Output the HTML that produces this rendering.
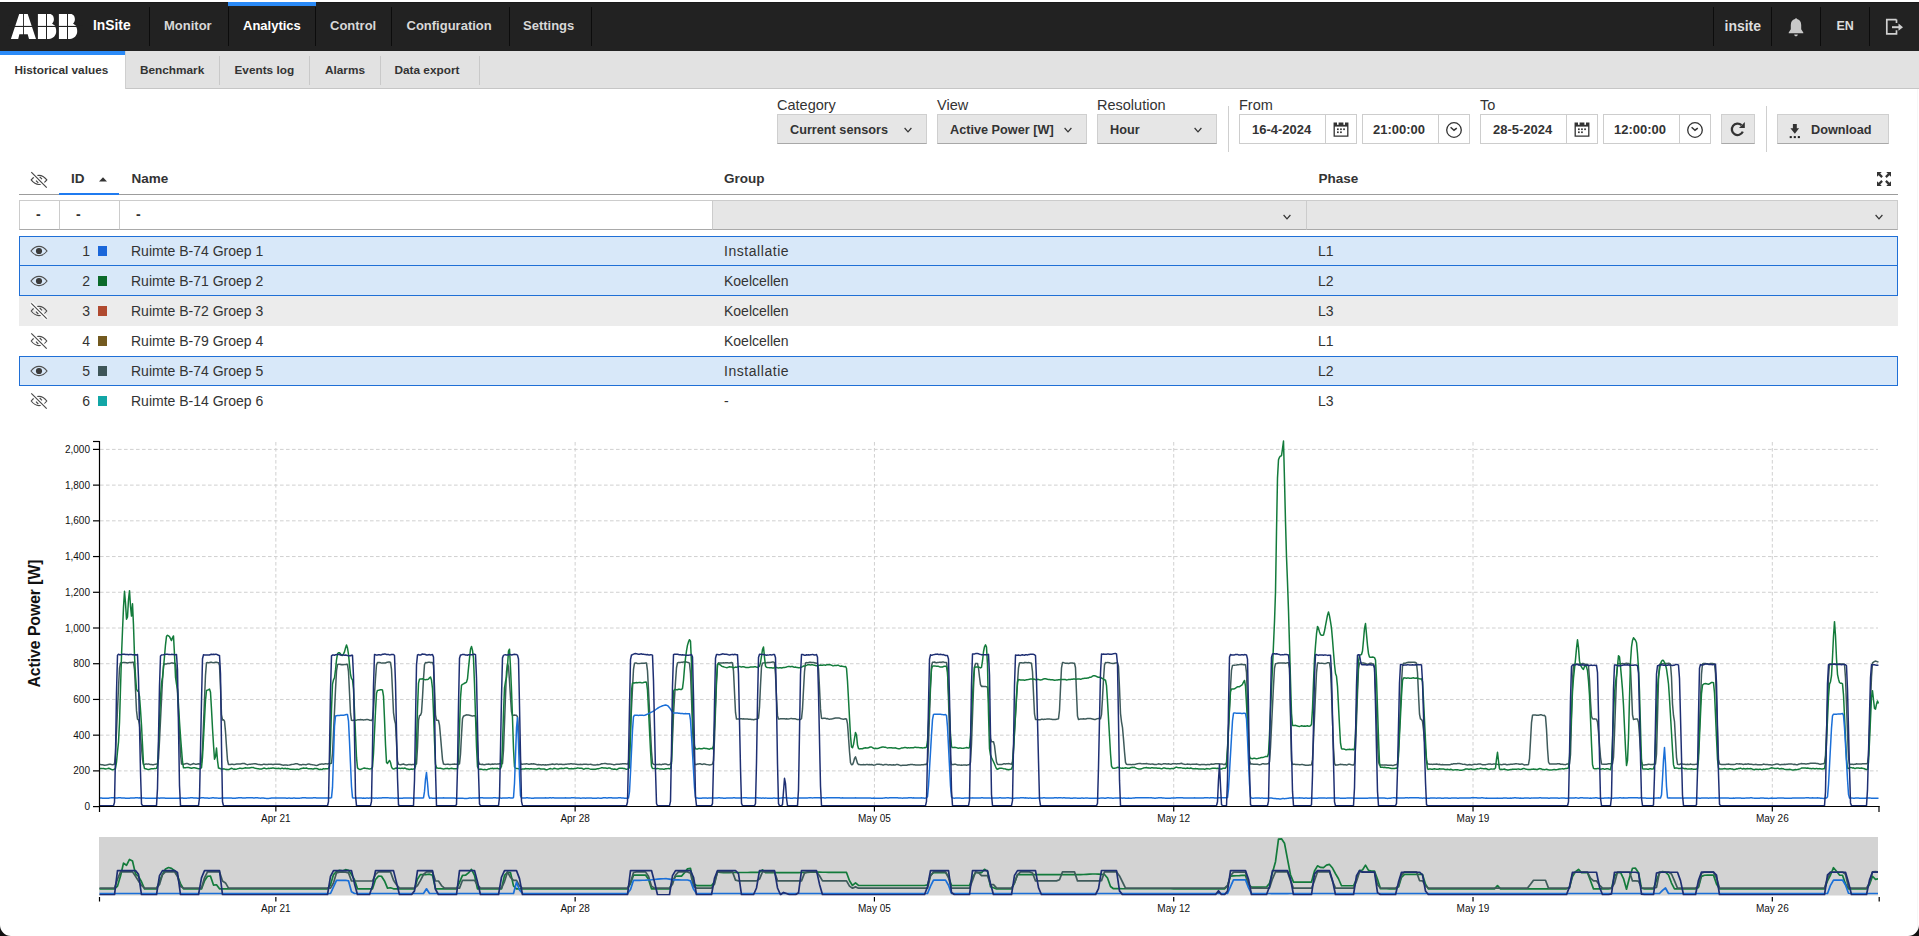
<!DOCTYPE html>
<html><head><meta charset="utf-8"><title>ABB InSite - Historical values</title>
<style>
*{box-sizing:border-box;margin:0;padding:0}
html,body{width:1919px;height:936px;overflow:hidden;background:#fff}
body{position:relative;font-family:"Liberation Sans",sans-serif;color:#333}
.abs{position:absolute}
#hdr{position:absolute;left:0;top:2px;width:1919px;height:49px;background:#222;border-top:1px solid #1a1a1a}
.sep{position:absolute;top:4px;width:1.2px;height:39px;background:#0c0c0c}
.nav{position:absolute;top:15px;font-size:13px;font-weight:bold;color:#d8d8d8;white-space:nowrap;line-height:16px}
#sub{position:absolute;left:0;top:51px;width:1919px;height:38px;background:#e2e2e2;border-bottom:1px solid #c6c6c6}
.stab{position:absolute;top:11.5px;font-size:11.8px;font-weight:bold;color:#333;white-space:nowrap;line-height:15px}
.ssep{position:absolute;top:4.5px;width:1px;height:29px;background:#c9c9c9}
.lbl{position:absolute;top:96.5px;font-size:14.5px;color:#333;line-height:16px;white-space:nowrap}
.sel{position:absolute;top:114px;height:30px;background:#e6e6e6;border:1px solid #cfcfcf;border-bottom:1px solid #a8a8a8}
.sel span{position:absolute;left:12px;top:8px;font-size:12.7px;font-weight:bold;color:#333;white-space:nowrap;line-height:15px}
.chev{position:absolute;top:11.5px;width:8px;height:6px}
.inp{position:absolute;top:114px;height:30px;background:#fff;border:1px solid #cdcdcd}
.inp span{position:absolute;top:7px;font-size:13px;font-weight:bold;color:#333;white-space:nowrap;line-height:15px}
.inp .dv{position:absolute;top:0;width:1px;height:28px;background:#cdcdcd}
.vsep{position:absolute;top:106px;width:1px;height:46px;background:#cfcfcf}
.th{position:absolute;top:171px;font-size:13.5px;font-weight:bold;color:#333;line-height:16px;white-space:nowrap}
.fc{position:absolute;top:200px;height:30px;border:1px solid #cccccc;border-bottom:1.5px solid #a9a9a9}
.row{position:absolute;left:19px;width:1879px;height:30px}
.row.sel2{background:#d8e8f9;border:1.3px solid #1f6fd6}
.cell{position:absolute;top:7px;font-size:14px;color:#333;line-height:16px;white-space:nowrap}
.num{position:absolute;top:7px;font-size:14px;color:#333;line-height:16px;text-align:right;width:20px}
.sq{position:absolute;width:9px;height:10px}
.chart{position:absolute;left:0;top:0}
</style></head>
<body>
<div id="hdr">
  <svg class="abs" style="left:0;top:-3px" width="90" height="50" viewBox="0 0 90 50">
    <g fill="#fff">
      <path d="M10.9,38.9 L19.2,13.9 H27.7 L36,38.9 H29 L27.7,34.3 H19.4 L18.2,38.9 Z"/>
      <path d="M37.9,13.9 H49.6 C52.3,13.9 53.9,16.3 53.9,19.3 C53.9,21.3 53.2,22.6 52,23.5 L55.3,25.9 L55.3,27 C56,28 56.2,30 56.2,31.5 C56.2,35.5 53,38.9 49,38.9 H37.9 Z"/>
      <path d="M58.9,13.9 H70.6 C73.3,13.9 74.9,16.3 74.9,19.3 C74.9,21.3 74.2,22.6 73,23.5 L76.3,25.9 L76.3,27 C77,28 77.2,30 77.2,31.5 C77.2,35.5 74,38.9 70,38.9 H58.9 Z"/>
    </g>
    <g fill="#222">
      <rect x="8" y="25.9" width="75" height="1.1"/>
      <rect x="23" y="12" width="0.9" height="28"/>
      <rect x="46" y="12" width="1" height="28"/>
      <rect x="67" y="12" width="1" height="28"/>
    </g>
  </svg>
  <div class="nav" style="left:93px;top:14.5px;color:#fff;font-size:13.8px">InSite</div>
  <div class="sep" style="left:149px"></div>
  <div class="abs" style="left:228px;top:-1px;width:87.5px;height:4px;background:#2a8af7"></div>
  <div class="nav" style="left:164px">Monitor</div>
  <div class="sep" style="left:228px"></div>
  <div class="nav" style="left:243px;color:#fff">Analytics</div>
  <div class="sep" style="left:315px"></div>
  <div class="nav" style="left:330px">Control</div>
  <div class="sep" style="left:391px"></div>
  <div class="nav" style="left:406.5px">Configuration</div>
  <div class="sep" style="left:508.5px"></div>
  <div class="nav" style="left:523px">Settings</div>
  <div class="sep" style="left:590.5px"></div>

  <div class="sep" style="left:1713px"></div>
  <div class="nav" style="left:1724.5px;top:14.5px;font-size:14px;color:#ddd">insite</div>
  <div class="sep" style="left:1771px"></div>
  <svg class="abs" style="left:1787px;top:12.8px" width="18" height="22" viewBox="0 0 18 22">
    <path d="M9,2.2 C9.6,2.2 10,2.6 10,3.1 C12.6,3.7 14.2,6 14.2,9 L14.2,13.2 L16.3,16.6 L16.3,17.3 L1.7,17.3 L1.7,16.6 L3.8,13.2 L3.8,9 C3.8,6 5.4,3.7 8,3.1 C8,2.6 8.4,2.2 9,2.2 Z M7.2,18.4 L10.8,18.4 C10.8,19.5 10,20.3 9,20.3 C8,20.3 7.2,19.5 7.2,18.4 Z" fill="#c8c8c8"/>
  </svg>
  <div class="sep" style="left:1820px"></div>
  <div class="nav" style="left:1836.5px;font-size:12.5px;color:#ddd">EN</div>
  <div class="sep" style="left:1869px"></div>
  <svg class="abs" style="left:1884px;top:12.3px" width="22" height="22" viewBox="0 0 22 22">
    <path d="M12.5,4.6 H2.8 V18.8 H12.5 V15.2 M12.5,8 V4.6" fill="none" stroke="#d0d0d0" stroke-width="1.7"/>
    <path d="M8,12.2 H15.5" stroke="#d0d0d0" stroke-width="2"/>
    <path d="M14.5,8.6 L19,12.2 L14.5,15.8 Z" fill="#d0d0d0"/>
  </svg>
</div>

<div id="sub">
  <div class="abs" style="left:0;top:0;width:125px;height:38px;background:#fff"></div>
  <div class="abs" style="left:0;top:0;width:125px;height:4px;background:#2a8af7"></div>
  <div class="abs" style="left:125px;top:0;width:1px;height:38px;background:#cfcfcf"></div>
  <div class="abs" style="left:0;top:37px;width:125px;height:2px;background:#fff"></div>
  <div class="stab" style="left:14.5px">Historical values</div>
  <div class="stab" style="left:140px">Benchmark</div>
  <div class="ssep" style="left:219px"></div>
  <div class="stab" style="left:234.5px">Events log</div>
  <div class="ssep" style="left:309px"></div>
  <div class="stab" style="left:325px">Alarms</div>
  <div class="ssep" style="left:380px"></div>
  <div class="stab" style="left:394.5px">Data export</div>
  <div class="ssep" style="left:479px"></div>
</div>

<!-- controls -->
<div class="lbl" style="left:777px">Category</div>
<div class="lbl" style="left:937px">View</div>
<div class="lbl" style="left:1097px">Resolution</div>
<div class="lbl" style="left:1239px">From</div>
<div class="lbl" style="left:1480px">To</div>

<div class="sel" style="left:777px;width:150px"><span>Current sensors</span>
  <svg class="chev" style="left:126px" viewBox="0 0 8 6"><path d="M0.6,1 L4,4.8 L7.4,1" fill="none" stroke="#333" stroke-width="1.2"/></svg></div>
<div class="sel" style="left:937px;width:150px"><span>Active Power [W]</span>
  <svg class="chev" style="left:126px" viewBox="0 0 8 6"><path d="M0.6,1 L4,4.8 L7.4,1" fill="none" stroke="#333" stroke-width="1.2"/></svg></div>
<div class="sel" style="left:1097px;width:120px"><span>Hour</span>
  <svg class="chev" style="left:96px" viewBox="0 0 8 6"><path d="M0.6,1 L4,4.8 L7.4,1" fill="none" stroke="#333" stroke-width="1.2"/></svg></div>

<div class="vsep" style="left:1228px"></div>

<div class="inp" style="left:1239px;width:118px"><span style="left:12px">16-4-2024</span><div class="dv" style="left:85px"></div>
  <svg class="abs" style="left:92px;top:4.5px" width="18" height="18" viewBox="0 0 18 18"><path d="M2.2,3.2 H15.8 V16.2 H2.2 Z" fill="none" stroke="#333" stroke-width="1.3"/><rect x="2" y="3" width="14" height="3.6" fill="#333"/><rect x="5" y="1.8" width="1.6" height="3" fill="#fff"/><rect x="11.4" y="1.8" width="1.6" height="3" fill="#fff"/><g fill="#333"><rect x="5" y="8.4" width="1.7" height="1.7"/><rect x="8.1" y="8.4" width="1.7" height="1.7"/><rect x="11.2" y="8.4" width="1.7" height="1.7"/><rect x="5" y="11.4" width="1.7" height="1.7"/><rect x="8.1" y="11.4" width="1.7" height="1.7"/></g></svg></div>
<div class="inp" style="left:1362px;width:108px"><span style="left:10px">21:00:00</span><div class="dv" style="left:75px"></div>
  <svg class="abs" style="left:82px;top:5.5px" width="18" height="18" viewBox="0 0 18 18"><circle cx="9" cy="9" r="7.3" fill="none" stroke="#333" stroke-width="1.3"/><path d="M5.6,6.2 L9,9.2 L11.8,7.2" fill="none" stroke="#333" stroke-width="1.5"/></svg></div>

<div class="inp" style="left:1480px;width:118px"><span style="left:12px">28-5-2024</span><div class="dv" style="left:85px"></div>
  <svg class="abs" style="left:92px;top:4.5px" width="18" height="18" viewBox="0 0 18 18"><path d="M2.2,3.2 H15.8 V16.2 H2.2 Z" fill="none" stroke="#333" stroke-width="1.3"/><rect x="2" y="3" width="14" height="3.6" fill="#333"/><rect x="5" y="1.8" width="1.6" height="3" fill="#fff"/><rect x="11.4" y="1.8" width="1.6" height="3" fill="#fff"/><g fill="#333"><rect x="5" y="8.4" width="1.7" height="1.7"/><rect x="8.1" y="8.4" width="1.7" height="1.7"/><rect x="11.2" y="8.4" width="1.7" height="1.7"/><rect x="5" y="11.4" width="1.7" height="1.7"/><rect x="8.1" y="11.4" width="1.7" height="1.7"/></g></svg></div>
<div class="inp" style="left:1603px;width:108px"><span style="left:10px">12:00:00</span><div class="dv" style="left:75px"></div>
  <svg class="abs" style="left:82px;top:5.5px" width="18" height="18" viewBox="0 0 18 18"><circle cx="9" cy="9" r="7.3" fill="none" stroke="#333" stroke-width="1.3"/><path d="M5.6,6.2 L9,9.2 L11.8,7.2" fill="none" stroke="#333" stroke-width="1.5"/></svg></div>

<div class="sel" style="left:1721px;width:34px">
  <svg class="abs" style="left:7px;top:5px" width="18" height="18" viewBox="0 0 18 18"><path d="M13.8,11.6 A5.7,5.7 0 1 1 12.5,5.2" fill="none" stroke="#333" stroke-width="2.3"/><path d="M15.8,2 L15.8,7.9 L10,7.9 Z" fill="#333"/></svg></div>
<div class="vsep" style="left:1766px"></div>
<div class="sel" style="left:1777px;width:112px"><span style="left:33px">Download</span>
  <svg class="abs" style="left:10px;top:6px" width="14" height="18" viewBox="0 0 14 18"><path d="M4.9,3 H8.8 V7.2 H11.1 L6.85,12.7 L2.4,7.2 H4.9 Z" fill="#333"/><rect x="1.7" y="15.1" width="2.1" height="2" fill="#222"/><rect x="5.75" y="15.1" width="2.1" height="2" fill="#222"/><rect x="9.8" y="15.1" width="2.1" height="2" fill="#222"/></svg></div>

<!-- table header -->
<svg class="abs" style="left:29px;top:171px" width="20" height="18" viewBox="0 0 20 18">
  <path d="M2.2,8.9 C4.6,5.8 7,4.3 10,4.3 C13,4.3 15.4,5.8 17.8,8.9 C15.4,12 13,13.5 10,13.5 C7,13.5 4.6,12 2.2,8.9 Z" fill="none" stroke="#444" stroke-width="1.15"/>
  <path d="M2.3,1.2 L17.7,16.6" stroke="#fff" stroke-width="4"/>
  <path d="M10.7,5.9 L13,8.2 M7,9.6 L9.3,11.9" stroke="#444" stroke-width="1.2"/>
  <path d="M2.3,1.2 L17.7,16.6" stroke="#444" stroke-width="1.15"/>
</svg>
<div class="th" style="left:71px">ID</div>
<svg class="abs" style="left:99px;top:177px" width="8" height="5" viewBox="0 0 8 5"><path d="M0,4.5 L4,0.3 L8,4.5 Z" fill="#333"/></svg>
<div class="th" style="left:131.5px">Name</div>
<div class="th" style="left:724px">Group</div>
<div class="th" style="left:1318.5px">Phase</div>
<svg class="abs" style="left:1876px;top:171px" width="16" height="16" viewBox="0 0 16 16">
  <g fill="#333">
    <path d="M1,1 H5.8 L4.2,2.6 L6.9,5.3 L5.3,6.9 L2.6,4.2 L1,5.8 Z"/>
    <path d="M15,1 H10.2 L11.8,2.6 L9.1,5.3 L10.7,6.9 L13.4,4.2 L15,5.8 Z"/>
    <path d="M1,15 H5.8 L4.2,13.4 L6.9,10.7 L5.3,9.1 L2.6,11.8 L1,10.2 Z"/>
    <path d="M15,15 H10.2 L11.8,13.4 L9.1,10.7 L10.7,9.1 L13.4,11.8 L15,10.2 Z"/>
  </g>
</svg>
<div class="abs" style="left:19px;top:194px;width:1879px;height:1px;background:#9c9c9c"></div>
<div class="abs" style="left:59px;top:193px;width:60px;height:2px;background:#1f7bf0"></div>

<!-- filter row -->
<div class="fc" style="left:19px;width:41px;background:#fff"><div class="cell" style="left:16px;top:5px;font-weight:bold">-</div></div>
<div class="fc" style="left:59px;width:61px;background:#fff"><div class="cell" style="left:16px;top:5px;font-weight:bold">-</div></div>
<div class="fc" style="left:119px;width:594px;background:#fff"><div class="cell" style="left:16px;top:5px;font-weight:bold">-</div></div>
<div class="fc" style="left:712px;width:595px;background:#e6e6e6">
  <svg class="chev" style="left:569.5px;top:12.5px" viewBox="0 0 8 6"><path d="M0.6,1 L4,4.8 L7.4,1" fill="none" stroke="#333" stroke-width="1.2"/></svg></div>
<div class="fc" style="left:1306px;width:592px;background:#e6e6e6">
  <svg class="chev" style="left:567.5px;top:12.5px" viewBox="0 0 8 6"><path d="M0.6,1 L4,4.8 L7.4,1" fill="none" stroke="#333" stroke-width="1.2"/></svg></div>

<!-- rows -->
<div class="row sel2" style="top:236px;height:30.5px"></div>
<div class="row sel2" style="top:265px;height:31px"></div>
<div class="row" style="top:296px;background:#ececec"></div>
<div class="row sel2" style="top:355.7px;height:30px"></div>

<!-- eyes -->
<svg class="abs" style="left:0;top:230px" width="60" height="190" viewBox="0 230 60 190">
  <defs>
    <g id="eye"><path d="M-8,0 C-5.5,-3.3 -3,-4.6 0,-4.6 C3,-4.6 5.5,-3.3 8,0 C5.5,3.3 3,4.6 0,4.6 C-3,4.6 -5.5,3.3 -8,0 Z" fill="none" stroke="#505050" stroke-width="1.2"/><circle r="3.1" fill="#3a3a3a"/></g>
    <g id="eyex"><path d="M-7.8,0 C-5.4,-3.1 -3,-4.6 0,-4.6 C3,-4.6 5.4,-3.1 7.8,0 C5.4,3.1 3,4.6 0,4.6 C-3,4.6 -5.4,3.1 -7.8,0 Z" fill="none" stroke="#4a4a4a" stroke-width="1.15"/><path d="M-7.7,-7.7 L7.7,7.7" stroke="#fff" stroke-width="4"/><path d="M0.7,-3 L3,-0.7 M-3,0.7 L-0.7,3" stroke="#4a4a4a" stroke-width="1.2"/><path d="M-7.7,-7.7 L7.7,7.7" stroke="#4a4a4a" stroke-width="1.15"/></g>
  </defs>
  <use href="#eye" x="39" y="251"/>
  <use href="#eye" x="39" y="281"/>
  <use href="#eyex" x="39" y="311"/>
  <use href="#eyex" x="39" y="341"/>
  <use href="#eye" x="39" y="371"/>
  <use href="#eyex" x="39" y="401"/>
</svg>

<div class="num" style="left:70px;top:243px">1</div><div class="sq" style="left:98px;top:246px;background:#1a66d9"></div>
<div class="cell" style="left:131px;top:243px">Ruimte B-74 Groep 1</div><div class="cell" style="left:724px;top:243px;letter-spacing:0.55px">Installatie</div><div class="cell" style="left:1318px;top:243px">L1</div>
<div class="num" style="left:70px;top:273px">2</div><div class="sq" style="left:98px;top:276px;background:#0b6a2a"></div>
<div class="cell" style="left:131px;top:273px">Ruimte B-71 Groep 2</div><div class="cell" style="left:724px;top:273px">Koelcellen</div><div class="cell" style="left:1318px;top:273px">L2</div>
<div class="num" style="left:70px;top:303px">3</div><div class="sq" style="left:98px;top:306px;background:#b04a30"></div>
<div class="cell" style="left:131px;top:303px">Ruimte B-72 Groep 3</div><div class="cell" style="left:724px;top:303px">Koelcellen</div><div class="cell" style="left:1318px;top:303px">L3</div>
<div class="num" style="left:70px;top:333px">4</div><div class="sq" style="left:98px;top:336px;background:#735a20"></div>
<div class="cell" style="left:131px;top:333px">Ruimte B-79 Groep 4</div><div class="cell" style="left:724px;top:333px">Koelcellen</div><div class="cell" style="left:1318px;top:333px">L1</div>
<div class="num" style="left:70px;top:363px">5</div><div class="sq" style="left:98px;top:366px;background:#3e5558"></div>
<div class="cell" style="left:131px;top:363px">Ruimte B-74 Groep 5</div><div class="cell" style="left:724px;top:363px;letter-spacing:0.55px">Installatie</div><div class="cell" style="left:1318px;top:363px">L2</div>
<div class="num" style="left:70px;top:393px">6</div><div class="sq" style="left:98px;top:396px;background:#12a6a6"></div>
<div class="cell" style="left:131px;top:393px">Ruimte B-14 Groep 6</div><div class="cell" style="left:724px;top:393px">-</div><div class="cell" style="left:1318px;top:393px">L3</div>

<svg class="chart" width="1919" height="936" viewBox="0 0 1919 936">
<g stroke="#d0d0d0" stroke-width="1" stroke-dasharray="3.6,2.4" fill="none"><line x1="100" x2="1878" y1="770.88" y2="770.88"/><line x1="100" x2="1878" y1="735.16" y2="735.16"/><line x1="100" x2="1878" y1="699.44" y2="699.44"/><line x1="100" x2="1878" y1="663.72" y2="663.72"/><line x1="100" x2="1878" y1="628.00" y2="628.00"/><line x1="100" x2="1878" y1="592.28" y2="592.28"/><line x1="100" x2="1878" y1="556.56" y2="556.56"/><line x1="100" x2="1878" y1="520.84" y2="520.84"/><line x1="100" x2="1878" y1="485.12" y2="485.12"/><line x1="100" x2="1878" y1="449.40" y2="449.40"/><line x1="275.85" x2="275.85" y1="442" y2="806"/><line x1="575.14" x2="575.14" y1="442" y2="806"/><line x1="874.43" x2="874.43" y1="442" y2="806"/><line x1="1173.72" x2="1173.72" y1="442" y2="806"/><line x1="1473.02" x2="1473.02" y1="442" y2="806"/><line x1="1772.31" x2="1772.31" y1="442" y2="806"/></g>
<defs><clipPath id="cm"><rect x="99.5" y="430" width="1780" height="377.5"/></clipPath>
<clipPath id="cn"><rect x="99" y="837" width="1779" height="58.5"/></clipPath></defs>
<g fill="none" stroke-width="1.5" stroke-linejoin="round" clip-path="url(#cm)"><path d="M99.5,764.41 L100.5,764.53 L101.5,764.64 L102.5,764.81 L103.5,764.96 L104.5,765.15 L105.5,765.13 L106.5,764.98 L107.5,764.81 L108.5,764.41 L109.5,764.24 L110.5,764.24 L111.5,764.52 L112.5,764.71 L113.5,764.61 L114.5,764.02 L115.5,753.03 L116.5,731.77 L117.5,709.67 L118.5,687.52 L119.5,668.25 L120.5,663.04 L121.5,662.84 L122.5,662.72 L123.5,662.46 L124.5,662.43 L125.5,662.59 L126.5,662.71 L127.5,662.94 L128.5,662.73 L129.5,662.50 L130.5,662.46 L131.5,662.42 L132.5,662.25 L133.5,662.32 L134.5,669.31 L135.5,689.72 L136.5,710.63 L137.5,719.19 L138.5,719.94 L139.5,724.66 L140.5,736.05 L141.5,748.06 L142.5,759.45 L143.5,764.52 L144.5,764.57 L145.5,764.09 L146.5,764.02 L147.5,764.13 L148.5,763.88 L149.5,764.25 L150.5,764.55 L151.5,764.54 L152.5,764.79 L153.5,764.80 L154.5,764.39 L155.5,764.15 L156.5,764.10 L157.5,763.95 L158.5,758.89 L159.5,740.91 L160.5,720.57 L161.5,700.20 L162.5,680.07 L163.5,665.68 L164.5,663.85 L165.5,664.00 L166.5,663.92 L167.5,663.52 L168.5,663.57 L169.5,663.57 L170.5,663.27 L171.5,662.87 L172.5,663.10 L173.5,663.34 L174.5,663.23 L175.5,663.66 L176.5,672.38 L177.5,692.21 L178.5,712.88 L179.5,733.07 L180.5,753.37 L181.5,763.95 L182.5,764.21 L183.5,764.20 L184.5,764.11 L185.5,763.65 L186.5,763.42 L187.5,763.60 L188.5,763.98 L189.5,764.55 L190.5,764.71 L191.5,764.33 L192.5,763.93 L193.5,763.55 L194.5,763.90 L195.5,764.35 L196.5,764.37 L197.5,763.98 L198.5,763.87 L199.5,763.96 L200.5,763.77 L201.5,762.41 L202.5,748.57 L203.5,724.26 L204.5,699.28 L205.5,675.09 L206.5,662.64 L207.5,662.62 L208.5,662.63 L209.5,662.54 L210.5,662.24 L211.5,662.28 L212.5,662.65 L213.5,662.69 L214.5,662.46 L215.5,662.28 L216.5,662.15 L217.5,662.52 L218.5,662.83 L219.5,665.50 L220.5,686.99 L221.5,714.73 L222.5,719.94 L223.5,719.72 L224.5,721.11 L225.5,731.68 L226.5,746.68 L227.5,760.21 L228.5,764.56 L229.5,764.51 L230.5,764.44 L231.5,764.34 L232.5,764.35 L233.5,764.50 L234.5,764.44 L235.5,764.25 L236.5,763.93 L237.5,763.91 L238.5,763.94 L239.5,763.95 L240.5,763.93 L241.5,763.65 L242.5,763.44 L243.5,763.56 L244.5,763.47 L245.5,763.97 L246.5,764.40 L247.5,764.70 L248.5,764.37 L249.5,764.22 L250.5,764.16 L251.5,764.05 L252.5,763.88 L253.5,763.85 L254.5,763.69 L255.5,763.78 L256.5,764.01 L257.5,764.31 L258.5,764.42 L259.5,764.54 L260.5,764.74 L261.5,764.71 L262.5,764.65 L263.5,764.18 L264.5,764.17 L265.5,764.51 L266.5,764.57 L267.5,764.62 L268.5,764.26 L269.5,764.37 L270.5,764.16 L271.5,764.34 L272.5,764.51 L273.5,764.55 L274.5,764.23 L275.5,764.20 L276.5,764.25 L277.5,764.20 L278.5,764.18 L279.5,764.18 L280.5,764.44 L281.5,764.76 L282.5,765.10 L283.5,765.20 L284.5,764.98 L285.5,764.89 L286.5,765.02 L287.5,765.25 L288.5,765.13 L289.5,764.96 L290.5,764.69 L291.5,764.53 L292.5,764.37 L293.5,764.23 L294.5,764.06 L295.5,763.86 L296.5,763.72 L297.5,763.84 L298.5,764.32 L299.5,764.70 L300.5,764.73 L301.5,764.89 L302.5,764.44 L303.5,764.39 L304.5,764.61 L305.5,764.74 L306.5,764.69 L307.5,764.18 L308.5,764.11 L309.5,764.11 L310.5,764.48 L311.5,764.58 L312.5,764.64 L313.5,764.86 L314.5,765.10 L315.5,765.29 L316.5,765.43 L317.5,765.20 L318.5,764.76 L319.5,764.33 L320.5,764.17 L321.5,764.11 L322.5,764.10 L323.5,764.18 L324.5,763.90 L325.5,763.71 L326.5,763.83 L327.5,763.91 L328.5,763.64 L329.5,763.48 L330.5,763.38 L331.5,763.28 L332.5,753.27 L333.5,732.71 L334.5,711.27 L335.5,689.87 L336.5,670.86 L337.5,664.64 L338.5,664.31 L339.5,664.34 L340.5,664.49 L341.5,664.81 L342.5,664.84 L343.5,664.64 L344.5,664.38 L345.5,664.42 L346.5,664.21 L347.5,664.41 L348.5,671.67 L349.5,692.42 L350.5,713.17 L351.5,720.36 L352.5,720.44 L353.5,720.14 L354.5,720.13 L355.5,720.16 L356.5,720.13 L357.5,719.85 L358.5,719.82 L359.5,719.69 L360.5,719.57 L361.5,719.81 L362.5,719.82 L363.5,720.00 L364.5,719.87 L365.5,719.80 L366.5,719.57 L367.5,719.55 L368.5,719.63 L369.5,720.14 L370.5,720.24 L371.5,720.44 L372.5,719.29 L373.5,709.35 L374.5,693.83 L375.5,678.18 L376.5,664.87 L377.5,662.58 L378.5,662.44 L379.5,662.47 L380.5,662.79 L381.5,663.13 L382.5,662.96 L383.5,662.89 L384.5,663.03 L385.5,663.04 L386.5,662.53 L387.5,662.21 L388.5,661.92 L389.5,662.00 L390.5,662.46 L391.5,669.47 L392.5,691.03 L393.5,712.57 L394.5,719.80 L395.5,723.80 L396.5,743.02 L397.5,761.05 L398.5,764.21 L399.5,764.50 L400.5,764.69 L401.5,764.48 L402.5,764.25 L403.5,764.06 L404.5,764.49 L405.5,764.82 L406.5,765.04 L407.5,764.86 L408.5,764.41 L409.5,764.39 L410.5,764.45 L411.5,764.71 L412.5,764.61 L413.5,764.56 L414.5,764.31 L415.5,764.51 L416.5,763.96 L417.5,747.38 L418.5,720.36 L419.5,715.57 L420.5,715.32 L421.5,712.46 L422.5,697.34 L423.5,678.84 L424.5,664.49 L425.5,662.54 L426.5,662.74 L427.5,662.41 L428.5,662.19 L429.5,662.21 L430.5,662.49 L431.5,662.54 L432.5,662.43 L433.5,665.33 L434.5,686.78 L435.5,714.78 L436.5,720.28 L437.5,720.27 L438.5,720.52 L439.5,725.16 L440.5,736.18 L441.5,748.10 L442.5,759.61 L443.5,764.00 L444.5,764.19 L445.5,764.41 L446.5,764.37 L447.5,764.30 L448.5,764.29 L449.5,764.60 L450.5,764.54 L451.5,764.37 L452.5,764.23 L453.5,764.16 L454.5,764.10 L455.5,764.29 L456.5,764.22 L457.5,764.12 L458.5,764.42 L459.5,763.91 L460.5,754.09 L461.5,735.13 L462.5,718.77 L463.5,716.07 L464.5,715.75 L465.5,715.21 L466.5,714.85 L467.5,715.05 L468.5,715.00 L469.5,715.22 L470.5,715.42 L471.5,715.77 L472.5,716.08 L473.5,715.86 L474.5,715.68 L475.5,716.06 L476.5,725.53 L477.5,744.83 L478.5,761.29 L479.5,764.34 L480.5,764.33 L481.5,764.42 L482.5,764.23 L483.5,764.67 L484.5,764.68 L485.5,764.41 L486.5,764.25 L487.5,764.14 L488.5,764.11 L489.5,764.23 L490.5,764.52 L491.5,764.19 L492.5,763.96 L493.5,764.28 L494.5,764.04 L495.5,763.92 L496.5,764.14 L497.5,764.04 L498.5,763.97 L499.5,763.68 L500.5,763.64 L501.5,763.96 L502.5,763.53 L503.5,750.09 L504.5,723.33 L505.5,696.27 L506.5,671.64 L507.5,663.67 L508.5,666.80 L509.5,681.22 L510.5,697.55 L511.5,711.89 L512.5,715.54 L513.5,715.28 L514.5,715.11 L515.5,715.21 L516.5,715.31 L517.5,716.89 L518.5,730.13 L519.5,750.13 L520.5,762.86 L521.5,764.36 L522.5,764.17 L523.5,764.11 L524.5,763.88 L525.5,764.00 L526.5,763.71 L527.5,763.87 L528.5,764.35 L529.5,764.28 L530.5,763.97 L531.5,763.87 L532.5,763.98 L533.5,763.83 L534.5,763.98 L535.5,764.15 L536.5,764.51 L537.5,764.72 L538.5,764.59 L539.5,764.85 L540.5,764.83 L541.5,764.91 L542.5,764.76 L543.5,764.83 L544.5,764.95 L545.5,764.78 L546.5,764.90 L547.5,764.79 L548.5,764.74 L549.5,764.52 L550.5,764.50 L551.5,764.23 L552.5,764.06 L553.5,764.22 L554.5,764.47 L555.5,764.30 L556.5,764.11 L557.5,764.08 L558.5,764.48 L559.5,764.35 L560.5,764.28 L561.5,764.34 L562.5,764.53 L563.5,764.52 L564.5,764.43 L565.5,764.21 L566.5,764.16 L567.5,764.09 L568.5,763.93 L569.5,764.02 L570.5,763.84 L571.5,763.74 L572.5,763.89 L573.5,764.03 L574.5,763.88 L575.5,764.20 L576.5,764.33 L577.5,764.57 L578.5,764.49 L579.5,764.40 L580.5,764.36 L581.5,764.40 L582.5,764.41 L583.5,764.31 L584.5,764.37 L585.5,764.32 L586.5,764.29 L587.5,764.50 L588.5,764.51 L589.5,764.37 L590.5,764.25 L591.5,764.49 L592.5,764.80 L593.5,764.94 L594.5,764.92 L595.5,764.95 L596.5,764.76 L597.5,764.54 L598.5,764.65 L599.5,764.45 L600.5,764.21 L601.5,763.78 L602.5,763.76 L603.5,763.63 L604.5,763.45 L605.5,763.53 L606.5,763.71 L607.5,763.92 L608.5,763.97 L609.5,764.00 L610.5,764.10 L611.5,764.14 L612.5,764.36 L613.5,764.69 L614.5,764.85 L615.5,764.40 L616.5,764.25 L617.5,764.33 L618.5,764.30 L619.5,764.14 L620.5,763.98 L621.5,763.95 L622.5,763.82 L623.5,763.84 L624.5,763.77 L625.5,763.80 L626.5,763.90 L627.5,764.10 L628.5,762.62 L629.5,749.35 L630.5,728.62 L631.5,708.11 L632.5,687.97 L633.5,669.49 L634.5,663.18 L635.5,662.96 L636.5,663.10 L637.5,663.45 L638.5,663.62 L639.5,663.61 L640.5,663.38 L641.5,663.26 L642.5,663.20 L643.5,663.13 L644.5,663.35 L645.5,662.96 L646.5,663.06 L647.5,670.88 L648.5,689.94 L649.5,710.56 L650.5,730.98 L651.5,751.26 L652.5,763.16 L653.5,764.34 L654.5,764.60 L655.5,764.66 L656.5,764.47 L657.5,764.60 L658.5,764.47 L659.5,764.26 L660.5,764.48 L661.5,764.66 L662.5,764.30 L663.5,764.28 L664.5,764.08 L665.5,763.99 L666.5,764.25 L667.5,764.68 L668.5,764.84 L669.5,764.44 L670.5,764.12 L671.5,761.54 L672.5,739.64 L673.5,714.63 L674.5,697.94 L675.5,681.85 L676.5,667.76 L677.5,662.91 L678.5,662.43 L679.5,662.39 L680.5,662.53 L681.5,662.34 L682.5,662.16 L683.5,662.01 L684.5,661.88 L685.5,661.89 L686.5,662.03 L687.5,662.41 L688.5,662.61 L689.5,663.14 L690.5,673.45 L691.5,698.74 L692.5,726.54 L693.5,752.63 L694.5,764.08 L695.5,764.49 L696.5,764.44 L697.5,764.05 L698.5,763.98 L699.5,763.69 L700.5,763.81 L701.5,764.37 L702.5,764.39 L703.5,764.03 L704.5,763.90 L705.5,764.31 L706.5,764.48 L707.5,764.62 L708.5,764.86 L709.5,764.94 L710.5,764.77 L711.5,764.49 L712.5,764.15 L713.5,760.59 L714.5,738.87 L715.5,710.68 L716.5,682.78 L717.5,664.85 L718.5,662.77 L719.5,663.12 L720.5,663.03 L721.5,662.92 L722.5,662.89 L723.5,662.86 L724.5,662.88 L725.5,662.74 L726.5,662.72 L727.5,662.78 L728.5,662.90 L729.5,662.98 L730.5,662.70 L731.5,662.50 L732.5,662.93 L733.5,671.09 L734.5,691.95 L735.5,712.47 L736.5,719.02 L737.5,719.08 L738.5,719.04 L739.5,719.01 L740.5,718.75 L741.5,718.82 L742.5,719.06 L743.5,718.85 L744.5,718.90 L745.5,718.88 L746.5,719.00 L747.5,718.97 L748.5,719.20 L749.5,719.14 L750.5,719.16 L751.5,719.47 L752.5,719.53 L753.5,719.66 L754.5,719.40 L755.5,719.22 L756.5,719.21 L757.5,718.98 L758.5,718.23 L759.5,707.16 L760.5,685.39 L761.5,666.74 L762.5,663.26 L763.5,662.90 L764.5,662.76 L765.5,662.88 L766.5,662.83 L767.5,662.53 L768.5,662.45 L769.5,662.48 L770.5,662.48 L771.5,662.17 L772.5,661.97 L773.5,661.98 L774.5,662.72 L775.5,674.75 L776.5,697.59 L777.5,715.63 L778.5,718.91 L779.5,718.94 L780.5,718.82 L781.5,718.77 L782.5,718.70 L783.5,718.71 L784.5,718.80 L785.5,719.00 L786.5,718.74 L787.5,718.89 L788.5,718.90 L789.5,718.78 L790.5,718.62 L791.5,718.62 L792.5,718.65 L793.5,718.71 L794.5,718.78 L795.5,718.85 L796.5,719.24 L797.5,719.51 L798.5,719.49 L799.5,719.41 L800.5,719.49 L801.5,718.70 L802.5,708.95 L803.5,689.95 L804.5,671.70 L805.5,663.02 L806.5,662.59 L807.5,662.63 L808.5,662.52 L809.5,662.32 L810.5,662.28 L811.5,662.53 L812.5,662.60 L813.5,662.53 L814.5,662.73 L815.5,662.97 L816.5,663.24 L817.5,663.35 L818.5,668.52 L819.5,687.84 L820.5,708.88 L821.5,718.24 L822.5,718.53 L823.5,718.25 L824.5,718.26 L825.5,718.32 L826.5,718.73 L827.5,718.59 L828.5,718.94 L829.5,719.17 L830.5,719.08 L831.5,718.90 L832.5,718.72 L833.5,718.46 L834.5,718.20 L835.5,717.93 L836.5,718.02 L837.5,718.09 L838.5,718.08 L839.5,718.10 L840.5,718.53 L841.5,718.87 L842.5,719.09 L843.5,719.15 L844.5,718.94 L845.5,718.86 L846.5,718.91 L847.5,723.96 L848.5,737.19 L849.5,751.50 L850.5,762.73 L851.5,764.78 L852.5,764.57 L853.5,762.38 L854.5,758.45 L855.5,756.79 L856.5,759.92 L857.5,763.33 L858.5,764.46 L859.5,764.54 L860.5,764.63 L861.5,764.75 L862.5,764.63 L863.5,764.57 L864.5,764.66 L865.5,764.69 L866.5,764.38 L867.5,764.44 L868.5,764.71 L869.5,764.62 L870.5,764.67 L871.5,764.50 L872.5,764.74 L873.5,765.19 L874.5,765.08 L875.5,764.74 L876.5,764.37 L877.5,764.27 L878.5,764.22 L879.5,764.26 L880.5,764.42 L881.5,764.47 L882.5,764.92 L883.5,764.93 L884.5,764.61 L885.5,764.47 L886.5,764.40 L887.5,764.70 L888.5,764.89 L889.5,764.78 L890.5,764.77 L891.5,765.08 L892.5,765.07 L893.5,764.74 L894.5,764.94 L895.5,764.89 L896.5,764.43 L897.5,764.56 L898.5,764.80 L899.5,765.17 L900.5,765.54 L901.5,765.44 L902.5,765.24 L903.5,765.26 L904.5,765.34 L905.5,765.23 L906.5,765.35 L907.5,764.98 L908.5,764.69 L909.5,764.75 L910.5,764.59 L911.5,764.47 L912.5,764.39 L913.5,764.85 L914.5,764.79 L915.5,764.96 L916.5,764.94 L917.5,764.88 L918.5,765.08 L919.5,765.00 L920.5,764.98 L921.5,764.87 L922.5,764.76 L923.5,764.75 L924.5,764.39 L925.5,764.31 L926.5,764.60 L927.5,762.22 L928.5,744.13 L929.5,715.94 L930.5,687.66 L931.5,665.96 L932.5,662.24 L933.5,662.15 L934.5,662.02 L935.5,662.52 L936.5,662.77 L937.5,662.53 L938.5,662.49 L939.5,662.25 L940.5,662.15 L941.5,662.16 L942.5,661.96 L943.5,662.09 L944.5,662.38 L945.5,662.42 L946.5,662.44 L947.5,670.24 L948.5,699.88 L949.5,733.98 L950.5,760.10 L951.5,764.70 L952.5,764.59 L953.5,764.58 L954.5,764.27 L955.5,764.32 L956.5,764.62 L957.5,764.96 L958.5,764.94 L959.5,764.93 L960.5,765.13 L961.5,765.10 L962.5,765.13 L963.5,764.97 L964.5,765.00 L965.5,765.09 L966.5,765.32 L967.5,764.88 L968.5,764.79 L969.5,764.74 L970.5,762.32 L971.5,743.93 L972.5,716.06 L973.5,688.43 L974.5,667.03 L975.5,663.56 L976.5,663.39 L977.5,663.46 L978.5,668.17 L979.5,677.00 L980.5,684.63 L981.5,686.48 L982.5,686.28 L983.5,686.46 L984.5,686.38 L985.5,686.39 L986.5,686.83 L987.5,687.10 L988.5,698.33 L989.5,720.88 L990.5,738.53 L991.5,741.72 L992.5,741.84 L993.5,741.77 L994.5,745.63 L995.5,754.12 L996.5,762.06 L997.5,764.28 L998.5,764.54 L999.5,764.57 L1000.5,764.54 L1001.5,764.60 L1002.5,764.33 L1003.5,763.82 L1004.5,763.78 L1005.5,763.97 L1006.5,763.64 L1007.5,763.63 L1008.5,763.62 L1009.5,763.67 L1010.5,764.07 L1011.5,764.15 L1012.5,761.53 L1013.5,747.76 L1014.5,731.66 L1015.5,715.27 L1016.5,699.04 L1017.5,682.69 L1018.5,667.90 L1019.5,662.98 L1020.5,662.67 L1021.5,662.83 L1022.5,663.07 L1023.5,663.10 L1024.5,662.50 L1025.5,662.49 L1026.5,662.60 L1027.5,662.68 L1028.5,662.61 L1029.5,662.67 L1030.5,662.96 L1031.5,663.32 L1032.5,671.88 L1033.5,693.47 L1034.5,713.96 L1035.5,719.48 L1036.5,719.40 L1037.5,719.70 L1038.5,719.78 L1039.5,719.76 L1040.5,719.67 L1041.5,719.28 L1042.5,719.37 L1043.5,719.47 L1044.5,719.37 L1045.5,719.36 L1046.5,719.11 L1047.5,719.00 L1048.5,719.06 L1049.5,718.93 L1050.5,719.13 L1051.5,719.19 L1052.5,719.40 L1053.5,719.56 L1054.5,719.56 L1055.5,719.58 L1056.5,719.23 L1057.5,719.04 L1058.5,718.73 L1059.5,710.24 L1060.5,688.23 L1061.5,667.79 L1062.5,662.60 L1063.5,662.59 L1064.5,662.91 L1065.5,663.15 L1066.5,663.23 L1067.5,663.32 L1068.5,663.46 L1069.5,663.25 L1070.5,663.04 L1071.5,662.89 L1072.5,662.97 L1073.5,663.14 L1074.5,663.23 L1075.5,667.76 L1076.5,693.05 L1077.5,716.12 L1078.5,719.41 L1079.5,719.23 L1080.5,719.04 L1081.5,718.96 L1082.5,718.91 L1083.5,718.72 L1084.5,719.02 L1085.5,719.11 L1086.5,718.70 L1087.5,718.39 L1088.5,718.58 L1089.5,718.52 L1090.5,718.56 L1091.5,718.77 L1092.5,718.99 L1093.5,719.28 L1094.5,719.55 L1095.5,719.41 L1096.5,718.91 L1097.5,718.62 L1098.5,718.46 L1099.5,718.77 L1100.5,718.84 L1101.5,714.61 L1102.5,698.11 L1103.5,679.55 L1104.5,664.92 L1105.5,662.61 L1106.5,662.74 L1107.5,662.55 L1108.5,662.62 L1109.5,662.76 L1110.5,663.14 L1111.5,663.37 L1112.5,663.43 L1113.5,663.55 L1114.5,663.19 L1115.5,662.89 L1116.5,662.86 L1117.5,662.79 L1118.5,666.42 L1119.5,688.37 L1120.5,713.34 L1121.5,721.79 L1122.5,727.58 L1123.5,739.15 L1124.5,751.80 L1125.5,762.44 L1126.5,764.27 L1127.5,764.40 L1128.5,764.45 L1129.5,764.59 L1130.5,764.61 L1131.5,764.63 L1132.5,764.45 L1133.5,764.41 L1134.5,764.52 L1135.5,764.26 L1136.5,763.91 L1137.5,763.76 L1138.5,763.62 L1139.5,763.57 L1140.5,763.48 L1141.5,763.69 L1142.5,763.87 L1143.5,763.80 L1144.5,763.69 L1145.5,763.65 L1146.5,763.57 L1147.5,763.80 L1148.5,763.89 L1149.5,764.08 L1150.5,764.20 L1151.5,764.11 L1152.5,763.96 L1153.5,764.25 L1154.5,764.53 L1155.5,764.51 L1156.5,764.43 L1157.5,764.15 L1158.5,763.82 L1159.5,763.94 L1160.5,764.17 L1161.5,764.42 L1162.5,764.12 L1163.5,763.84 L1164.5,763.70 L1165.5,763.76 L1166.5,763.96 L1167.5,764.00 L1168.5,763.81 L1169.5,764.09 L1170.5,764.28 L1171.5,764.14 L1172.5,763.77 L1173.5,763.81 L1174.5,763.68 L1175.5,763.75 L1176.5,763.91 L1177.5,763.85 L1178.5,763.79 L1179.5,763.84 L1180.5,763.56 L1181.5,763.31 L1182.5,763.72 L1183.5,764.02 L1184.5,764.28 L1185.5,764.38 L1186.5,764.25 L1187.5,764.08 L1188.5,764.28 L1189.5,764.23 L1190.5,764.43 L1191.5,764.36 L1192.5,764.21 L1193.5,764.32 L1194.5,764.36 L1195.5,764.18 L1196.5,763.96 L1197.5,764.29 L1198.5,764.46 L1199.5,764.78 L1200.5,764.77 L1201.5,764.39 L1202.5,764.47 L1203.5,764.59 L1204.5,764.47 L1205.5,764.64 L1206.5,764.80 L1207.5,764.53 L1208.5,764.55 L1209.5,764.65 L1210.5,764.31 L1211.5,764.08 L1212.5,764.26 L1213.5,764.23 L1214.5,764.01 L1215.5,763.81 L1216.5,763.81 L1217.5,763.63 L1218.5,763.72 L1219.5,763.90 L1220.5,764.10 L1221.5,763.97 L1222.5,764.09 L1223.5,764.42 L1224.5,764.36 L1225.5,764.38 L1226.5,762.40 L1227.5,748.17 L1228.5,728.21 L1229.5,707.74 L1230.5,687.58 L1231.5,670.06 L1232.5,665.42 L1233.5,665.28 L1234.5,665.26 L1235.5,665.13 L1236.5,665.02 L1237.5,664.67 L1238.5,664.74 L1239.5,664.58 L1240.5,664.41 L1241.5,664.33 L1242.5,664.57 L1243.5,664.66 L1244.5,664.50 L1245.5,664.66 L1246.5,672.57 L1247.5,702.32 L1248.5,736.34 L1249.5,760.48 L1250.5,763.92 L1251.5,763.87 L1252.5,764.08 L1253.5,764.32 L1254.5,764.17 L1255.5,764.21 L1256.5,764.22 L1257.5,764.33 L1258.5,764.58 L1259.5,764.68 L1260.5,764.54 L1261.5,764.18 L1262.5,763.67 L1263.5,763.72 L1264.5,764.09 L1265.5,763.99 L1266.5,764.00 L1267.5,763.86 L1268.5,763.79 L1269.5,761.70 L1270.5,747.37 L1271.5,726.60 L1272.5,706.15 L1273.5,685.99 L1274.5,668.22 L1275.5,663.67 L1276.5,663.48 L1277.5,663.21 L1278.5,662.94 L1279.5,662.94 L1280.5,662.97 L1281.5,662.93 L1282.5,662.88 L1283.5,662.89 L1284.5,663.01 L1285.5,663.24 L1286.5,663.08 L1287.5,662.80 L1288.5,662.85 L1289.5,668.62 L1290.5,717.29 L1291.5,760.94 L1292.5,764.45 L1293.5,764.21 L1294.5,764.14 L1295.5,764.47 L1296.5,764.56 L1297.5,764.49 L1298.5,764.62 L1299.5,764.68 L1300.5,764.63 L1301.5,764.44 L1302.5,764.43 L1303.5,764.85 L1304.5,765.08 L1305.5,765.29 L1306.5,765.23 L1307.5,765.17 L1308.5,765.20 L1309.5,764.94 L1310.5,764.91 L1311.5,764.79 L1312.5,759.64 L1313.5,739.72 L1314.5,717.07 L1315.5,694.34 L1316.5,672.60 L1317.5,662.92 L1318.5,662.87 L1319.5,663.24 L1320.5,663.37 L1321.5,663.26 L1322.5,663.37 L1323.5,663.38 L1324.5,663.64 L1325.5,663.41 L1326.5,663.17 L1327.5,662.78 L1328.5,662.83 L1329.5,663.09 L1330.5,669.49 L1331.5,693.34 L1332.5,720.56 L1333.5,747.47 L1334.5,763.50 L1335.5,765.17 L1336.5,764.93 L1337.5,765.01 L1338.5,764.71 L1339.5,764.56 L1340.5,764.35 L1341.5,764.43 L1342.5,764.57 L1343.5,764.71 L1344.5,764.73 L1345.5,764.83 L1346.5,764.98 L1347.5,764.67 L1348.5,764.27 L1349.5,764.15 L1350.5,764.51 L1351.5,764.77 L1352.5,764.92 L1353.5,764.95 L1354.5,763.66 L1355.5,748.27 L1356.5,721.14 L1357.5,693.38 L1358.5,669.03 L1359.5,662.92 L1360.5,662.88 L1361.5,663.11 L1362.5,663.10 L1363.5,662.94 L1364.5,663.31 L1365.5,663.51 L1366.5,663.90 L1367.5,664.24 L1368.5,663.95 L1369.5,663.49 L1370.5,663.19 L1371.5,663.33 L1372.5,663.70 L1373.5,663.99 L1374.5,667.54 L1375.5,688.55 L1376.5,715.73 L1377.5,742.80 L1378.5,762.06 L1379.5,765.00 L1380.5,764.99 L1381.5,764.94 L1382.5,764.90 L1383.5,765.12 L1384.5,765.05 L1385.5,765.01 L1386.5,765.04 L1387.5,765.21 L1388.5,765.20 L1389.5,765.19 L1390.5,765.26 L1391.5,765.23 L1392.5,765.39 L1393.5,765.39 L1394.5,765.01 L1395.5,764.77 L1396.5,764.63 L1397.5,763.52 L1398.5,750.69 L1399.5,728.34 L1400.5,705.53 L1401.5,683.11 L1402.5,665.92 L1403.5,663.21 L1404.5,663.27 L1405.5,663.15 L1406.5,662.82 L1407.5,662.47 L1408.5,662.18 L1409.5,662.20 L1410.5,662.29 L1411.5,662.18 L1412.5,662.33 L1413.5,662.35 L1414.5,662.19 L1415.5,662.51 L1416.5,663.04 L1417.5,672.76 L1418.5,694.12 L1419.5,714.01 L1420.5,719.05 L1421.5,719.36 L1422.5,721.35 L1423.5,729.90 L1424.5,740.09 L1425.5,750.27 L1426.5,759.90 L1427.5,764.01 L1428.5,763.92 L1429.5,764.27 L1430.5,764.37 L1431.5,764.14 L1432.5,764.39 L1433.5,764.21 L1434.5,764.29 L1435.5,764.28 L1436.5,764.08 L1437.5,764.25 L1438.5,764.44 L1439.5,764.32 L1440.5,764.65 L1441.5,764.67 L1442.5,764.61 L1443.5,764.81 L1444.5,764.87 L1445.5,764.87 L1446.5,764.77 L1447.5,764.81 L1448.5,764.84 L1449.5,764.81 L1450.5,764.55 L1451.5,764.11 L1452.5,764.16 L1453.5,763.83 L1454.5,763.67 L1455.5,763.83 L1456.5,763.84 L1457.5,763.50 L1458.5,763.57 L1459.5,763.55 L1460.5,763.65 L1461.5,763.86 L1462.5,764.24 L1463.5,764.37 L1464.5,764.20 L1465.5,764.43 L1466.5,764.69 L1467.5,764.91 L1468.5,764.69 L1469.5,764.60 L1470.5,764.82 L1471.5,765.03 L1472.5,764.81 L1473.5,764.41 L1474.5,764.15 L1475.5,764.32 L1476.5,764.38 L1477.5,764.13 L1478.5,764.03 L1479.5,764.12 L1480.5,764.09 L1481.5,764.37 L1482.5,764.78 L1483.5,764.77 L1484.5,764.81 L1485.5,764.68 L1486.5,764.37 L1487.5,764.23 L1488.5,764.02 L1489.5,764.02 L1490.5,764.02 L1491.5,764.39 L1492.5,764.18 L1493.5,763.93 L1494.5,764.09 L1495.5,764.00 L1496.5,764.04 L1497.5,764.37 L1498.5,764.64 L1499.5,764.62 L1500.5,764.55 L1501.5,764.65 L1502.5,764.54 L1503.5,764.22 L1504.5,764.24 L1505.5,764.30 L1506.5,764.70 L1507.5,764.75 L1508.5,764.61 L1509.5,764.46 L1510.5,764.29 L1511.5,764.17 L1512.5,764.17 L1513.5,764.10 L1514.5,763.89 L1515.5,763.80 L1516.5,763.73 L1517.5,763.88 L1518.5,764.05 L1519.5,764.34 L1520.5,764.14 L1521.5,764.00 L1522.5,764.08 L1523.5,764.56 L1524.5,764.92 L1525.5,764.84 L1526.5,764.63 L1527.5,764.73 L1528.5,764.44 L1529.5,758.55 L1530.5,741.01 L1531.5,722.59 L1532.5,715.29 L1533.5,714.97 L1534.5,714.98 L1535.5,715.01 L1536.5,715.16 L1537.5,715.13 L1538.5,715.16 L1539.5,715.12 L1540.5,714.72 L1541.5,714.86 L1542.5,715.20 L1543.5,715.42 L1544.5,715.36 L1545.5,716.68 L1546.5,729.11 L1547.5,748.43 L1548.5,762.02 L1549.5,763.96 L1550.5,763.99 L1551.5,764.10 L1552.5,764.09 L1553.5,764.06 L1554.5,764.00 L1555.5,763.95 L1556.5,763.90 L1557.5,763.77 L1558.5,763.71 L1559.5,763.78 L1560.5,764.23 L1561.5,764.26 L1562.5,764.27 L1563.5,764.45 L1564.5,764.60 L1565.5,764.64 L1566.5,764.19 L1567.5,763.86 L1568.5,764.14 L1569.5,763.90 L1570.5,754.65 L1571.5,718.51 L1572.5,680.08 L1573.5,664.61 L1574.5,664.04 L1575.5,664.22 L1576.5,664.31 L1577.5,664.25 L1578.5,664.15 L1579.5,664.27 L1580.5,664.01 L1581.5,663.97 L1582.5,663.55 L1583.5,663.60 L1584.5,664.03 L1585.5,664.41 L1586.5,664.35 L1587.5,664.34 L1588.5,665.99 L1589.5,679.83 L1590.5,701.22 L1591.5,716.39 L1592.5,718.73 L1593.5,718.91 L1594.5,718.87 L1595.5,719.12 L1596.5,719.23 L1597.5,722.01 L1598.5,732.49 L1599.5,744.78 L1600.5,757.08 L1601.5,763.90 L1602.5,764.14 L1603.5,764.22 L1604.5,764.21 L1605.5,764.18 L1606.5,764.19 L1607.5,764.00 L1608.5,763.86 L1609.5,763.82 L1610.5,763.82 L1611.5,763.86 L1612.5,763.80 L1613.5,757.45 L1614.5,733.27 L1615.5,705.53 L1616.5,678.25 L1617.5,664.14 L1618.5,663.52 L1619.5,663.78 L1620.5,663.78 L1621.5,663.68 L1622.5,663.60 L1623.5,663.80 L1624.5,663.69 L1625.5,663.42 L1626.5,663.20 L1627.5,663.47 L1628.5,663.38 L1629.5,663.83 L1630.5,668.02 L1631.5,690.42 L1632.5,714.78 L1633.5,719.48 L1634.5,719.14 L1635.5,719.08 L1636.5,718.92 L1637.5,719.11 L1638.5,722.43 L1639.5,734.87 L1640.5,749.13 L1641.5,761.63 L1642.5,764.93 L1643.5,764.95 L1644.5,764.94 L1645.5,764.81 L1646.5,764.66 L1647.5,764.51 L1648.5,764.36 L1649.5,764.37 L1650.5,764.60 L1651.5,764.52 L1652.5,764.50 L1653.5,764.27 L1654.5,764.29 L1655.5,763.91 L1656.5,754.25 L1657.5,717.84 L1658.5,679.37 L1659.5,664.32 L1660.5,663.78 L1661.5,663.56 L1662.5,663.64 L1663.5,663.72 L1664.5,663.62 L1665.5,663.58 L1666.5,663.50 L1667.5,663.50 L1668.5,663.31 L1669.5,663.43 L1670.5,664.14 L1671.5,677.08 L1672.5,703.86 L1673.5,715.44 L1674.5,721.72 L1675.5,739.24 L1676.5,757.27 L1677.5,764.17 L1678.5,764.50 L1679.5,764.43 L1680.5,764.04 L1681.5,763.77 L1682.5,764.07 L1683.5,764.28 L1684.5,764.29 L1685.5,764.53 L1686.5,764.42 L1687.5,764.31 L1688.5,764.55 L1689.5,764.39 L1690.5,764.05 L1691.5,764.36 L1692.5,764.59 L1693.5,764.56 L1694.5,764.46 L1695.5,764.35 L1696.5,764.21 L1697.5,763.92 L1698.5,752.32 L1699.5,726.45 L1700.5,699.37 L1701.5,674.16 L1702.5,664.02 L1703.5,663.54 L1704.5,663.38 L1705.5,663.54 L1706.5,663.71 L1707.5,663.82 L1708.5,663.95 L1709.5,663.82 L1710.5,663.57 L1711.5,663.47 L1712.5,663.59 L1713.5,663.70 L1714.5,663.97 L1715.5,673.58 L1716.5,701.69 L1717.5,732.75 L1718.5,759.14 L1719.5,764.00 L1720.5,764.37 L1721.5,764.48 L1722.5,764.48 L1723.5,764.56 L1724.5,764.57 L1725.5,764.45 L1726.5,764.31 L1727.5,764.16 L1728.5,764.07 L1729.5,764.36 L1730.5,764.42 L1731.5,764.58 L1732.5,764.47 L1733.5,764.38 L1734.5,764.39 L1735.5,764.16 L1736.5,763.69 L1737.5,763.86 L1738.5,763.94 L1739.5,763.86 L1740.5,764.00 L1741.5,763.88 L1742.5,764.20 L1743.5,764.46 L1744.5,764.15 L1745.5,764.11 L1746.5,764.15 L1747.5,763.94 L1748.5,763.86 L1749.5,764.22 L1750.5,764.36 L1751.5,764.36 L1752.5,764.42 L1753.5,764.64 L1754.5,764.62 L1755.5,764.36 L1756.5,764.54 L1757.5,764.70 L1758.5,764.73 L1759.5,764.71 L1760.5,764.65 L1761.5,764.73 L1762.5,764.46 L1763.5,764.11 L1764.5,764.31 L1765.5,764.43 L1766.5,764.49 L1767.5,764.60 L1768.5,764.73 L1769.5,764.66 L1770.5,764.77 L1771.5,764.93 L1772.5,765.00 L1773.5,764.62 L1774.5,764.47 L1775.5,764.23 L1776.5,764.03 L1777.5,764.07 L1778.5,764.26 L1779.5,764.65 L1780.5,764.69 L1781.5,764.55 L1782.5,764.60 L1783.5,764.50 L1784.5,764.29 L1785.5,764.51 L1786.5,764.30 L1787.5,764.30 L1788.5,764.06 L1789.5,763.97 L1790.5,763.90 L1791.5,763.95 L1792.5,764.13 L1793.5,764.43 L1794.5,764.31 L1795.5,764.56 L1796.5,764.86 L1797.5,764.84 L1798.5,764.21 L1799.5,763.99 L1800.5,763.84 L1801.5,763.59 L1802.5,763.76 L1803.5,763.68 L1804.5,763.79 L1805.5,764.00 L1806.5,763.98 L1807.5,763.85 L1808.5,763.82 L1809.5,763.45 L1810.5,763.26 L1811.5,763.30 L1812.5,763.35 L1813.5,763.27 L1814.5,763.32 L1815.5,763.34 L1816.5,763.41 L1817.5,763.50 L1818.5,763.77 L1819.5,764.14 L1820.5,764.21 L1821.5,763.92 L1822.5,763.86 L1823.5,763.67 L1824.5,763.19 L1825.5,755.29 L1826.5,731.20 L1827.5,704.06 L1828.5,677.37 L1829.5,664.00 L1830.5,663.91 L1831.5,663.99 L1832.5,663.89 L1833.5,663.99 L1834.5,664.09 L1835.5,663.88 L1836.5,664.14 L1837.5,664.13 L1838.5,663.90 L1839.5,663.86 L1840.5,663.97 L1841.5,664.02 L1842.5,663.92 L1843.5,663.92 L1844.5,664.20 L1845.5,678.03 L1846.5,705.22 L1847.5,732.96 L1848.5,757.33 L1849.5,763.97 L1850.5,764.43 L1851.5,764.21 L1852.5,764.23 L1853.5,764.50 L1854.5,764.31 L1855.5,764.18 L1856.5,763.82 L1857.5,763.96 L1858.5,763.99 L1859.5,763.89 L1860.5,763.89 L1861.5,763.96 L1862.5,763.77 L1863.5,763.81 L1864.5,763.87 L1865.5,763.79 L1866.5,763.81 L1867.5,763.36 L1868.5,755.24 L1869.5,731.11 L1870.5,703.66 L1871.5,676.73 L1872.5,662.90 L1873.5,662.08 L1874.5,661.46 L1875.5,661.08 L1876.5,661.37 L1877.5,661.69 L1878.5,661.91" stroke="#3f5b5b"/><path d="M99.5,768.71 L100.5,768.44 L101.5,768.42 L102.5,768.62 L103.5,768.57 L104.5,768.71 L105.5,769.05 L106.5,768.86 L107.5,768.62 L108.5,768.19 L109.5,768.54 L110.5,769.02 L111.5,769.44 L112.5,769.74 L113.5,769.53 L114.5,769.08 L115.5,768.33 L116.5,762.25 L117.5,751.60 L118.5,742.11 L119.5,722.51 L120.5,688.56 L121.5,655.51 L122.5,630.51 L123.5,607.40 L124.5,591.27 L125.5,603.06 L126.5,619.26 L127.5,617.05 L128.5,599.58 L129.5,590.63 L130.5,606.07 L131.5,616.12 L132.5,603.80 L133.5,625.37 L134.5,655.88 L135.5,676.03 L136.5,689.04 L137.5,691.05 L138.5,691.39 L139.5,696.40 L140.5,709.73 L141.5,725.23 L142.5,744.76 L143.5,763.58 L144.5,768.56 L145.5,768.75 L146.5,769.01 L147.5,769.43 L148.5,769.41 L149.5,769.28 L150.5,768.91 L151.5,768.64 L152.5,768.69 L153.5,768.64 L154.5,768.61 L155.5,768.62 L156.5,768.39 L157.5,765.34 L158.5,747.18 L159.5,721.91 L160.5,696.87 L161.5,683.16 L162.5,677.41 L163.5,667.70 L164.5,656.32 L165.5,644.79 L166.5,636.33 L167.5,635.27 L168.5,635.94 L169.5,636.59 L170.5,638.62 L171.5,640.56 L172.5,637.70 L173.5,635.93 L174.5,654.36 L175.5,677.07 L176.5,684.13 L177.5,689.41 L178.5,704.91 L179.5,721.85 L180.5,736.23 L181.5,749.22 L182.5,761.70 L183.5,767.76 L184.5,767.77 L185.5,767.76 L186.5,767.62 L187.5,767.59 L188.5,767.51 L189.5,767.67 L190.5,767.93 L191.5,768.26 L192.5,768.01 L193.5,767.77 L194.5,767.87 L195.5,767.98 L196.5,768.20 L197.5,768.53 L198.5,768.68 L199.5,768.72 L200.5,768.52 L201.5,767.66 L202.5,757.23 L203.5,738.56 L204.5,719.32 L205.5,700.32 L206.5,690.54 L207.5,690.11 L208.5,689.72 L209.5,689.10 L210.5,692.26 L211.5,709.40 L212.5,728.30 L213.5,744.59 L214.5,759.28 L215.5,756.83 L216.5,748.06 L217.5,760.30 L218.5,768.08 L219.5,768.27 L220.5,768.75 L221.5,768.98 L222.5,768.95 L223.5,768.87 L224.5,769.07 L225.5,769.39 L226.5,769.37 L227.5,769.58 L228.5,769.61 L229.5,769.25 L230.5,768.69 L231.5,768.33 L232.5,768.66 L233.5,769.14 L234.5,769.11 L235.5,769.29 L236.5,769.15 L237.5,768.85 L238.5,768.62 L239.5,768.34 L240.5,768.28 L241.5,768.41 L242.5,768.42 L243.5,768.29 L244.5,768.07 L245.5,767.75 L246.5,767.90 L247.5,768.04 L248.5,767.89 L249.5,768.00 L250.5,767.64 L251.5,767.47 L252.5,767.62 L253.5,767.57 L254.5,768.13 L255.5,768.32 L256.5,768.38 L257.5,768.64 L258.5,768.76 L259.5,768.91 L260.5,769.03 L261.5,769.12 L262.5,768.63 L263.5,768.20 L264.5,768.09 L265.5,768.55 L266.5,768.71 L267.5,768.53 L268.5,768.32 L269.5,768.44 L270.5,768.33 L271.5,768.21 L272.5,767.92 L273.5,768.04 L274.5,768.35 L275.5,768.48 L276.5,768.51 L277.5,768.45 L278.5,768.33 L279.5,768.41 L280.5,768.67 L281.5,768.37 L282.5,768.29 L283.5,768.67 L284.5,768.52 L285.5,768.35 L286.5,768.68 L287.5,768.52 L288.5,768.65 L289.5,769.11 L290.5,769.17 L291.5,769.17 L292.5,769.20 L293.5,769.24 L294.5,769.37 L295.5,769.41 L296.5,769.34 L297.5,769.31 L298.5,769.46 L299.5,769.15 L300.5,768.73 L301.5,768.44 L302.5,768.35 L303.5,768.05 L304.5,768.25 L305.5,768.21 L306.5,768.00 L307.5,768.40 L308.5,768.65 L309.5,768.75 L310.5,768.64 L311.5,768.83 L312.5,769.07 L313.5,769.01 L314.5,768.49 L315.5,768.58 L316.5,768.44 L317.5,768.70 L318.5,769.34 L319.5,769.48 L320.5,769.31 L321.5,769.56 L322.5,769.24 L323.5,768.62 L324.5,768.90 L325.5,768.67 L326.5,768.63 L327.5,768.70 L328.5,768.78 L329.5,766.14 L330.5,743.64 L331.5,709.09 L332.5,684.20 L333.5,679.88 L334.5,677.73 L335.5,669.92 L336.5,660.00 L337.5,653.78 L338.5,652.77 L339.5,652.87 L340.5,653.82 L341.5,655.25 L342.5,655.44 L343.5,653.85 L344.5,651.85 L345.5,647.96 L346.5,644.99 L347.5,648.08 L348.5,654.25 L349.5,664.64 L350.5,674.55 L351.5,678.56 L352.5,679.93 L353.5,689.01 L354.5,710.84 L355.5,734.48 L356.5,757.43 L357.5,767.92 L358.5,768.86 L359.5,769.26 L360.5,769.40 L361.5,769.00 L362.5,768.59 L363.5,768.15 L364.5,768.04 L365.5,768.28 L366.5,768.41 L367.5,768.56 L368.5,768.87 L369.5,768.92 L370.5,768.84 L371.5,768.72 L372.5,767.15 L373.5,753.49 L374.5,732.25 L375.5,710.91 L376.5,693.37 L377.5,690.36 L378.5,690.15 L379.5,689.90 L380.5,689.83 L381.5,689.84 L382.5,690.09 L383.5,696.09 L384.5,719.00 L385.5,744.78 L386.5,762.53 L387.5,763.47 L388.5,761.87 L389.5,760.46 L390.5,762.40 L391.5,766.94 L392.5,768.57 L393.5,768.93 L394.5,768.79 L395.5,768.29 L396.5,767.98 L397.5,768.38 L398.5,768.15 L399.5,768.29 L400.5,768.43 L401.5,768.34 L402.5,768.28 L403.5,768.53 L404.5,768.06 L405.5,768.30 L406.5,768.89 L407.5,768.96 L408.5,769.18 L409.5,769.48 L410.5,769.21 L411.5,769.07 L412.5,769.20 L413.5,769.00 L414.5,769.00 L415.5,766.27 L416.5,743.23 L417.5,708.43 L418.5,683.19 L419.5,679.26 L420.5,679.04 L421.5,678.88 L422.5,678.80 L423.5,679.18 L424.5,679.45 L425.5,679.68 L426.5,679.52 L427.5,679.47 L428.5,679.09 L429.5,677.81 L430.5,676.96 L431.5,680.07 L432.5,688.48 L433.5,712.83 L434.5,740.92 L435.5,764.07 L436.5,768.01 L437.5,768.03 L438.5,768.37 L439.5,768.23 L440.5,768.23 L441.5,768.60 L442.5,768.83 L443.5,769.03 L444.5,768.78 L445.5,768.47 L446.5,768.54 L447.5,768.36 L448.5,768.75 L449.5,768.78 L450.5,768.39 L451.5,768.22 L452.5,768.44 L453.5,768.69 L454.5,768.78 L455.5,768.72 L456.5,768.86 L457.5,768.45 L458.5,758.80 L459.5,728.72 L460.5,697.84 L461.5,685.30 L462.5,684.37 L463.5,683.88 L464.5,683.25 L465.5,682.79 L466.5,682.13 L467.5,678.77 L468.5,668.15 L469.5,658.33 L470.5,649.36 L471.5,646.44 L472.5,650.42 L473.5,658.40 L474.5,684.18 L475.5,715.54 L476.5,746.55 L477.5,766.80 L478.5,768.98 L479.5,769.29 L480.5,769.12 L481.5,769.13 L482.5,769.58 L483.5,769.67 L484.5,769.37 L485.5,769.55 L486.5,769.65 L487.5,769.40 L488.5,769.04 L489.5,768.92 L490.5,768.49 L491.5,768.40 L492.5,768.32 L493.5,768.71 L494.5,768.42 L495.5,768.47 L496.5,768.53 L497.5,768.34 L498.5,768.83 L499.5,768.92 L500.5,768.57 L501.5,766.25 L502.5,745.43 L503.5,712.62 L504.5,687.88 L505.5,681.54 L506.5,677.46 L507.5,666.04 L508.5,651.13 L509.5,649.21 L510.5,667.56 L511.5,689.94 L512.5,718.55 L513.5,749.01 L514.5,766.78 L515.5,768.24 L516.5,768.39 L517.5,768.56 L518.5,768.70 L519.5,768.76 L520.5,769.17 L521.5,769.22 L522.5,769.02 L523.5,769.10 L524.5,769.03 L525.5,768.48 L526.5,768.68 L527.5,768.79 L528.5,768.86 L529.5,768.98 L530.5,768.64 L531.5,768.72 L532.5,768.88 L533.5,769.00 L534.5,769.08 L535.5,769.12 L536.5,769.11 L537.5,768.77 L538.5,768.52 L539.5,768.54 L540.5,769.04 L541.5,769.12 L542.5,769.06 L543.5,768.87 L544.5,769.02 L545.5,769.46 L546.5,769.68 L547.5,769.45 L548.5,769.15 L549.5,768.72 L550.5,768.58 L551.5,768.89 L552.5,769.12 L553.5,768.58 L554.5,768.24 L555.5,768.59 L556.5,768.88 L557.5,769.04 L558.5,769.01 L559.5,768.56 L560.5,768.58 L561.5,768.30 L562.5,768.38 L563.5,768.64 L564.5,768.32 L565.5,768.11 L566.5,768.11 L567.5,768.09 L568.5,768.69 L569.5,768.84 L570.5,768.69 L571.5,768.59 L572.5,768.77 L573.5,768.68 L574.5,768.49 L575.5,768.50 L576.5,768.30 L577.5,767.86 L578.5,768.10 L579.5,768.20 L580.5,768.28 L581.5,768.28 L582.5,768.59 L583.5,769.18 L584.5,768.94 L585.5,768.49 L586.5,768.45 L587.5,768.39 L588.5,768.40 L589.5,768.87 L590.5,769.15 L591.5,769.21 L592.5,769.28 L593.5,769.25 L594.5,769.21 L595.5,769.27 L596.5,768.99 L597.5,768.80 L598.5,768.70 L599.5,768.36 L600.5,768.13 L601.5,767.73 L602.5,767.78 L603.5,767.94 L604.5,767.90 L605.5,768.04 L606.5,768.22 L607.5,768.39 L608.5,768.05 L609.5,768.01 L610.5,768.32 L611.5,768.88 L612.5,768.99 L613.5,769.18 L614.5,769.09 L615.5,769.26 L616.5,769.46 L617.5,769.19 L618.5,768.54 L619.5,768.31 L620.5,768.35 L621.5,768.24 L622.5,768.30 L623.5,768.52 L624.5,768.49 L625.5,768.93 L626.5,769.24 L627.5,769.07 L628.5,768.81 L629.5,767.60 L630.5,735.66 L631.5,690.50 L632.5,683.19 L633.5,682.85 L634.5,683.03 L635.5,682.64 L636.5,682.60 L637.5,682.74 L638.5,682.59 L639.5,682.41 L640.5,682.54 L641.5,682.74 L642.5,682.87 L643.5,682.49 L644.5,682.13 L645.5,682.11 L646.5,682.28 L647.5,690.25 L648.5,709.34 L649.5,730.19 L650.5,750.56 L651.5,766.16 L652.5,768.50 L653.5,768.62 L654.5,768.53 L655.5,768.51 L656.5,768.65 L657.5,768.51 L658.5,768.63 L659.5,768.90 L660.5,769.04 L661.5,769.12 L662.5,769.12 L663.5,769.22 L664.5,769.17 L665.5,768.72 L666.5,768.82 L667.5,768.63 L668.5,768.51 L669.5,768.66 L670.5,768.60 L671.5,763.45 L672.5,723.16 L673.5,691.09 L674.5,689.54 L675.5,689.59 L676.5,689.74 L677.5,689.76 L678.5,689.30 L679.5,689.22 L680.5,689.39 L681.5,689.40 L682.5,688.46 L683.5,680.24 L684.5,668.16 L685.5,658.06 L686.5,650.99 L687.5,645.11 L688.5,641.91 L689.5,639.66 L690.5,641.13 L691.5,663.61 L692.5,712.00 L693.5,736.46 L694.5,746.33 L695.5,748.85 L696.5,748.91 L697.5,749.08 L698.5,748.60 L699.5,748.57 L700.5,748.77 L701.5,748.67 L702.5,748.66 L703.5,748.24 L704.5,748.33 L705.5,748.53 L706.5,748.57 L707.5,748.74 L708.5,748.93 L709.5,749.16 L710.5,748.56 L711.5,748.51 L712.5,748.66 L713.5,745.48 L714.5,726.73 L715.5,702.65 L716.5,679.14 L717.5,664.41 L718.5,663.75 L719.5,664.36 L720.5,665.07 L721.5,666.10 L722.5,666.56 L723.5,666.74 L724.5,667.11 L725.5,667.36 L726.5,667.64 L727.5,667.61 L728.5,667.12 L729.5,666.70 L730.5,666.96 L731.5,667.11 L732.5,667.31 L733.5,667.71 L734.5,667.60 L735.5,667.08 L736.5,667.18 L737.5,667.03 L738.5,666.70 L739.5,666.38 L740.5,666.76 L741.5,666.97 L742.5,666.78 L743.5,666.69 L744.5,667.02 L745.5,667.40 L746.5,667.51 L747.5,667.59 L748.5,667.42 L749.5,667.27 L750.5,666.97 L751.5,666.96 L752.5,667.11 L753.5,666.91 L754.5,666.68 L755.5,666.82 L756.5,667.11 L757.5,667.43 L758.5,667.02 L759.5,666.25 L760.5,662.74 L761.5,656.18 L762.5,649.49 L763.5,647.00 L764.5,657.40 L765.5,665.96 L766.5,667.32 L767.5,667.50 L768.5,667.62 L769.5,667.75 L770.5,667.75 L771.5,667.77 L772.5,667.95 L773.5,667.95 L774.5,667.58 L775.5,667.35 L776.5,667.58 L777.5,667.82 L778.5,667.99 L779.5,667.78 L780.5,667.74 L781.5,668.00 L782.5,667.68 L783.5,667.48 L784.5,667.49 L785.5,667.26 L786.5,666.95 L787.5,666.61 L788.5,666.37 L789.5,666.52 L790.5,666.75 L791.5,666.48 L792.5,666.48 L793.5,667.01 L794.5,667.22 L795.5,667.09 L796.5,667.40 L797.5,667.49 L798.5,667.75 L799.5,667.75 L800.5,667.58 L801.5,667.09 L802.5,666.61 L803.5,666.00 L804.5,665.92 L805.5,665.71 L806.5,665.37 L807.5,664.86 L808.5,664.81 L809.5,664.83 L810.5,664.89 L811.5,664.81 L812.5,664.86 L813.5,665.06 L814.5,665.13 L815.5,665.54 L816.5,665.85 L817.5,665.77 L818.5,665.48 L819.5,665.36 L820.5,665.03 L821.5,665.31 L822.5,665.15 L823.5,665.07 L824.5,665.11 L825.5,665.23 L826.5,664.86 L827.5,664.71 L828.5,664.76 L829.5,664.59 L830.5,664.85 L831.5,665.17 L832.5,665.71 L833.5,665.87 L834.5,665.40 L835.5,665.50 L836.5,665.55 L837.5,665.32 L838.5,665.36 L839.5,665.85 L840.5,666.29 L841.5,665.99 L842.5,666.35 L843.5,666.61 L844.5,666.65 L845.5,666.46 L846.5,668.26 L847.5,681.26 L848.5,699.20 L849.5,717.66 L850.5,735.87 L851.5,746.93 L852.5,747.78 L853.5,744.60 L854.5,738.49 L855.5,732.43 L856.5,734.92 L857.5,745.07 L858.5,748.51 L859.5,748.90 L860.5,748.77 L861.5,748.85 L862.5,748.72 L863.5,748.29 L864.5,748.01 L865.5,747.85 L866.5,748.07 L867.5,747.94 L868.5,747.81 L869.5,747.27 L870.5,747.00 L871.5,746.99 L872.5,747.70 L873.5,748.35 L874.5,748.54 L875.5,748.36 L876.5,748.56 L877.5,748.46 L878.5,748.35 L879.5,747.81 L880.5,747.57 L881.5,747.21 L882.5,746.94 L883.5,747.04 L884.5,747.14 L885.5,747.29 L886.5,747.64 L887.5,747.92 L888.5,747.82 L889.5,747.66 L890.5,747.76 L891.5,747.74 L892.5,748.04 L893.5,748.07 L894.5,747.95 L895.5,747.82 L896.5,748.27 L897.5,748.55 L898.5,748.70 L899.5,748.65 L900.5,748.41 L901.5,748.07 L902.5,747.89 L903.5,747.86 L904.5,747.58 L905.5,747.56 L906.5,747.69 L907.5,747.92 L908.5,747.64 L909.5,747.88 L910.5,747.80 L911.5,747.84 L912.5,747.85 L913.5,747.79 L914.5,747.32 L915.5,747.29 L916.5,747.52 L917.5,747.38 L918.5,747.40 L919.5,747.64 L920.5,747.78 L921.5,747.83 L922.5,748.01 L923.5,747.87 L924.5,747.61 L925.5,747.65 L926.5,747.16 L927.5,741.25 L928.5,723.40 L929.5,703.81 L930.5,684.22 L931.5,669.04 L932.5,666.12 L933.5,665.88 L934.5,665.91 L935.5,666.09 L936.5,666.23 L937.5,666.32 L938.5,666.36 L939.5,666.73 L940.5,667.00 L941.5,666.90 L942.5,666.93 L943.5,666.56 L944.5,666.31 L945.5,666.18 L946.5,666.81 L947.5,672.40 L948.5,691.19 L949.5,713.01 L950.5,734.66 L951.5,746.67 L952.5,747.62 L953.5,747.60 L954.5,747.37 L955.5,747.41 L956.5,747.64 L957.5,748.09 L958.5,748.13 L959.5,748.04 L960.5,748.12 L961.5,748.20 L962.5,748.37 L963.5,748.22 L964.5,748.09 L965.5,747.86 L966.5,747.54 L967.5,747.77 L968.5,748.05 L969.5,747.54 L970.5,737.29 L971.5,717.43 L972.5,697.05 L973.5,677.38 L974.5,667.43 L975.5,667.04 L976.5,666.95 L977.5,666.94 L978.5,667.03 L979.5,667.36 L980.5,667.95 L981.5,667.40 L982.5,660.99 L983.5,651.74 L984.5,646.77 L985.5,644.89 L986.5,647.11 L987.5,664.74 L988.5,712.95 L989.5,748.67 L990.5,755.12 L991.5,757.61 L992.5,759.71 L993.5,761.75 L994.5,764.07 L995.5,766.54 L996.5,768.73 L997.5,769.22 L998.5,768.74 L999.5,768.24 L1000.5,768.22 L1001.5,768.13 L1002.5,768.38 L1003.5,768.74 L1004.5,768.87 L1005.5,768.97 L1006.5,769.39 L1007.5,769.46 L1008.5,769.73 L1009.5,769.47 L1010.5,769.30 L1011.5,768.95 L1012.5,766.15 L1013.5,751.02 L1014.5,732.22 L1015.5,713.94 L1016.5,695.91 L1017.5,681.87 L1018.5,679.48 L1019.5,679.67 L1020.5,679.93 L1021.5,680.10 L1022.5,679.91 L1023.5,680.00 L1024.5,680.26 L1025.5,680.06 L1026.5,679.75 L1027.5,679.64 L1028.5,679.40 L1029.5,679.29 L1030.5,678.94 L1031.5,678.89 L1032.5,679.40 L1033.5,679.12 L1034.5,679.20 L1035.5,679.66 L1036.5,679.88 L1037.5,679.37 L1038.5,679.42 L1039.5,679.84 L1040.5,680.05 L1041.5,679.81 L1042.5,679.51 L1043.5,678.93 L1044.5,678.80 L1045.5,678.82 L1046.5,679.01 L1047.5,679.28 L1048.5,679.42 L1049.5,679.54 L1050.5,679.72 L1051.5,679.77 L1052.5,679.72 L1053.5,679.92 L1054.5,680.16 L1055.5,680.13 L1056.5,679.94 L1057.5,680.02 L1058.5,679.83 L1059.5,679.70 L1060.5,679.40 L1061.5,679.46 L1062.5,679.48 L1063.5,679.47 L1064.5,679.42 L1065.5,679.61 L1066.5,680.03 L1067.5,679.87 L1068.5,679.52 L1069.5,679.54 L1070.5,679.54 L1071.5,679.15 L1072.5,679.23 L1073.5,678.94 L1074.5,679.10 L1075.5,679.34 L1076.5,679.22 L1077.5,679.02 L1078.5,679.01 L1079.5,678.94 L1080.5,679.17 L1081.5,678.99 L1082.5,678.62 L1083.5,678.62 L1084.5,678.30 L1085.5,678.18 L1086.5,678.22 L1087.5,678.02 L1088.5,677.94 L1089.5,677.28 L1090.5,677.14 L1091.5,676.98 L1092.5,676.16 L1093.5,675.74 L1094.5,675.75 L1095.5,676.03 L1096.5,676.39 L1097.5,677.07 L1098.5,677.23 L1099.5,677.25 L1100.5,677.56 L1101.5,678.03 L1102.5,678.55 L1103.5,679.13 L1104.5,679.79 L1105.5,680.24 L1106.5,685.56 L1107.5,701.11 L1108.5,718.64 L1109.5,736.02 L1110.5,753.51 L1111.5,766.18 L1112.5,767.96 L1113.5,768.27 L1114.5,768.14 L1115.5,768.02 L1116.5,767.80 L1117.5,767.36 L1118.5,767.54 L1119.5,767.79 L1120.5,768.08 L1121.5,768.15 L1122.5,768.07 L1123.5,768.19 L1124.5,768.05 L1125.5,767.74 L1126.5,767.90 L1127.5,768.22 L1128.5,768.26 L1129.5,768.22 L1130.5,767.76 L1131.5,767.45 L1132.5,767.35 L1133.5,767.38 L1134.5,767.37 L1135.5,767.92 L1136.5,768.35 L1137.5,768.64 L1138.5,768.92 L1139.5,769.00 L1140.5,769.05 L1141.5,768.72 L1142.5,768.38 L1143.5,767.98 L1144.5,767.84 L1145.5,767.67 L1146.5,767.47 L1147.5,767.89 L1148.5,767.87 L1149.5,768.00 L1150.5,768.15 L1151.5,767.82 L1152.5,767.84 L1153.5,768.08 L1154.5,768.06 L1155.5,767.95 L1156.5,768.09 L1157.5,768.33 L1158.5,768.28 L1159.5,768.18 L1160.5,768.41 L1161.5,768.83 L1162.5,768.43 L1163.5,767.92 L1164.5,767.88 L1165.5,768.29 L1166.5,768.50 L1167.5,768.61 L1168.5,768.61 L1169.5,768.66 L1170.5,768.80 L1171.5,768.39 L1172.5,768.51 L1173.5,768.69 L1174.5,768.15 L1175.5,767.48 L1176.5,767.10 L1177.5,767.41 L1178.5,767.68 L1179.5,767.66 L1180.5,767.63 L1181.5,767.88 L1182.5,768.14 L1183.5,768.22 L1184.5,768.34 L1185.5,768.48 L1186.5,768.28 L1187.5,768.07 L1188.5,768.34 L1189.5,768.42 L1190.5,767.96 L1191.5,768.22 L1192.5,768.65 L1193.5,768.69 L1194.5,768.65 L1195.5,768.62 L1196.5,768.66 L1197.5,768.75 L1198.5,769.08 L1199.5,768.89 L1200.5,768.95 L1201.5,768.96 L1202.5,768.95 L1203.5,768.94 L1204.5,769.19 L1205.5,768.99 L1206.5,768.57 L1207.5,768.68 L1208.5,768.82 L1209.5,768.90 L1210.5,768.67 L1211.5,768.40 L1212.5,768.25 L1213.5,768.34 L1214.5,768.24 L1215.5,768.34 L1216.5,768.45 L1217.5,768.31 L1218.5,768.52 L1219.5,768.82 L1220.5,768.90 L1221.5,769.02 L1222.5,768.43 L1223.5,768.15 L1224.5,768.23 L1225.5,768.13 L1226.5,766.28 L1227.5,750.88 L1228.5,729.23 L1229.5,708.14 L1230.5,691.86 L1231.5,688.91 L1232.5,688.98 L1233.5,688.99 L1234.5,688.84 L1235.5,688.23 L1236.5,687.45 L1237.5,686.80 L1238.5,686.85 L1239.5,686.73 L1240.5,685.88 L1241.5,685.43 L1242.5,684.10 L1243.5,682.18 L1244.5,680.45 L1245.5,686.23 L1246.5,704.00 L1247.5,722.96 L1248.5,742.22 L1249.5,756.22 L1250.5,758.55 L1251.5,758.60 L1252.5,758.78 L1253.5,758.36 L1254.5,758.18 L1255.5,758.54 L1256.5,758.79 L1257.5,758.62 L1258.5,758.32 L1259.5,758.11 L1260.5,757.75 L1261.5,757.51 L1262.5,757.45 L1263.5,757.25 L1264.5,756.89 L1265.5,756.48 L1266.5,756.56 L1267.5,756.54 L1268.5,753.17 L1269.5,734.38 L1270.5,711.86 L1271.5,689.56 L1272.5,667.04 L1273.5,644.35 L1274.5,621.57 L1275.5,592.18 L1276.5,531.79 L1277.5,477.86 L1278.5,459.77 L1279.5,457.16 L1280.5,456.10 L1281.5,455.75 L1282.5,448.69 L1283.5,441.09 L1284.5,480.28 L1285.5,521.67 L1286.5,556.65 L1287.5,582.29 L1288.5,610.43 L1289.5,644.89 L1290.5,680.62 L1291.5,713.22 L1292.5,725.45 L1293.5,725.54 L1294.5,725.39 L1295.5,725.37 L1296.5,725.66 L1297.5,726.01 L1298.5,726.26 L1299.5,726.43 L1300.5,726.15 L1301.5,725.72 L1302.5,725.98 L1303.5,726.22 L1304.5,725.96 L1305.5,726.25 L1306.5,726.02 L1307.5,725.84 L1308.5,726.15 L1309.5,726.17 L1310.5,725.79 L1311.5,724.25 L1312.5,708.64 L1313.5,682.22 L1314.5,659.11 L1315.5,645.59 L1316.5,633.95 L1317.5,626.41 L1318.5,628.34 L1319.5,631.95 L1320.5,634.51 L1321.5,635.16 L1322.5,635.34 L1323.5,635.10 L1324.5,631.01 L1325.5,625.62 L1326.5,620.38 L1327.5,615.12 L1328.5,611.92 L1329.5,615.88 L1330.5,621.61 L1331.5,628.19 L1332.5,639.63 L1333.5,652.46 L1334.5,664.50 L1335.5,673.53 L1336.5,676.32 L1337.5,686.58 L1338.5,706.10 L1339.5,725.64 L1340.5,743.17 L1341.5,748.69 L1342.5,748.95 L1343.5,748.90 L1344.5,749.20 L1345.5,749.70 L1346.5,749.79 L1347.5,749.56 L1348.5,749.41 L1349.5,749.22 L1350.5,749.43 L1351.5,749.59 L1352.5,749.25 L1353.5,749.78 L1354.5,748.65 L1355.5,734.38 L1356.5,709.34 L1357.5,683.76 L1358.5,661.42 L1359.5,655.33 L1360.5,654.87 L1361.5,654.52 L1362.5,650.96 L1363.5,640.28 L1364.5,628.30 L1365.5,623.56 L1366.5,634.39 L1367.5,645.37 L1368.5,653.59 L1369.5,657.02 L1370.5,657.24 L1371.5,657.19 L1372.5,657.09 L1373.5,657.33 L1374.5,657.61 L1375.5,660.03 L1376.5,679.09 L1377.5,708.39 L1378.5,737.98 L1379.5,763.01 L1380.5,767.30 L1381.5,767.30 L1382.5,767.37 L1383.5,767.42 L1384.5,767.24 L1385.5,767.41 L1386.5,767.69 L1387.5,767.66 L1388.5,767.65 L1389.5,768.07 L1390.5,768.24 L1391.5,768.41 L1392.5,768.54 L1393.5,768.42 L1394.5,768.53 L1395.5,768.35 L1396.5,768.24 L1397.5,767.19 L1398.5,755.61 L1399.5,736.07 L1400.5,716.03 L1401.5,695.96 L1402.5,680.59 L1403.5,677.91 L1404.5,677.87 L1405.5,678.02 L1406.5,678.27 L1407.5,678.06 L1408.5,678.04 L1409.5,678.15 L1410.5,678.37 L1411.5,678.26 L1412.5,677.89 L1413.5,677.80 L1414.5,678.13 L1415.5,678.24 L1416.5,678.00 L1417.5,678.27 L1418.5,678.55 L1419.5,678.82 L1420.5,678.90 L1421.5,678.65 L1422.5,681.80 L1423.5,699.66 L1424.5,720.22 L1425.5,740.67 L1426.5,760.26 L1427.5,769.05 L1428.5,769.21 L1429.5,769.06 L1430.5,769.00 L1431.5,769.21 L1432.5,769.29 L1433.5,769.04 L1434.5,768.80 L1435.5,769.11 L1436.5,769.24 L1437.5,769.16 L1438.5,769.18 L1439.5,768.76 L1440.5,768.92 L1441.5,769.08 L1442.5,768.94 L1443.5,768.94 L1444.5,769.27 L1445.5,769.43 L1446.5,769.53 L1447.5,769.32 L1448.5,769.58 L1449.5,769.78 L1450.5,769.28 L1451.5,769.40 L1452.5,769.90 L1453.5,769.96 L1454.5,769.81 L1455.5,769.63 L1456.5,769.68 L1457.5,769.70 L1458.5,769.88 L1459.5,770.14 L1460.5,770.31 L1461.5,770.23 L1462.5,770.02 L1463.5,769.78 L1464.5,769.44 L1465.5,769.05 L1466.5,768.87 L1467.5,769.00 L1468.5,769.15 L1469.5,769.16 L1470.5,768.90 L1471.5,769.00 L1472.5,769.59 L1473.5,769.62 L1474.5,769.58 L1475.5,769.40 L1476.5,768.94 L1477.5,768.74 L1478.5,768.87 L1479.5,768.61 L1480.5,768.13 L1481.5,768.43 L1482.5,768.59 L1483.5,768.68 L1484.5,768.70 L1485.5,768.57 L1486.5,768.73 L1487.5,769.27 L1488.5,769.42 L1489.5,769.42 L1490.5,769.09 L1491.5,768.93 L1492.5,769.12 L1493.5,768.98 L1494.5,769.04 L1495.5,767.87 L1496.5,759.06 L1497.5,752.32 L1498.5,761.12 L1499.5,768.95 L1500.5,769.62 L1501.5,769.34 L1502.5,769.46 L1503.5,769.25 L1504.5,769.02 L1505.5,769.45 L1506.5,769.62 L1507.5,770.07 L1508.5,770.02 L1509.5,769.69 L1510.5,769.57 L1511.5,769.44 L1512.5,769.12 L1513.5,769.25 L1514.5,769.14 L1515.5,769.15 L1516.5,769.16 L1517.5,769.08 L1518.5,768.97 L1519.5,769.15 L1520.5,769.58 L1521.5,769.35 L1522.5,768.76 L1523.5,768.58 L1524.5,768.62 L1525.5,768.95 L1526.5,769.14 L1527.5,769.47 L1528.5,769.45 L1529.5,769.48 L1530.5,769.43 L1531.5,769.25 L1532.5,769.16 L1533.5,768.99 L1534.5,769.24 L1535.5,769.28 L1536.5,769.41 L1537.5,769.47 L1538.5,769.00 L1539.5,768.61 L1540.5,768.70 L1541.5,768.97 L1542.5,769.56 L1543.5,769.57 L1544.5,769.71 L1545.5,769.58 L1546.5,769.14 L1547.5,769.51 L1548.5,769.82 L1549.5,769.98 L1550.5,769.93 L1551.5,769.89 L1552.5,769.85 L1553.5,769.62 L1554.5,769.57 L1555.5,769.63 L1556.5,769.75 L1557.5,769.55 L1558.5,769.25 L1559.5,768.95 L1560.5,769.02 L1561.5,768.87 L1562.5,768.62 L1563.5,768.98 L1564.5,768.86 L1565.5,768.40 L1566.5,768.39 L1567.5,768.33 L1568.5,767.94 L1569.5,757.91 L1570.5,736.45 L1571.5,713.74 L1572.5,692.04 L1573.5,677.91 L1574.5,668.76 L1575.5,659.39 L1576.5,648.43 L1577.5,639.83 L1578.5,647.68 L1579.5,661.16 L1580.5,665.36 L1581.5,666.96 L1582.5,668.64 L1583.5,669.35 L1584.5,666.43 L1585.5,665.36 L1586.5,667.13 L1587.5,670.59 L1588.5,680.86 L1589.5,695.26 L1590.5,718.60 L1591.5,743.80 L1592.5,764.56 L1593.5,768.38 L1594.5,768.68 L1595.5,768.68 L1596.5,768.63 L1597.5,768.53 L1598.5,768.43 L1599.5,768.80 L1600.5,769.21 L1601.5,769.12 L1602.5,768.73 L1603.5,768.79 L1604.5,769.33 L1605.5,769.06 L1606.5,768.68 L1607.5,768.64 L1608.5,768.93 L1609.5,769.39 L1610.5,769.71 L1611.5,764.06 L1612.5,741.86 L1613.5,716.37 L1614.5,693.50 L1615.5,682.44 L1616.5,675.78 L1617.5,666.23 L1618.5,655.65 L1619.5,656.93 L1620.5,666.37 L1621.5,677.66 L1622.5,689.62 L1623.5,705.54 L1624.5,726.98 L1625.5,748.52 L1626.5,765.55 L1627.5,760.61 L1628.5,737.43 L1629.5,697.98 L1630.5,661.73 L1631.5,647.01 L1632.5,640.39 L1633.5,637.74 L1634.5,639.12 L1635.5,640.21 L1636.5,642.66 L1637.5,653.45 L1638.5,668.36 L1639.5,691.49 L1640.5,727.61 L1641.5,760.29 L1642.5,768.78 L1643.5,769.05 L1644.5,769.07 L1645.5,769.00 L1646.5,769.08 L1647.5,769.23 L1648.5,769.32 L1649.5,768.85 L1650.5,768.84 L1651.5,769.06 L1652.5,768.99 L1653.5,768.85 L1654.5,765.15 L1655.5,742.56 L1656.5,714.04 L1657.5,688.02 L1658.5,676.48 L1659.5,669.98 L1660.5,663.76 L1661.5,661.35 L1662.5,660.22 L1663.5,660.56 L1664.5,662.50 L1665.5,664.61 L1666.5,668.97 L1667.5,676.04 L1668.5,684.00 L1669.5,698.56 L1670.5,715.80 L1671.5,732.80 L1672.5,749.92 L1673.5,764.67 L1674.5,768.30 L1675.5,768.02 L1676.5,767.89 L1677.5,768.13 L1678.5,768.41 L1679.5,768.55 L1680.5,768.42 L1681.5,768.08 L1682.5,768.06 L1683.5,768.37 L1684.5,768.76 L1685.5,768.48 L1686.5,768.72 L1687.5,769.12 L1688.5,768.90 L1689.5,769.07 L1690.5,768.96 L1691.5,768.84 L1692.5,769.06 L1693.5,769.23 L1694.5,769.20 L1695.5,769.13 L1696.5,769.02 L1697.5,769.06 L1698.5,759.14 L1699.5,737.38 L1700.5,714.48 L1701.5,693.56 L1702.5,685.08 L1703.5,684.23 L1704.5,683.63 L1705.5,683.62 L1706.5,683.70 L1707.5,683.98 L1708.5,684.19 L1709.5,683.79 L1710.5,683.08 L1711.5,682.51 L1712.5,682.38 L1713.5,682.69 L1714.5,692.97 L1715.5,715.11 L1716.5,738.11 L1717.5,759.34 L1718.5,768.04 L1719.5,769.04 L1720.5,769.02 L1721.5,768.99 L1722.5,768.95 L1723.5,768.86 L1724.5,768.60 L1725.5,768.68 L1726.5,768.91 L1727.5,769.03 L1728.5,768.96 L1729.5,768.71 L1730.5,768.78 L1731.5,768.99 L1732.5,769.07 L1733.5,769.43 L1734.5,769.46 L1735.5,769.37 L1736.5,768.86 L1737.5,768.90 L1738.5,768.53 L1739.5,768.41 L1740.5,768.10 L1741.5,768.63 L1742.5,768.97 L1743.5,768.52 L1744.5,768.75 L1745.5,769.00 L1746.5,768.70 L1747.5,768.55 L1748.5,768.67 L1749.5,768.73 L1750.5,768.55 L1751.5,768.70 L1752.5,769.18 L1753.5,769.43 L1754.5,769.76 L1755.5,769.29 L1756.5,769.17 L1757.5,769.36 L1758.5,769.49 L1759.5,769.15 L1760.5,769.32 L1761.5,769.66 L1762.5,769.46 L1763.5,769.12 L1764.5,769.38 L1765.5,769.16 L1766.5,768.98 L1767.5,769.05 L1768.5,768.87 L1769.5,768.61 L1770.5,768.16 L1771.5,767.83 L1772.5,767.92 L1773.5,768.13 L1774.5,768.55 L1775.5,768.45 L1776.5,768.41 L1777.5,768.13 L1778.5,768.51 L1779.5,768.90 L1780.5,768.65 L1781.5,768.45 L1782.5,768.78 L1783.5,768.87 L1784.5,769.36 L1785.5,769.57 L1786.5,769.39 L1787.5,769.41 L1788.5,769.46 L1789.5,769.36 L1790.5,769.50 L1791.5,769.76 L1792.5,769.97 L1793.5,770.08 L1794.5,769.80 L1795.5,769.55 L1796.5,769.67 L1797.5,769.55 L1798.5,769.26 L1799.5,769.04 L1800.5,768.63 L1801.5,768.11 L1802.5,767.96 L1803.5,768.10 L1804.5,768.11 L1805.5,767.99 L1806.5,768.17 L1807.5,768.07 L1808.5,768.26 L1809.5,768.46 L1810.5,768.50 L1811.5,768.72 L1812.5,768.61 L1813.5,768.53 L1814.5,768.75 L1815.5,768.74 L1816.5,768.39 L1817.5,768.71 L1818.5,768.65 L1819.5,768.61 L1820.5,768.82 L1821.5,769.07 L1822.5,768.91 L1823.5,768.78 L1824.5,768.76 L1825.5,762.27 L1826.5,742.20 L1827.5,719.59 L1828.5,696.97 L1829.5,684.10 L1830.5,681.71 L1831.5,675.74 L1832.5,657.24 L1833.5,636.25 L1834.5,621.66 L1835.5,635.71 L1836.5,658.70 L1837.5,674.31 L1838.5,679.16 L1839.5,682.51 L1840.5,683.27 L1841.5,683.15 L1842.5,683.82 L1843.5,694.85 L1844.5,716.32 L1845.5,738.08 L1846.5,758.85 L1847.5,768.27 L1848.5,768.46 L1849.5,767.85 L1850.5,767.51 L1851.5,767.63 L1852.5,767.91 L1853.5,767.84 L1854.5,768.44 L1855.5,768.39 L1856.5,767.98 L1857.5,767.94 L1858.5,767.94 L1859.5,768.19 L1860.5,768.24 L1861.5,768.02 L1862.5,768.33 L1863.5,768.42 L1864.5,768.79 L1865.5,769.25 L1866.5,769.50 L1867.5,769.29 L1868.5,762.08 L1869.5,741.82 L1870.5,719.05 L1871.5,697.04 L1872.5,690.78 L1873.5,699.77 L1874.5,708.37 L1875.5,709.16 L1876.5,704.16 L1877.5,700.96 L1878.5,703.61" stroke="#137b3b"/><path d="M99.5,798.06 L100.5,797.96 L101.5,797.98 L102.5,798.14 L103.5,798.17 L104.5,798.19 L105.5,798.24 L106.5,798.14 L107.5,798.17 L108.5,798.23 L109.5,798.05 L110.5,797.88 L111.5,797.74 L112.5,797.75 L113.5,797.76 L114.5,797.78 L115.5,797.88 L116.5,798.00 L117.5,798.00 L118.5,797.83 L119.5,797.78 L120.5,797.85 L121.5,797.93 L122.5,798.07 L123.5,798.12 L124.5,798.11 L125.5,798.16 L126.5,798.22 L127.5,798.30 L128.5,798.33 L129.5,798.17 L130.5,798.04 L131.5,798.05 L132.5,798.05 L133.5,797.96 L134.5,798.01 L135.5,797.86 L136.5,797.85 L137.5,797.86 L138.5,797.90 L139.5,797.84 L140.5,797.88 L141.5,797.89 L142.5,797.91 L143.5,797.96 L144.5,798.07 L145.5,798.15 L146.5,798.25 L147.5,798.18 L148.5,798.22 L149.5,798.27 L150.5,798.34 L151.5,798.29 L152.5,798.31 L153.5,798.31 L154.5,798.26 L155.5,798.25 L156.5,798.21 L157.5,798.07 L158.5,798.04 L159.5,798.14 L160.5,798.05 L161.5,798.00 L162.5,797.94 L163.5,797.97 L164.5,798.07 L165.5,798.18 L166.5,798.28 L167.5,798.32 L168.5,798.23 L169.5,798.22 L170.5,798.21 L171.5,798.20 L172.5,798.23 L173.5,798.20 L174.5,798.16 L175.5,798.20 L176.5,798.30 L177.5,798.35 L178.5,798.17 L179.5,798.10 L180.5,798.15 L181.5,798.08 L182.5,798.03 L183.5,798.19 L184.5,798.18 L185.5,798.19 L186.5,798.18 L187.5,798.12 L188.5,798.01 L189.5,797.88 L190.5,797.84 L191.5,797.83 L192.5,797.77 L193.5,797.93 L194.5,797.92 L195.5,797.92 L196.5,797.95 L197.5,798.17 L198.5,798.23 L199.5,798.15 L200.5,797.92 L201.5,797.86 L202.5,797.81 L203.5,797.82 L204.5,797.92 L205.5,797.92 L206.5,797.94 L207.5,797.98 L208.5,798.18 L209.5,798.22 L210.5,798.11 L211.5,797.97 L212.5,797.86 L213.5,797.84 L214.5,797.91 L215.5,797.89 L216.5,798.00 L217.5,798.08 L218.5,798.13 L219.5,798.16 L220.5,798.21 L221.5,798.11 L222.5,798.03 L223.5,798.00 L224.5,797.95 L225.5,797.92 L226.5,797.95 L227.5,797.98 L228.5,798.11 L229.5,798.06 L230.5,798.06 L231.5,798.08 L232.5,798.16 L233.5,798.13 L234.5,798.19 L235.5,798.21 L236.5,798.07 L237.5,798.02 L238.5,797.86 L239.5,797.74 L240.5,797.70 L241.5,797.75 L242.5,797.91 L243.5,797.94 L244.5,797.99 L245.5,797.95 L246.5,797.85 L247.5,797.83 L248.5,797.85 L249.5,797.82 L250.5,797.78 L251.5,797.78 L252.5,797.74 L253.5,797.90 L254.5,797.96 L255.5,797.83 L256.5,797.79 L257.5,797.84 L258.5,797.95 L259.5,798.12 L260.5,798.15 L261.5,798.07 L262.5,798.05 L263.5,798.05 L264.5,798.19 L265.5,798.33 L266.5,798.38 L267.5,798.44 L268.5,798.43 L269.5,798.34 L270.5,798.14 L271.5,797.99 L272.5,797.89 L273.5,798.03 L274.5,798.03 L275.5,797.99 L276.5,798.00 L277.5,798.05 L278.5,798.12 L279.5,798.06 L280.5,798.00 L281.5,798.04 L282.5,798.06 L283.5,797.94 L284.5,797.93 L285.5,798.05 L286.5,798.17 L287.5,798.16 L288.5,798.10 L289.5,798.11 L290.5,798.19 L291.5,798.20 L292.5,798.25 L293.5,798.11 L294.5,798.11 L295.5,798.25 L296.5,798.29 L297.5,798.25 L298.5,798.25 L299.5,798.14 L300.5,798.10 L301.5,797.99 L302.5,797.84 L303.5,797.80 L304.5,797.80 L305.5,797.80 L306.5,797.93 L307.5,797.98 L308.5,798.04 L309.5,798.03 L310.5,797.95 L311.5,797.90 L312.5,797.89 L313.5,797.82 L314.5,797.73 L315.5,797.79 L316.5,797.95 L317.5,797.98 L318.5,798.01 L319.5,798.02 L320.5,797.97 L321.5,797.97 L322.5,798.00 L323.5,798.07 L324.5,797.97 L325.5,798.00 L326.5,798.05 L327.5,797.99 L328.5,797.96 L329.5,797.95 L330.5,797.95 L331.5,797.59 L332.5,787.43 L333.5,756.77 L334.5,726.12 L335.5,716.01 L336.5,715.71 L337.5,715.50 L338.5,715.50 L339.5,715.45 L340.5,715.32 L341.5,715.23 L342.5,715.15 L343.5,715.17 L344.5,715.06 L345.5,714.78 L346.5,714.54 L347.5,714.58 L348.5,721.15 L349.5,741.50 L350.5,764.20 L351.5,786.50 L352.5,797.69 L353.5,797.96 L354.5,797.93 L355.5,797.95 L356.5,798.10 L357.5,798.12 L358.5,798.00 L359.5,798.04 L360.5,798.04 L361.5,798.09 L362.5,798.14 L363.5,798.12 L364.5,798.17 L365.5,798.13 L366.5,798.06 L367.5,798.05 L368.5,798.13 L369.5,798.05 L370.5,798.07 L371.5,798.03 L372.5,798.08 L373.5,798.08 L374.5,798.13 L375.5,798.10 L376.5,798.11 L377.5,798.14 L378.5,798.04 L379.5,798.00 L380.5,797.94 L381.5,797.90 L382.5,797.85 L383.5,797.81 L384.5,797.83 L385.5,797.74 L386.5,797.65 L387.5,797.65 L388.5,797.80 L389.5,797.90 L390.5,797.91 L391.5,797.94 L392.5,798.07 L393.5,798.12 L394.5,798.18 L395.5,798.06 L396.5,798.06 L397.5,798.13 L398.5,798.20 L399.5,798.16 L400.5,798.15 L401.5,798.24 L402.5,798.16 L403.5,798.01 L404.5,797.95 L405.5,797.96 L406.5,798.07 L407.5,797.98 L408.5,797.95 L409.5,797.95 L410.5,798.05 L411.5,798.09 L412.5,798.14 L413.5,797.96 L414.5,797.90 L415.5,797.98 L416.5,797.92 L417.5,797.90 L418.5,797.99 L419.5,798.02 L420.5,798.04 L421.5,798.12 L422.5,798.08 L423.5,797.77 L424.5,791.41 L425.5,779.11 L426.5,772.47 L427.5,782.89 L428.5,795.03 L429.5,798.13 L430.5,798.07 L431.5,798.10 L432.5,798.15 L433.5,798.20 L434.5,798.17 L435.5,798.24 L436.5,798.15 L437.5,798.03 L438.5,798.01 L439.5,798.02 L440.5,797.97 L441.5,798.04 L442.5,797.88 L443.5,797.79 L444.5,797.88 L445.5,797.91 L446.5,797.94 L447.5,798.01 L448.5,797.95 L449.5,797.98 L450.5,798.09 L451.5,798.03 L452.5,797.96 L453.5,798.02 L454.5,798.04 L455.5,798.17 L456.5,798.30 L457.5,798.24 L458.5,798.15 L459.5,798.19 L460.5,798.29 L461.5,798.25 L462.5,798.27 L463.5,798.36 L464.5,798.42 L465.5,798.39 L466.5,798.40 L467.5,798.39 L468.5,798.14 L469.5,798.02 L470.5,798.06 L471.5,798.13 L472.5,798.09 L473.5,798.04 L474.5,798.00 L475.5,797.98 L476.5,797.93 L477.5,797.91 L478.5,797.84 L479.5,797.88 L480.5,797.80 L481.5,797.75 L482.5,797.82 L483.5,797.98 L484.5,797.99 L485.5,798.06 L486.5,798.11 L487.5,797.96 L488.5,797.94 L489.5,797.91 L490.5,797.93 L491.5,798.02 L492.5,797.91 L493.5,797.79 L494.5,797.77 L495.5,797.82 L496.5,797.92 L497.5,798.01 L498.5,798.03 L499.5,798.12 L500.5,798.09 L501.5,798.16 L502.5,798.01 L503.5,798.03 L504.5,798.02 L505.5,797.99 L506.5,798.05 L507.5,797.98 L508.5,797.87 L509.5,797.79 L510.5,797.91 L511.5,798.01 L512.5,798.06 L513.5,797.48 L514.5,783.31 L515.5,755.63 L516.5,727.94 L517.5,717.63 L518.5,743.64 L519.5,775.28 L520.5,795.59 L521.5,797.96 L522.5,798.09 L523.5,798.02 L524.5,797.93 L525.5,797.95 L526.5,797.86 L527.5,797.87 L528.5,797.96 L529.5,798.03 L530.5,798.11 L531.5,798.14 L532.5,798.20 L533.5,798.19 L534.5,798.02 L535.5,798.06 L536.5,798.10 L537.5,798.06 L538.5,798.11 L539.5,798.03 L540.5,797.96 L541.5,798.04 L542.5,797.99 L543.5,798.02 L544.5,797.96 L545.5,797.84 L546.5,797.90 L547.5,798.07 L548.5,797.98 L549.5,797.86 L550.5,797.85 L551.5,797.93 L552.5,797.87 L553.5,797.81 L554.5,797.88 L555.5,797.99 L556.5,798.01 L557.5,798.02 L558.5,798.05 L559.5,798.11 L560.5,798.00 L561.5,797.93 L562.5,797.89 L563.5,797.98 L564.5,797.97 L565.5,797.87 L566.5,797.91 L567.5,798.00 L568.5,797.96 L569.5,797.92 L570.5,797.91 L571.5,797.83 L572.5,797.76 L573.5,797.78 L574.5,797.86 L575.5,797.88 L576.5,797.91 L577.5,797.95 L578.5,797.97 L579.5,798.07 L580.5,798.17 L581.5,798.13 L582.5,797.94 L583.5,798.02 L584.5,798.10 L585.5,798.17 L586.5,798.04 L587.5,798.04 L588.5,798.08 L589.5,798.08 L590.5,798.07 L591.5,798.10 L592.5,798.20 L593.5,798.31 L594.5,798.24 L595.5,798.21 L596.5,798.17 L597.5,798.06 L598.5,797.94 L599.5,798.13 L600.5,798.23 L601.5,798.19 L602.5,798.03 L603.5,797.85 L604.5,797.82 L605.5,797.85 L606.5,797.91 L607.5,797.93 L608.5,797.78 L609.5,797.73 L610.5,797.68 L611.5,797.78 L612.5,797.99 L613.5,798.09 L614.5,798.02 L615.5,798.03 L616.5,798.04 L617.5,797.90 L618.5,797.86 L619.5,797.82 L620.5,797.78 L621.5,797.94 L622.5,798.00 L623.5,798.07 L624.5,798.18 L625.5,798.15 L626.5,798.14 L627.5,798.14 L628.5,798.00 L629.5,791.72 L630.5,772.56 L631.5,751.20 L632.5,730.20 L633.5,716.75 L634.5,715.29 L635.5,715.37 L636.5,715.35 L637.5,715.35 L638.5,715.38 L639.5,715.31 L640.5,715.30 L641.5,715.24 L642.5,715.26 L643.5,715.38 L644.5,715.30 L645.5,714.97 L646.5,714.50 L647.5,714.10 L648.5,713.53 L649.5,713.15 L650.5,712.53 L651.5,712.10 L652.5,711.66 L653.5,711.06 L654.5,710.44 L655.5,709.77 L656.5,709.00 L657.5,708.28 L658.5,707.74 L659.5,707.07 L660.5,706.60 L661.5,706.23 L662.5,705.78 L663.5,705.58 L664.5,705.25 L665.5,705.08 L666.5,705.29 L667.5,705.65 L668.5,706.43 L669.5,707.68 L670.5,709.17 L671.5,710.75 L672.5,712.32 L673.5,713.05 L674.5,713.07 L675.5,713.04 L676.5,712.97 L677.5,713.02 L678.5,713.14 L679.5,713.27 L680.5,713.39 L681.5,713.46 L682.5,713.52 L683.5,713.65 L684.5,713.64 L685.5,713.59 L686.5,713.65 L687.5,713.74 L688.5,713.66 L689.5,713.82 L690.5,720.08 L691.5,736.08 L692.5,753.28 L693.5,770.57 L694.5,787.61 L695.5,797.34 L696.5,798.02 L697.5,798.07 L698.5,798.21 L699.5,798.20 L700.5,798.15 L701.5,798.14 L702.5,798.01 L703.5,797.99 L704.5,798.02 L705.5,798.07 L706.5,798.04 L707.5,798.14 L708.5,798.09 L709.5,798.06 L710.5,798.12 L711.5,798.11 L712.5,798.02 L713.5,797.97 L714.5,797.97 L715.5,797.92 L716.5,798.03 L717.5,798.01 L718.5,797.86 L719.5,797.80 L720.5,797.96 L721.5,798.11 L722.5,798.10 L723.5,798.18 L724.5,798.28 L725.5,798.21 L726.5,798.09 L727.5,798.05 L728.5,797.97 L729.5,797.92 L730.5,797.88 L731.5,797.91 L732.5,797.91 L733.5,797.81 L734.5,797.78 L735.5,797.90 L736.5,798.05 L737.5,798.01 L738.5,797.98 L739.5,797.96 L740.5,798.00 L741.5,797.99 L742.5,797.87 L743.5,797.76 L744.5,797.79 L745.5,797.83 L746.5,797.87 L747.5,797.94 L748.5,797.98 L749.5,798.02 L750.5,798.02 L751.5,797.97 L752.5,798.00 L753.5,797.98 L754.5,797.92 L755.5,797.84 L756.5,797.78 L757.5,797.79 L758.5,797.97 L759.5,798.09 L760.5,798.11 L761.5,798.16 L762.5,798.09 L763.5,798.12 L764.5,798.19 L765.5,798.07 L766.5,798.12 L767.5,798.14 L768.5,798.18 L769.5,798.21 L770.5,798.19 L771.5,798.21 L772.5,798.18 L773.5,798.08 L774.5,798.11 L775.5,798.22 L776.5,798.22 L777.5,798.13 L778.5,798.10 L779.5,798.15 L780.5,798.12 L781.5,798.03 L782.5,797.84 L783.5,797.73 L784.5,797.75 L785.5,797.87 L786.5,797.91 L787.5,797.92 L788.5,797.98 L789.5,798.12 L790.5,798.14 L791.5,798.20 L792.5,798.22 L793.5,798.10 L794.5,798.06 L795.5,798.09 L796.5,798.17 L797.5,798.12 L798.5,798.04 L799.5,798.01 L800.5,798.03 L801.5,798.01 L802.5,797.95 L803.5,798.01 L804.5,798.10 L805.5,798.01 L806.5,797.92 L807.5,797.89 L808.5,797.80 L809.5,797.67 L810.5,797.66 L811.5,797.81 L812.5,797.89 L813.5,797.84 L814.5,797.75 L815.5,797.79 L816.5,797.80 L817.5,797.87 L818.5,797.84 L819.5,797.84 L820.5,797.90 L821.5,797.87 L822.5,797.78 L823.5,797.82 L824.5,797.91 L825.5,797.90 L826.5,797.77 L827.5,797.85 L828.5,797.85 L829.5,797.86 L830.5,797.87 L831.5,797.76 L832.5,797.66 L833.5,797.71 L834.5,797.82 L835.5,797.82 L836.5,797.83 L837.5,797.77 L838.5,797.75 L839.5,797.79 L840.5,797.91 L841.5,797.90 L842.5,797.86 L843.5,797.95 L844.5,798.00 L845.5,798.09 L846.5,798.02 L847.5,798.11 L848.5,798.08 L849.5,798.04 L850.5,798.02 L851.5,797.98 L852.5,797.97 L853.5,797.95 L854.5,797.91 L855.5,797.84 L856.5,797.92 L857.5,798.00 L858.5,797.92 L859.5,797.92 L860.5,798.03 L861.5,798.09 L862.5,798.05 L863.5,797.93 L864.5,798.03 L865.5,798.03 L866.5,798.06 L867.5,798.07 L868.5,798.10 L869.5,797.99 L870.5,798.04 L871.5,798.13 L872.5,798.17 L873.5,798.11 L874.5,798.20 L875.5,798.23 L876.5,798.15 L877.5,798.20 L878.5,798.22 L879.5,798.31 L880.5,798.33 L881.5,798.23 L882.5,798.14 L883.5,798.12 L884.5,797.96 L885.5,797.86 L886.5,797.87 L887.5,797.88 L888.5,797.90 L889.5,797.84 L890.5,797.82 L891.5,797.84 L892.5,797.77 L893.5,797.71 L894.5,797.68 L895.5,797.66 L896.5,797.74 L897.5,797.86 L898.5,797.97 L899.5,798.04 L900.5,798.03 L901.5,798.12 L902.5,798.14 L903.5,798.07 L904.5,798.07 L905.5,798.04 L906.5,797.95 L907.5,797.99 L908.5,797.83 L909.5,797.73 L910.5,797.74 L911.5,797.79 L912.5,797.88 L913.5,797.86 L914.5,797.96 L915.5,798.00 L916.5,797.99 L917.5,798.02 L918.5,798.07 L919.5,798.00 L920.5,797.93 L921.5,797.86 L922.5,797.88 L923.5,798.00 L924.5,798.17 L925.5,798.11 L926.5,797.97 L927.5,796.61 L928.5,785.78 L929.5,768.93 L930.5,751.88 L931.5,734.88 L932.5,719.62 L933.5,714.48 L934.5,714.29 L935.5,714.19 L936.5,714.25 L937.5,714.27 L938.5,714.27 L939.5,714.25 L940.5,714.32 L941.5,714.38 L942.5,714.52 L943.5,714.63 L944.5,714.67 L945.5,714.59 L946.5,715.58 L947.5,726.85 L948.5,746.37 L949.5,766.20 L950.5,785.77 L951.5,797.01 L952.5,797.98 L953.5,798.08 L954.5,798.14 L955.5,798.06 L956.5,797.99 L957.5,797.90 L958.5,797.90 L959.5,797.96 L960.5,798.08 L961.5,798.15 L962.5,798.17 L963.5,798.19 L964.5,798.12 L965.5,798.06 L966.5,798.06 L967.5,798.01 L968.5,797.93 L969.5,798.07 L970.5,798.08 L971.5,798.03 L972.5,797.87 L973.5,797.88 L974.5,797.96 L975.5,797.97 L976.5,798.01 L977.5,797.94 L978.5,797.94 L979.5,798.00 L980.5,797.94 L981.5,797.81 L982.5,797.79 L983.5,797.88 L984.5,797.97 L985.5,797.98 L986.5,798.05 L987.5,798.07 L988.5,798.00 L989.5,798.00 L990.5,798.11 L991.5,798.18 L992.5,798.04 L993.5,797.93 L994.5,797.92 L995.5,797.97 L996.5,798.05 L997.5,798.02 L998.5,797.91 L999.5,797.81 L1000.5,797.82 L1001.5,797.88 L1002.5,797.88 L1003.5,797.90 L1004.5,797.95 L1005.5,798.01 L1006.5,797.87 L1007.5,797.77 L1008.5,797.81 L1009.5,797.90 L1010.5,797.96 L1011.5,798.18 L1012.5,798.24 L1013.5,798.19 L1014.5,798.14 L1015.5,798.06 L1016.5,797.96 L1017.5,797.99 L1018.5,798.01 L1019.5,797.92 L1020.5,797.85 L1021.5,797.86 L1022.5,797.87 L1023.5,797.86 L1024.5,797.96 L1025.5,797.86 L1026.5,797.96 L1027.5,798.06 L1028.5,798.16 L1029.5,798.08 L1030.5,798.07 L1031.5,798.19 L1032.5,798.26 L1033.5,798.25 L1034.5,798.22 L1035.5,798.17 L1036.5,798.13 L1037.5,797.97 L1038.5,797.89 L1039.5,797.91 L1040.5,797.96 L1041.5,798.01 L1042.5,797.96 L1043.5,797.83 L1044.5,797.84 L1045.5,797.91 L1046.5,797.94 L1047.5,798.04 L1048.5,798.01 L1049.5,797.94 L1050.5,798.00 L1051.5,798.08 L1052.5,798.08 L1053.5,797.95 L1054.5,797.87 L1055.5,797.82 L1056.5,797.80 L1057.5,797.88 L1058.5,797.80 L1059.5,797.80 L1060.5,797.72 L1061.5,797.85 L1062.5,797.88 L1063.5,797.78 L1064.5,797.83 L1065.5,798.00 L1066.5,798.03 L1067.5,798.00 L1068.5,797.99 L1069.5,798.05 L1070.5,798.19 L1071.5,798.24 L1072.5,798.18 L1073.5,798.04 L1074.5,797.95 L1075.5,798.03 L1076.5,798.11 L1077.5,798.15 L1078.5,798.24 L1079.5,798.25 L1080.5,798.16 L1081.5,798.08 L1082.5,798.00 L1083.5,798.16 L1084.5,798.13 L1085.5,798.01 L1086.5,797.90 L1087.5,798.01 L1088.5,798.13 L1089.5,798.14 L1090.5,798.16 L1091.5,798.20 L1092.5,798.22 L1093.5,798.30 L1094.5,798.21 L1095.5,798.28 L1096.5,798.23 L1097.5,798.18 L1098.5,798.19 L1099.5,798.16 L1100.5,798.08 L1101.5,797.92 L1102.5,797.99 L1103.5,798.08 L1104.5,798.16 L1105.5,798.16 L1106.5,798.00 L1107.5,797.86 L1108.5,797.87 L1109.5,797.95 L1110.5,798.08 L1111.5,798.06 L1112.5,798.13 L1113.5,798.14 L1114.5,798.12 L1115.5,798.06 L1116.5,797.98 L1117.5,797.90 L1118.5,797.98 L1119.5,798.06 L1120.5,798.07 L1121.5,798.11 L1122.5,798.20 L1123.5,798.08 L1124.5,798.05 L1125.5,798.22 L1126.5,798.19 L1127.5,798.15 L1128.5,798.07 L1129.5,798.15 L1130.5,798.19 L1131.5,798.17 L1132.5,798.07 L1133.5,797.93 L1134.5,797.94 L1135.5,797.80 L1136.5,797.70 L1137.5,797.71 L1138.5,797.70 L1139.5,797.64 L1140.5,797.78 L1141.5,797.82 L1142.5,797.82 L1143.5,797.85 L1144.5,797.79 L1145.5,797.71 L1146.5,797.81 L1147.5,797.73 L1148.5,797.73 L1149.5,797.87 L1150.5,797.81 L1151.5,797.83 L1152.5,797.95 L1153.5,798.04 L1154.5,798.16 L1155.5,798.14 L1156.5,798.03 L1157.5,797.94 L1158.5,797.82 L1159.5,797.85 L1160.5,797.80 L1161.5,797.79 L1162.5,797.92 L1163.5,798.02 L1164.5,798.12 L1165.5,798.16 L1166.5,798.13 L1167.5,798.21 L1168.5,798.19 L1169.5,798.20 L1170.5,798.17 L1171.5,798.05 L1172.5,797.96 L1173.5,797.92 L1174.5,797.99 L1175.5,797.88 L1176.5,797.81 L1177.5,797.83 L1178.5,797.74 L1179.5,797.66 L1180.5,797.71 L1181.5,797.68 L1182.5,797.73 L1183.5,797.92 L1184.5,798.04 L1185.5,798.07 L1186.5,798.05 L1187.5,798.12 L1188.5,798.10 L1189.5,798.10 L1190.5,798.01 L1191.5,797.90 L1192.5,798.00 L1193.5,797.88 L1194.5,797.87 L1195.5,797.97 L1196.5,797.97 L1197.5,797.96 L1198.5,797.98 L1199.5,797.92 L1200.5,797.98 L1201.5,798.09 L1202.5,798.06 L1203.5,797.98 L1204.5,797.86 L1205.5,797.82 L1206.5,797.74 L1207.5,797.73 L1208.5,797.85 L1209.5,797.91 L1210.5,797.81 L1211.5,797.76 L1212.5,797.79 L1213.5,797.82 L1214.5,797.97 L1215.5,798.05 L1216.5,798.02 L1217.5,797.91 L1218.5,797.78 L1219.5,797.83 L1220.5,797.84 L1221.5,797.80 L1222.5,797.76 L1223.5,797.79 L1224.5,797.81 L1225.5,797.79 L1226.5,797.78 L1227.5,797.54 L1228.5,788.90 L1229.5,771.94 L1230.5,754.59 L1231.5,737.30 L1232.5,720.76 L1233.5,713.24 L1234.5,712.91 L1235.5,713.10 L1236.5,713.18 L1237.5,713.19 L1238.5,713.16 L1239.5,713.19 L1240.5,713.24 L1241.5,713.40 L1242.5,713.39 L1243.5,713.31 L1244.5,713.36 L1245.5,713.50 L1246.5,718.76 L1247.5,738.70 L1248.5,761.50 L1249.5,784.04 L1250.5,797.01 L1251.5,798.12 L1252.5,798.20 L1253.5,798.16 L1254.5,798.04 L1255.5,797.89 L1256.5,797.88 L1257.5,797.94 L1258.5,797.95 L1259.5,798.03 L1260.5,798.16 L1261.5,798.10 L1262.5,798.08 L1263.5,798.18 L1264.5,798.27 L1265.5,798.28 L1266.5,798.36 L1267.5,798.35 L1268.5,798.22 L1269.5,798.03 L1270.5,798.03 L1271.5,798.09 L1272.5,798.19 L1273.5,798.38 L1274.5,798.49 L1275.5,798.57 L1276.5,798.82 L1277.5,798.85 L1278.5,798.80 L1279.5,798.91 L1280.5,798.91 L1281.5,798.76 L1282.5,798.57 L1283.5,798.59 L1284.5,798.65 L1285.5,798.58 L1286.5,798.41 L1287.5,798.32 L1288.5,798.18 L1289.5,798.07 L1290.5,797.95 L1291.5,797.86 L1292.5,797.91 L1293.5,797.97 L1294.5,797.98 L1295.5,797.92 L1296.5,797.91 L1297.5,797.95 L1298.5,797.95 L1299.5,797.82 L1300.5,797.89 L1301.5,797.90 L1302.5,798.01 L1303.5,798.14 L1304.5,798.17 L1305.5,798.10 L1306.5,798.11 L1307.5,798.19 L1308.5,798.27 L1309.5,798.15 L1310.5,798.09 L1311.5,798.07 L1312.5,798.13 L1313.5,798.22 L1314.5,798.30 L1315.5,798.32 L1316.5,798.28 L1317.5,798.19 L1318.5,798.09 L1319.5,798.11 L1320.5,798.03 L1321.5,798.12 L1322.5,798.04 L1323.5,798.01 L1324.5,797.99 L1325.5,798.10 L1326.5,798.14 L1327.5,798.05 L1328.5,798.02 L1329.5,797.94 L1330.5,797.99 L1331.5,797.99 L1332.5,798.03 L1333.5,797.94 L1334.5,797.94 L1335.5,797.92 L1336.5,798.05 L1337.5,797.95 L1338.5,797.96 L1339.5,798.10 L1340.5,798.20 L1341.5,798.13 L1342.5,798.14 L1343.5,798.13 L1344.5,798.13 L1345.5,798.17 L1346.5,798.11 L1347.5,798.02 L1348.5,798.11 L1349.5,798.11 L1350.5,798.07 L1351.5,798.12 L1352.5,798.05 L1353.5,798.13 L1354.5,798.25 L1355.5,798.27 L1356.5,798.20 L1357.5,798.20 L1358.5,798.14 L1359.5,798.21 L1360.5,798.19 L1361.5,798.20 L1362.5,798.22 L1363.5,798.31 L1364.5,798.36 L1365.5,798.28 L1366.5,798.25 L1367.5,798.18 L1368.5,798.07 L1369.5,797.92 L1370.5,797.94 L1371.5,797.96 L1372.5,797.89 L1373.5,797.96 L1374.5,798.00 L1375.5,798.00 L1376.5,798.08 L1377.5,798.06 L1378.5,798.00 L1379.5,797.95 L1380.5,798.04 L1381.5,798.05 L1382.5,797.98 L1383.5,798.02 L1384.5,798.01 L1385.5,798.14 L1386.5,798.30 L1387.5,798.38 L1388.5,798.33 L1389.5,798.22 L1390.5,798.21 L1391.5,798.00 L1392.5,797.87 L1393.5,797.75 L1394.5,797.73 L1395.5,797.92 L1396.5,797.94 L1397.5,797.87 L1398.5,797.94 L1399.5,797.97 L1400.5,797.96 L1401.5,797.95 L1402.5,798.01 L1403.5,797.90 L1404.5,797.90 L1405.5,797.84 L1406.5,797.86 L1407.5,797.85 L1408.5,797.89 L1409.5,797.81 L1410.5,797.87 L1411.5,797.76 L1412.5,797.77 L1413.5,797.73 L1414.5,797.69 L1415.5,797.71 L1416.5,797.76 L1417.5,797.74 L1418.5,797.82 L1419.5,797.93 L1420.5,798.07 L1421.5,798.07 L1422.5,798.14 L1423.5,798.04 L1424.5,798.09 L1425.5,798.16 L1426.5,798.10 L1427.5,798.21 L1428.5,798.31 L1429.5,798.24 L1430.5,798.09 L1431.5,798.01 L1432.5,798.01 L1433.5,797.89 L1434.5,797.92 L1435.5,798.11 L1436.5,798.17 L1437.5,798.07 L1438.5,798.05 L1439.5,797.98 L1440.5,798.06 L1441.5,798.16 L1442.5,798.29 L1443.5,798.22 L1444.5,798.12 L1445.5,798.11 L1446.5,797.99 L1447.5,797.99 L1448.5,798.17 L1449.5,798.24 L1450.5,798.14 L1451.5,798.04 L1452.5,798.06 L1453.5,798.12 L1454.5,798.10 L1455.5,798.07 L1456.5,798.11 L1457.5,798.21 L1458.5,798.19 L1459.5,798.04 L1460.5,798.02 L1461.5,797.98 L1462.5,798.05 L1463.5,798.09 L1464.5,798.09 L1465.5,797.96 L1466.5,798.02 L1467.5,798.10 L1468.5,798.07 L1469.5,798.00 L1470.5,797.93 L1471.5,797.82 L1472.5,797.81 L1473.5,797.84 L1474.5,797.83 L1475.5,797.68 L1476.5,797.74 L1477.5,797.93 L1478.5,797.94 L1479.5,797.97 L1480.5,797.97 L1481.5,797.87 L1482.5,797.83 L1483.5,797.93 L1484.5,798.07 L1485.5,798.16 L1486.5,798.12 L1487.5,798.22 L1488.5,798.26 L1489.5,798.32 L1490.5,798.21 L1491.5,798.20 L1492.5,798.29 L1493.5,798.29 L1494.5,798.24 L1495.5,798.18 L1496.5,798.13 L1497.5,798.12 L1498.5,798.29 L1499.5,798.36 L1500.5,798.20 L1501.5,798.16 L1502.5,798.20 L1503.5,798.07 L1504.5,798.02 L1505.5,798.03 L1506.5,798.05 L1507.5,798.13 L1508.5,798.24 L1509.5,798.15 L1510.5,798.12 L1511.5,798.16 L1512.5,798.02 L1513.5,797.95 L1514.5,797.77 L1515.5,797.83 L1516.5,798.01 L1517.5,798.00 L1518.5,798.03 L1519.5,798.14 L1520.5,798.06 L1521.5,798.14 L1522.5,798.20 L1523.5,798.14 L1524.5,798.03 L1525.5,798.10 L1526.5,798.09 L1527.5,798.07 L1528.5,798.11 L1529.5,798.16 L1530.5,798.18 L1531.5,798.08 L1532.5,798.12 L1533.5,797.99 L1534.5,797.94 L1535.5,797.98 L1536.5,798.02 L1537.5,797.94 L1538.5,797.90 L1539.5,797.79 L1540.5,797.81 L1541.5,797.96 L1542.5,798.03 L1543.5,798.00 L1544.5,798.03 L1545.5,798.00 L1546.5,797.91 L1547.5,798.01 L1548.5,798.22 L1549.5,798.20 L1550.5,798.05 L1551.5,797.99 L1552.5,797.93 L1553.5,798.02 L1554.5,797.99 L1555.5,797.97 L1556.5,797.90 L1557.5,798.00 L1558.5,798.16 L1559.5,798.16 L1560.5,798.12 L1561.5,798.04 L1562.5,798.04 L1563.5,797.94 L1564.5,798.03 L1565.5,798.20 L1566.5,798.26 L1567.5,798.14 L1568.5,798.04 L1569.5,798.01 L1570.5,797.88 L1571.5,797.92 L1572.5,797.92 L1573.5,797.92 L1574.5,797.91 L1575.5,797.82 L1576.5,797.87 L1577.5,798.03 L1578.5,798.14 L1579.5,797.99 L1580.5,797.82 L1581.5,797.84 L1582.5,797.86 L1583.5,797.90 L1584.5,797.92 L1585.5,797.89 L1586.5,797.93 L1587.5,797.98 L1588.5,798.09 L1589.5,798.16 L1590.5,798.04 L1591.5,798.13 L1592.5,798.08 L1593.5,797.96 L1594.5,797.95 L1595.5,797.85 L1596.5,797.79 L1597.5,797.97 L1598.5,798.17 L1599.5,798.23 L1600.5,798.22 L1601.5,798.26 L1602.5,798.24 L1603.5,798.19 L1604.5,798.02 L1605.5,797.97 L1606.5,797.90 L1607.5,797.93 L1608.5,797.87 L1609.5,797.93 L1610.5,798.05 L1611.5,798.13 L1612.5,798.21 L1613.5,798.16 L1614.5,798.05 L1615.5,797.99 L1616.5,797.99 L1617.5,798.05 L1618.5,798.01 L1619.5,797.83 L1620.5,797.86 L1621.5,797.90 L1622.5,797.88 L1623.5,797.80 L1624.5,797.99 L1625.5,797.98 L1626.5,797.92 L1627.5,797.89 L1628.5,797.78 L1629.5,797.81 L1630.5,797.84 L1631.5,797.87 L1632.5,797.85 L1633.5,797.78 L1634.5,797.79 L1635.5,797.82 L1636.5,797.74 L1637.5,797.80 L1638.5,797.94 L1639.5,797.90 L1640.5,797.82 L1641.5,797.85 L1642.5,798.03 L1643.5,798.10 L1644.5,798.08 L1645.5,798.11 L1646.5,798.18 L1647.5,798.24 L1648.5,798.31 L1649.5,798.34 L1650.5,798.37 L1651.5,798.28 L1652.5,798.32 L1653.5,798.34 L1654.5,798.27 L1655.5,798.10 L1656.5,797.99 L1657.5,797.91 L1658.5,797.85 L1659.5,797.90 L1660.5,798.08 L1661.5,795.10 L1662.5,779.00 L1663.5,760.00 L1664.5,747.44 L1665.5,763.61 L1666.5,786.19 L1667.5,797.77 L1668.5,798.07 L1669.5,797.87 L1670.5,797.89 L1671.5,797.93 L1672.5,797.98 L1673.5,797.98 L1674.5,797.99 L1675.5,798.08 L1676.5,798.05 L1677.5,797.94 L1678.5,797.99 L1679.5,798.04 L1680.5,798.03 L1681.5,797.93 L1682.5,798.05 L1683.5,798.16 L1684.5,798.02 L1685.5,797.94 L1686.5,797.98 L1687.5,798.02 L1688.5,797.99 L1689.5,797.99 L1690.5,798.01 L1691.5,797.92 L1692.5,797.91 L1693.5,797.92 L1694.5,797.97 L1695.5,797.88 L1696.5,797.83 L1697.5,797.93 L1698.5,798.00 L1699.5,798.14 L1700.5,798.23 L1701.5,798.12 L1702.5,798.06 L1703.5,797.98 L1704.5,797.90 L1705.5,797.89 L1706.5,797.91 L1707.5,798.02 L1708.5,798.15 L1709.5,798.03 L1710.5,797.90 L1711.5,797.91 L1712.5,797.97 L1713.5,798.00 L1714.5,797.91 L1715.5,797.85 L1716.5,797.93 L1717.5,797.94 L1718.5,797.93 L1719.5,798.01 L1720.5,798.03 L1721.5,797.89 L1722.5,797.91 L1723.5,797.98 L1724.5,798.05 L1725.5,798.02 L1726.5,798.08 L1727.5,798.10 L1728.5,798.11 L1729.5,798.13 L1730.5,798.24 L1731.5,798.23 L1732.5,798.18 L1733.5,798.12 L1734.5,798.15 L1735.5,798.02 L1736.5,798.02 L1737.5,797.96 L1738.5,797.94 L1739.5,797.97 L1740.5,798.05 L1741.5,798.13 L1742.5,798.19 L1743.5,798.16 L1744.5,798.19 L1745.5,798.10 L1746.5,797.97 L1747.5,797.92 L1748.5,797.94 L1749.5,797.91 L1750.5,797.87 L1751.5,797.86 L1752.5,797.99 L1753.5,798.12 L1754.5,798.24 L1755.5,798.34 L1756.5,798.30 L1757.5,798.32 L1758.5,798.29 L1759.5,798.23 L1760.5,798.08 L1761.5,797.97 L1762.5,798.03 L1763.5,798.09 L1764.5,798.16 L1765.5,798.23 L1766.5,798.28 L1767.5,798.35 L1768.5,798.43 L1769.5,798.37 L1770.5,798.28 L1771.5,798.10 L1772.5,798.16 L1773.5,798.15 L1774.5,798.26 L1775.5,798.33 L1776.5,798.14 L1777.5,798.04 L1778.5,798.07 L1779.5,798.06 L1780.5,797.92 L1781.5,798.00 L1782.5,798.01 L1783.5,798.04 L1784.5,798.19 L1785.5,798.28 L1786.5,798.19 L1787.5,798.14 L1788.5,798.17 L1789.5,798.20 L1790.5,798.17 L1791.5,798.19 L1792.5,798.10 L1793.5,798.09 L1794.5,798.07 L1795.5,798.08 L1796.5,798.09 L1797.5,798.07 L1798.5,798.12 L1799.5,798.09 L1800.5,797.98 L1801.5,797.91 L1802.5,797.93 L1803.5,797.93 L1804.5,797.92 L1805.5,797.86 L1806.5,797.74 L1807.5,797.81 L1808.5,797.85 L1809.5,797.90 L1810.5,797.92 L1811.5,797.90 L1812.5,797.83 L1813.5,798.02 L1814.5,798.02 L1815.5,797.96 L1816.5,797.88 L1817.5,797.82 L1818.5,797.98 L1819.5,798.04 L1820.5,798.15 L1821.5,798.25 L1822.5,798.36 L1823.5,798.39 L1824.5,798.22 L1825.5,798.06 L1826.5,798.08 L1827.5,796.74 L1828.5,784.73 L1829.5,765.97 L1830.5,746.88 L1831.5,728.11 L1832.5,715.80 L1833.5,714.20 L1834.5,714.19 L1835.5,714.13 L1836.5,714.14 L1837.5,714.12 L1838.5,714.03 L1839.5,714.00 L1840.5,713.94 L1841.5,713.65 L1842.5,713.47 L1843.5,715.38 L1844.5,727.59 L1845.5,744.65 L1846.5,761.92 L1847.5,779.15 L1848.5,794.22 L1849.5,798.07 L1850.5,798.13 L1851.5,798.02 L1852.5,798.12 L1853.5,798.13 L1854.5,798.14 L1855.5,798.09 L1856.5,798.09 L1857.5,798.08 L1858.5,798.06 L1859.5,798.22 L1860.5,798.17 L1861.5,798.23 L1862.5,798.28 L1863.5,798.29 L1864.5,798.19 L1865.5,798.13 L1866.5,798.02 L1867.5,797.96 L1868.5,797.97 L1869.5,798.00 L1870.5,798.09 L1871.5,798.15 L1872.5,798.22 L1873.5,798.21 L1874.5,798.26 L1875.5,798.24 L1876.5,798.16 L1877.5,798.16 L1878.5,798.14" stroke="#1a6fd8"/><path d="M99.5,805.70 L100.5,805.70 L101.5,805.70 L102.5,805.70 L103.5,805.70 L104.5,805.70 L105.5,805.70 L106.5,805.70 L107.5,805.70 L108.5,805.70 L109.5,805.70 L110.5,805.70 L111.5,805.70 L112.5,805.70 L113.5,805.70 L114.5,802.40 L115.5,755.02 L116.5,692.18 L117.5,655.22 L118.5,654.28 L119.5,654.73 L120.5,654.65 L121.5,654.47 L122.5,654.21 L123.5,654.34 L124.5,654.19 L125.5,654.49 L126.5,654.57 L127.5,654.54 L128.5,654.73 L129.5,654.45 L130.5,654.60 L131.5,654.41 L132.5,654.84 L133.5,654.80 L134.5,654.90 L135.5,654.68 L136.5,654.94 L137.5,654.53 L138.5,678.33 L139.5,725.39 L140.5,772.19 L141.5,803.97 L142.5,805.70 L143.5,805.70 L144.5,805.70 L145.5,805.70 L146.5,805.70 L147.5,805.70 L148.5,805.70 L149.5,805.70 L150.5,805.70 L151.5,805.70 L152.5,805.70 L153.5,805.70 L154.5,805.70 L155.5,805.70 L156.5,805.66 L157.5,788.36 L158.5,737.73 L159.5,686.03 L160.5,655.97 L161.5,655.03 L162.5,654.87 L163.5,654.70 L164.5,654.41 L165.5,654.35 L166.5,654.18 L167.5,654.26 L168.5,654.41 L169.5,654.48 L170.5,654.62 L171.5,654.37 L172.5,654.48 L173.5,654.51 L174.5,654.87 L175.5,654.67 L176.5,654.46 L177.5,669.77 L178.5,727.21 L179.5,785.63 L180.5,805.65 L181.5,805.70 L182.5,805.70 L183.5,805.70 L184.5,805.70 L185.5,805.70 L186.5,805.70 L187.5,805.70 L188.5,805.70 L189.5,805.70 L190.5,805.70 L191.5,805.70 L192.5,805.70 L193.5,805.70 L194.5,805.70 L195.5,805.70 L196.5,805.70 L197.5,805.70 L198.5,805.69 L199.5,797.74 L200.5,750.84 L201.5,700.63 L202.5,658.78 L203.5,654.80 L204.5,655.04 L205.5,654.98 L206.5,654.90 L207.5,654.89 L208.5,655.02 L209.5,655.00 L210.5,654.49 L211.5,654.30 L212.5,654.51 L213.5,654.32 L214.5,654.50 L215.5,654.25 L216.5,654.33 L217.5,654.76 L218.5,655.25 L219.5,655.38 L220.5,673.99 L221.5,745.64 L222.5,801.81 L223.5,805.70 L224.5,805.70 L225.5,805.70 L226.5,805.70 L227.5,805.70 L228.5,805.70 L229.5,805.70 L230.5,805.70 L231.5,805.70 L232.5,805.70 L233.5,805.70 L234.5,805.70 L235.5,805.70 L236.5,805.70 L237.5,805.70 L238.5,805.70 L239.5,805.70 L240.5,805.70 L241.5,805.70 L242.5,805.70 L243.5,805.70 L244.5,805.70 L245.5,805.70 L246.5,805.70 L247.5,805.70 L248.5,805.70 L249.5,805.70 L250.5,805.70 L251.5,805.70 L252.5,805.70 L253.5,805.70 L254.5,805.70 L255.5,805.70 L256.5,805.70 L257.5,805.70 L258.5,805.70 L259.5,805.70 L260.5,805.70 L261.5,805.70 L262.5,805.70 L263.5,805.70 L264.5,805.70 L265.5,805.70 L266.5,805.70 L267.5,805.70 L268.5,805.70 L269.5,805.70 L270.5,805.70 L271.5,805.70 L272.5,805.70 L273.5,805.70 L274.5,805.70 L275.5,805.70 L276.5,805.70 L277.5,805.70 L278.5,805.70 L279.5,805.70 L280.5,805.70 L281.5,805.70 L282.5,805.70 L283.5,805.70 L284.5,805.70 L285.5,805.70 L286.5,805.70 L287.5,805.70 L288.5,805.70 L289.5,805.70 L290.5,805.70 L291.5,805.70 L292.5,805.70 L293.5,805.70 L294.5,805.70 L295.5,805.70 L296.5,805.70 L297.5,805.70 L298.5,805.70 L299.5,805.70 L300.5,805.70 L301.5,805.70 L302.5,805.70 L303.5,805.70 L304.5,805.70 L305.5,805.70 L306.5,805.70 L307.5,805.70 L308.5,805.70 L309.5,805.70 L310.5,805.70 L311.5,805.70 L312.5,805.70 L313.5,805.70 L314.5,805.70 L315.5,805.70 L316.5,805.70 L317.5,805.70 L318.5,805.70 L319.5,805.70 L320.5,805.70 L321.5,805.70 L322.5,805.70 L323.5,805.70 L324.5,805.70 L325.5,805.70 L326.5,805.70 L327.5,805.70 L328.5,801.57 L329.5,751.55 L330.5,691.00 L331.5,655.88 L332.5,655.10 L333.5,655.00 L334.5,655.17 L335.5,654.83 L336.5,654.64 L337.5,654.38 L338.5,654.42 L339.5,654.47 L340.5,654.97 L341.5,655.06 L342.5,654.99 L343.5,655.03 L344.5,655.18 L345.5,655.10 L346.5,655.20 L347.5,655.52 L348.5,655.81 L349.5,655.75 L350.5,655.76 L351.5,655.25 L352.5,655.30 L353.5,676.23 L354.5,736.66 L355.5,795.32 L356.5,805.68 L357.5,805.70 L358.5,805.70 L359.5,805.70 L360.5,805.70 L361.5,805.70 L362.5,805.70 L363.5,805.70 L364.5,805.70 L365.5,805.70 L366.5,805.70 L367.5,805.70 L368.5,805.70 L369.5,805.70 L370.5,805.70 L371.5,801.30 L372.5,748.50 L373.5,685.77 L374.5,654.51 L375.5,654.82 L376.5,655.14 L377.5,654.89 L378.5,654.69 L379.5,654.66 L380.5,654.96 L381.5,654.69 L382.5,654.31 L383.5,654.25 L384.5,653.99 L385.5,654.11 L386.5,654.51 L387.5,654.56 L388.5,654.54 L389.5,654.88 L390.5,654.81 L391.5,654.55 L392.5,654.50 L393.5,654.48 L394.5,655.46 L395.5,682.97 L396.5,730.34 L397.5,777.78 L398.5,804.90 L399.5,805.70 L400.5,805.70 L401.5,805.70 L402.5,805.70 L403.5,805.70 L404.5,805.70 L405.5,805.70 L406.5,805.70 L407.5,805.70 L408.5,805.70 L409.5,805.70 L410.5,805.70 L411.5,805.70 L412.5,805.70 L413.5,805.64 L414.5,780.29 L415.5,721.28 L416.5,664.97 L417.5,654.88 L418.5,654.59 L419.5,655.04 L420.5,655.11 L421.5,654.49 L422.5,654.03 L423.5,654.19 L424.5,654.26 L425.5,654.55 L426.5,655.02 L427.5,655.01 L428.5,654.70 L429.5,654.59 L430.5,654.92 L431.5,654.75 L432.5,654.59 L433.5,656.96 L434.5,702.40 L435.5,770.88 L436.5,805.61 L437.5,805.70 L438.5,805.70 L439.5,805.70 L440.5,805.70 L441.5,805.70 L442.5,805.70 L443.5,805.70 L444.5,805.70 L445.5,805.70 L446.5,805.70 L447.5,805.70 L448.5,805.70 L449.5,805.70 L450.5,805.70 L451.5,805.70 L452.5,805.70 L453.5,805.70 L454.5,805.70 L455.5,805.70 L456.5,804.53 L457.5,767.88 L458.5,705.27 L459.5,658.20 L460.5,654.92 L461.5,654.90 L462.5,654.38 L463.5,654.49 L464.5,654.57 L465.5,655.05 L466.5,655.09 L467.5,655.23 L468.5,654.76 L469.5,654.64 L470.5,654.68 L471.5,654.68 L472.5,654.76 L473.5,654.28 L474.5,654.25 L475.5,654.65 L476.5,678.10 L477.5,725.02 L478.5,771.96 L479.5,803.93 L480.5,805.70 L481.5,805.70 L482.5,805.70 L483.5,805.70 L484.5,805.70 L485.5,805.70 L486.5,805.70 L487.5,805.70 L488.5,805.70 L489.5,805.70 L490.5,805.70 L491.5,805.70 L492.5,805.70 L493.5,805.70 L494.5,805.70 L495.5,805.70 L496.5,805.70 L497.5,805.70 L498.5,805.69 L499.5,797.45 L500.5,749.00 L501.5,697.28 L502.5,657.85 L503.5,655.32 L504.5,654.88 L505.5,654.67 L506.5,654.91 L507.5,655.08 L508.5,654.76 L509.5,654.49 L510.5,654.59 L511.5,654.94 L512.5,654.66 L513.5,654.52 L514.5,654.36 L515.5,654.49 L516.5,654.60 L517.5,655.07 L518.5,659.01 L519.5,705.27 L520.5,755.17 L521.5,801.34 L522.5,805.70 L523.5,805.70 L524.5,805.70 L525.5,805.70 L526.5,805.70 L527.5,805.70 L528.5,805.70 L529.5,805.70 L530.5,805.70 L531.5,805.70 L532.5,805.70 L533.5,805.70 L534.5,805.70 L535.5,805.70 L536.5,805.70 L537.5,805.70 L538.5,805.70 L539.5,805.70 L540.5,805.70 L541.5,805.70 L542.5,805.70 L543.5,805.70 L544.5,805.70 L545.5,805.70 L546.5,805.70 L547.5,805.70 L548.5,805.70 L549.5,805.70 L550.5,805.70 L551.5,805.70 L552.5,805.70 L553.5,805.70 L554.5,805.70 L555.5,805.70 L556.5,805.70 L557.5,805.70 L558.5,805.70 L559.5,805.70 L560.5,805.70 L561.5,805.70 L562.5,805.70 L563.5,805.70 L564.5,805.70 L565.5,805.70 L566.5,805.70 L567.5,805.70 L568.5,805.70 L569.5,805.70 L570.5,805.70 L571.5,805.70 L572.5,805.70 L573.5,805.70 L574.5,805.70 L575.5,805.70 L576.5,805.70 L577.5,805.70 L578.5,805.70 L579.5,805.70 L580.5,805.70 L581.5,805.70 L582.5,805.70 L583.5,805.70 L584.5,805.70 L585.5,805.70 L586.5,805.70 L587.5,805.70 L588.5,805.70 L589.5,805.70 L590.5,805.70 L591.5,805.70 L592.5,805.70 L593.5,805.70 L594.5,805.70 L595.5,805.70 L596.5,805.70 L597.5,805.70 L598.5,805.70 L599.5,805.70 L600.5,805.70 L601.5,805.70 L602.5,805.70 L603.5,805.70 L604.5,805.70 L605.5,805.70 L606.5,805.70 L607.5,805.70 L608.5,805.70 L609.5,805.70 L610.5,805.70 L611.5,805.70 L612.5,805.70 L613.5,805.70 L614.5,805.70 L615.5,805.70 L616.5,805.70 L617.5,805.70 L618.5,805.70 L619.5,805.70 L620.5,805.70 L621.5,805.70 L622.5,805.70 L623.5,805.70 L624.5,805.70 L625.5,805.70 L626.5,805.70 L627.5,802.07 L628.5,758.78 L629.5,707.04 L630.5,659.61 L631.5,655.00 L632.5,654.71 L633.5,654.10 L634.5,653.79 L635.5,653.61 L636.5,653.65 L637.5,653.98 L638.5,654.23 L639.5,654.25 L640.5,653.88 L641.5,653.84 L642.5,654.31 L643.5,654.12 L644.5,654.40 L645.5,654.45 L646.5,654.67 L647.5,654.48 L648.5,654.91 L649.5,655.02 L650.5,654.84 L651.5,654.86 L652.5,655.14 L653.5,681.12 L654.5,725.81 L655.5,770.63 L656.5,803.52 L657.5,805.70 L658.5,805.70 L659.5,805.70 L660.5,805.70 L661.5,805.70 L662.5,805.70 L663.5,805.70 L664.5,805.70 L665.5,805.70 L666.5,805.70 L667.5,805.70 L668.5,805.70 L669.5,805.70 L670.5,801.31 L671.5,748.73 L672.5,686.13 L673.5,654.71 L674.5,654.21 L675.5,654.35 L676.5,654.18 L677.5,654.32 L678.5,654.49 L679.5,654.86 L680.5,654.87 L681.5,654.92 L682.5,654.69 L683.5,654.99 L684.5,654.96 L685.5,655.14 L686.5,655.26 L687.5,655.31 L688.5,655.14 L689.5,655.06 L690.5,654.95 L691.5,654.52 L692.5,657.07 L693.5,696.20 L694.5,748.56 L695.5,796.86 L696.5,805.69 L697.5,805.70 L698.5,805.70 L699.5,805.70 L700.5,805.70 L701.5,805.70 L702.5,805.70 L703.5,805.70 L704.5,805.70 L705.5,805.70 L706.5,805.70 L707.5,805.70 L708.5,805.70 L709.5,805.70 L710.5,805.70 L711.5,805.70 L712.5,803.67 L713.5,763.95 L714.5,703.75 L715.5,658.18 L716.5,654.53 L717.5,654.40 L718.5,654.70 L719.5,654.71 L720.5,654.57 L721.5,654.20 L722.5,653.83 L723.5,653.90 L724.5,654.19 L725.5,654.15 L726.5,654.20 L727.5,654.39 L728.5,654.69 L729.5,654.90 L730.5,654.73 L731.5,654.62 L732.5,654.37 L733.5,654.78 L734.5,654.35 L735.5,654.48 L736.5,654.71 L737.5,654.63 L738.5,674.38 L739.5,720.97 L740.5,768.38 L741.5,803.30 L742.5,805.70 L743.5,805.70 L744.5,805.70 L745.5,805.70 L746.5,805.70 L747.5,805.70 L748.5,805.70 L749.5,805.70 L750.5,805.70 L751.5,805.70 L752.5,805.70 L753.5,805.70 L754.5,805.70 L755.5,803.51 L756.5,762.84 L757.5,702.32 L758.5,657.49 L759.5,654.35 L760.5,654.37 L761.5,654.55 L762.5,654.42 L763.5,654.47 L764.5,654.67 L765.5,654.99 L766.5,655.32 L767.5,655.00 L768.5,655.12 L769.5,654.86 L770.5,654.87 L771.5,654.95 L772.5,654.82 L773.5,654.55 L774.5,654.46 L775.5,657.81 L776.5,702.96 L777.5,763.53 L778.5,803.67 L779.5,805.70 L780.5,805.70 L781.5,805.70 L782.5,804.45 L783.5,791.45 L784.5,778.32 L785.5,783.46 L786.5,798.23 L787.5,805.68 L788.5,805.70 L789.5,805.70 L790.5,805.70 L791.5,805.70 L792.5,805.70 L793.5,805.70 L794.5,805.70 L795.5,805.70 L796.5,805.70 L797.5,805.67 L798.5,789.96 L799.5,732.73 L800.5,674.59 L801.5,654.50 L802.5,654.43 L803.5,654.81 L804.5,655.27 L805.5,655.36 L806.5,654.75 L807.5,654.95 L808.5,654.74 L809.5,654.91 L810.5,654.71 L811.5,654.63 L812.5,654.40 L813.5,654.69 L814.5,655.06 L815.5,654.92 L816.5,654.51 L817.5,657.21 L818.5,692.59 L819.5,739.78 L820.5,785.96 L821.5,805.65 L822.5,805.70 L823.5,805.70 L824.5,805.70 L825.5,805.70 L826.5,805.70 L827.5,805.70 L828.5,805.70 L829.5,805.70 L830.5,805.70 L831.5,805.70 L832.5,805.70 L833.5,805.70 L834.5,805.70 L835.5,805.70 L836.5,805.70 L837.5,805.70 L838.5,805.70 L839.5,805.70 L840.5,805.70 L841.5,805.70 L842.5,805.70 L843.5,805.70 L844.5,805.70 L845.5,805.70 L846.5,805.70 L847.5,805.70 L848.5,805.70 L849.5,805.70 L850.5,805.70 L851.5,805.70 L852.5,805.70 L853.5,805.70 L854.5,805.70 L855.5,805.70 L856.5,805.70 L857.5,805.70 L858.5,805.70 L859.5,805.70 L860.5,805.70 L861.5,805.70 L862.5,805.70 L863.5,805.70 L864.5,805.70 L865.5,805.70 L866.5,805.70 L867.5,805.70 L868.5,805.70 L869.5,805.70 L870.5,805.70 L871.5,805.70 L872.5,805.70 L873.5,805.70 L874.5,805.70 L875.5,805.70 L876.5,805.70 L877.5,805.70 L878.5,805.70 L879.5,805.70 L880.5,805.70 L881.5,805.70 L882.5,805.70 L883.5,805.70 L884.5,805.70 L885.5,805.70 L886.5,805.70 L887.5,805.70 L888.5,805.70 L889.5,805.70 L890.5,805.70 L891.5,805.70 L892.5,805.70 L893.5,805.70 L894.5,805.70 L895.5,805.70 L896.5,805.70 L897.5,805.70 L898.5,805.70 L899.5,805.70 L900.5,805.70 L901.5,805.70 L902.5,805.70 L903.5,805.70 L904.5,805.70 L905.5,805.70 L906.5,805.70 L907.5,805.70 L908.5,805.70 L909.5,805.70 L910.5,805.70 L911.5,805.70 L912.5,805.70 L913.5,805.70 L914.5,805.70 L915.5,805.70 L916.5,805.70 L917.5,805.70 L918.5,805.70 L919.5,805.70 L920.5,805.70 L921.5,805.70 L922.5,805.70 L923.5,805.70 L924.5,805.70 L925.5,805.70 L926.5,801.41 L927.5,755.61 L928.5,705.21 L929.5,659.27 L930.5,654.84 L931.5,655.25 L932.5,654.99 L933.5,654.62 L934.5,654.48 L935.5,654.20 L936.5,654.17 L937.5,654.08 L938.5,654.53 L939.5,654.41 L940.5,654.29 L941.5,654.60 L942.5,654.68 L943.5,654.56 L944.5,655.05 L945.5,655.48 L946.5,655.60 L947.5,655.59 L948.5,658.98 L949.5,697.74 L950.5,744.88 L951.5,790.59 L952.5,805.67 L953.5,805.70 L954.5,805.70 L955.5,805.70 L956.5,805.70 L957.5,805.70 L958.5,805.70 L959.5,805.70 L960.5,805.70 L961.5,805.70 L962.5,805.70 L963.5,805.70 L964.5,805.70 L965.5,805.70 L966.5,805.70 L967.5,805.70 L968.5,805.70 L969.5,800.46 L970.5,744.93 L971.5,684.46 L972.5,653.98 L973.5,653.89 L974.5,653.91 L975.5,653.60 L976.5,653.51 L977.5,653.59 L978.5,653.72 L979.5,654.15 L980.5,654.36 L981.5,654.79 L982.5,654.81 L983.5,654.87 L984.5,654.83 L985.5,654.73 L986.5,654.77 L987.5,654.66 L988.5,654.34 L989.5,675.05 L990.5,736.04 L991.5,794.53 L992.5,805.68 L993.5,805.70 L994.5,805.70 L995.5,805.70 L996.5,805.70 L997.5,805.70 L998.5,805.70 L999.5,805.70 L1000.5,805.70 L1001.5,805.70 L1002.5,805.70 L1003.5,805.70 L1004.5,805.70 L1005.5,805.70 L1006.5,805.70 L1007.5,805.70 L1008.5,805.70 L1009.5,805.70 L1010.5,805.70 L1011.5,805.70 L1012.5,800.64 L1013.5,745.91 L1014.5,685.31 L1015.5,655.02 L1016.5,655.15 L1017.5,655.18 L1018.5,655.11 L1019.5,655.27 L1020.5,655.39 L1021.5,655.08 L1022.5,654.85 L1023.5,655.04 L1024.5,655.20 L1025.5,654.79 L1026.5,654.80 L1027.5,654.94 L1028.5,654.62 L1029.5,654.51 L1030.5,654.14 L1031.5,654.26 L1032.5,654.30 L1033.5,654.36 L1034.5,654.75 L1035.5,655.62 L1036.5,679.72 L1037.5,720.32 L1038.5,760.70 L1039.5,798.97 L1040.5,805.69 L1041.5,805.70 L1042.5,805.70 L1043.5,805.70 L1044.5,805.70 L1045.5,805.70 L1046.5,805.70 L1047.5,805.70 L1048.5,805.70 L1049.5,805.70 L1050.5,805.70 L1051.5,805.70 L1052.5,805.70 L1053.5,805.70 L1054.5,805.70 L1055.5,805.70 L1056.5,805.70 L1057.5,805.70 L1058.5,805.70 L1059.5,805.70 L1060.5,805.70 L1061.5,805.70 L1062.5,805.70 L1063.5,805.70 L1064.5,805.70 L1065.5,805.70 L1066.5,805.70 L1067.5,805.70 L1068.5,805.70 L1069.5,805.70 L1070.5,805.70 L1071.5,805.70 L1072.5,805.70 L1073.5,805.70 L1074.5,805.70 L1075.5,805.70 L1076.5,805.70 L1077.5,805.70 L1078.5,805.70 L1079.5,805.70 L1080.5,805.70 L1081.5,805.70 L1082.5,805.70 L1083.5,805.70 L1084.5,805.70 L1085.5,805.70 L1086.5,805.70 L1087.5,805.70 L1088.5,805.70 L1089.5,805.70 L1090.5,805.70 L1091.5,805.70 L1092.5,805.70 L1093.5,805.70 L1094.5,805.70 L1095.5,805.70 L1096.5,805.70 L1097.5,803.15 L1098.5,767.26 L1099.5,720.12 L1100.5,673.34 L1101.5,654.09 L1102.5,654.18 L1103.5,654.12 L1104.5,654.22 L1105.5,654.33 L1106.5,654.14 L1107.5,653.97 L1108.5,654.01 L1109.5,654.31 L1110.5,654.29 L1111.5,654.15 L1112.5,653.94 L1113.5,653.63 L1114.5,653.58 L1115.5,653.48 L1116.5,653.85 L1117.5,664.15 L1118.5,720.57 L1119.5,780.14 L1120.5,805.64 L1121.5,805.70 L1122.5,805.70 L1123.5,805.70 L1124.5,805.70 L1125.5,805.70 L1126.5,805.70 L1127.5,805.70 L1128.5,805.70 L1129.5,805.70 L1130.5,805.70 L1131.5,805.70 L1132.5,805.70 L1133.5,805.70 L1134.5,805.70 L1135.5,805.70 L1136.5,805.70 L1137.5,805.70 L1138.5,805.70 L1139.5,805.70 L1140.5,805.70 L1141.5,805.70 L1142.5,805.70 L1143.5,805.70 L1144.5,805.70 L1145.5,805.70 L1146.5,805.70 L1147.5,805.70 L1148.5,805.70 L1149.5,805.70 L1150.5,805.70 L1151.5,805.70 L1152.5,805.70 L1153.5,805.70 L1154.5,805.70 L1155.5,805.70 L1156.5,805.70 L1157.5,805.70 L1158.5,805.70 L1159.5,805.70 L1160.5,805.70 L1161.5,805.70 L1162.5,805.70 L1163.5,805.70 L1164.5,805.70 L1165.5,805.70 L1166.5,805.70 L1167.5,805.70 L1168.5,805.70 L1169.5,805.70 L1170.5,805.70 L1171.5,805.70 L1172.5,805.70 L1173.5,805.70 L1174.5,805.70 L1175.5,805.70 L1176.5,805.70 L1177.5,805.70 L1178.5,805.70 L1179.5,805.70 L1180.5,805.70 L1181.5,805.70 L1182.5,805.70 L1183.5,805.70 L1184.5,805.70 L1185.5,805.70 L1186.5,805.70 L1187.5,805.70 L1188.5,805.70 L1189.5,805.70 L1190.5,805.70 L1191.5,805.70 L1192.5,805.70 L1193.5,805.70 L1194.5,805.70 L1195.5,805.70 L1196.5,805.70 L1197.5,805.70 L1198.5,805.70 L1199.5,805.70 L1200.5,805.70 L1201.5,805.70 L1202.5,805.70 L1203.5,805.70 L1204.5,805.70 L1205.5,805.70 L1206.5,805.70 L1207.5,805.70 L1208.5,805.70 L1209.5,805.70 L1210.5,805.70 L1211.5,805.70 L1212.5,805.70 L1213.5,805.70 L1214.5,805.70 L1215.5,805.70 L1216.5,805.69 L1217.5,801.73 L1218.5,779.72 L1219.5,764.33 L1220.5,785.67 L1221.5,804.41 L1222.5,805.70 L1223.5,805.70 L1224.5,805.70 L1225.5,805.70 L1226.5,805.64 L1227.5,780.06 L1228.5,707.38 L1229.5,657.02 L1230.5,654.53 L1231.5,655.00 L1232.5,654.98 L1233.5,654.92 L1234.5,654.88 L1235.5,654.47 L1236.5,654.46 L1237.5,654.40 L1238.5,654.89 L1239.5,655.07 L1240.5,655.07 L1241.5,654.75 L1242.5,654.82 L1243.5,655.06 L1244.5,654.62 L1245.5,654.71 L1246.5,654.92 L1247.5,659.15 L1248.5,709.11 L1249.5,769.21 L1250.5,804.58 L1251.5,805.70 L1252.5,805.70 L1253.5,805.70 L1254.5,805.70 L1255.5,805.70 L1256.5,805.70 L1257.5,805.70 L1258.5,805.70 L1259.5,805.70 L1260.5,805.70 L1261.5,805.70 L1262.5,805.70 L1263.5,805.70 L1264.5,805.70 L1265.5,805.70 L1266.5,805.70 L1267.5,805.70 L1268.5,801.16 L1269.5,753.08 L1270.5,700.72 L1271.5,657.38 L1272.5,654.05 L1273.5,653.82 L1274.5,653.80 L1275.5,654.06 L1276.5,653.81 L1277.5,654.04 L1278.5,654.37 L1279.5,654.54 L1280.5,654.88 L1281.5,654.85 L1282.5,654.71 L1283.5,654.87 L1284.5,654.53 L1285.5,654.45 L1286.5,654.56 L1287.5,654.68 L1288.5,654.87 L1289.5,665.50 L1290.5,706.29 L1291.5,749.37 L1292.5,791.17 L1293.5,805.67 L1294.5,805.70 L1295.5,805.70 L1296.5,805.70 L1297.5,805.70 L1298.5,805.70 L1299.5,805.70 L1300.5,805.70 L1301.5,805.70 L1302.5,805.70 L1303.5,805.70 L1304.5,805.70 L1305.5,805.70 L1306.5,805.70 L1307.5,805.70 L1308.5,805.70 L1309.5,805.70 L1310.5,805.70 L1311.5,804.81 L1312.5,775.35 L1313.5,725.41 L1314.5,675.75 L1315.5,654.71 L1316.5,654.59 L1317.5,655.09 L1318.5,655.39 L1319.5,654.90 L1320.5,654.89 L1321.5,654.98 L1322.5,654.95 L1323.5,655.18 L1324.5,654.89 L1325.5,654.89 L1326.5,655.13 L1327.5,655.39 L1328.5,655.24 L1329.5,655.28 L1330.5,655.17 L1331.5,673.58 L1332.5,716.81 L1333.5,761.31 L1334.5,801.91 L1335.5,805.70 L1336.5,805.70 L1337.5,805.70 L1338.5,805.70 L1339.5,805.70 L1340.5,805.70 L1341.5,805.70 L1342.5,805.70 L1343.5,805.70 L1344.5,805.70 L1345.5,805.70 L1346.5,805.70 L1347.5,805.70 L1348.5,805.70 L1349.5,805.70 L1350.5,805.70 L1351.5,805.70 L1352.5,805.70 L1353.5,805.66 L1354.5,787.73 L1355.5,737.53 L1356.5,685.33 L1357.5,655.19 L1358.5,654.77 L1359.5,655.05 L1360.5,660.96 L1361.5,664.58 L1362.5,664.67 L1363.5,664.65 L1364.5,664.72 L1365.5,664.64 L1366.5,665.04 L1367.5,665.11 L1368.5,664.69 L1369.5,664.57 L1370.5,664.69 L1371.5,665.00 L1372.5,664.93 L1373.5,664.99 L1374.5,668.02 L1375.5,704.63 L1376.5,749.00 L1377.5,791.36 L1378.5,805.67 L1379.5,805.70 L1380.5,805.70 L1381.5,805.70 L1382.5,805.70 L1383.5,805.70 L1384.5,805.70 L1385.5,805.70 L1386.5,805.70 L1387.5,805.70 L1388.5,805.70 L1389.5,805.70 L1390.5,805.70 L1391.5,805.70 L1392.5,805.70 L1393.5,805.70 L1394.5,805.70 L1395.5,805.70 L1396.5,803.37 L1397.5,770.19 L1398.5,726.24 L1399.5,683.11 L1400.5,664.51 L1401.5,664.52 L1402.5,664.89 L1403.5,665.18 L1404.5,665.11 L1405.5,665.04 L1406.5,664.94 L1407.5,664.60 L1408.5,664.87 L1409.5,664.93 L1410.5,664.94 L1411.5,665.02 L1412.5,664.81 L1413.5,665.06 L1414.5,665.04 L1415.5,664.84 L1416.5,665.05 L1417.5,664.83 L1418.5,664.59 L1419.5,664.68 L1420.5,664.68 L1421.5,664.93 L1422.5,681.54 L1423.5,715.06 L1424.5,748.98 L1425.5,782.39 L1426.5,804.51 L1427.5,805.70 L1428.5,805.70 L1429.5,805.70 L1430.5,805.70 L1431.5,805.70 L1432.5,805.70 L1433.5,805.70 L1434.5,805.70 L1435.5,805.70 L1436.5,805.70 L1437.5,805.70 L1438.5,805.70 L1439.5,805.70 L1440.5,805.70 L1441.5,805.70 L1442.5,805.70 L1443.5,805.70 L1444.5,805.70 L1445.5,805.70 L1446.5,805.70 L1447.5,805.70 L1448.5,805.70 L1449.5,805.70 L1450.5,805.70 L1451.5,805.70 L1452.5,805.70 L1453.5,805.70 L1454.5,805.70 L1455.5,805.70 L1456.5,805.70 L1457.5,805.70 L1458.5,805.70 L1459.5,805.70 L1460.5,805.70 L1461.5,805.70 L1462.5,805.70 L1463.5,805.70 L1464.5,805.70 L1465.5,805.70 L1466.5,805.70 L1467.5,805.70 L1468.5,805.70 L1469.5,805.70 L1470.5,805.70 L1471.5,805.70 L1472.5,805.70 L1473.5,805.70 L1474.5,805.70 L1475.5,805.70 L1476.5,805.70 L1477.5,805.70 L1478.5,805.70 L1479.5,805.70 L1480.5,805.70 L1481.5,805.70 L1482.5,805.70 L1483.5,805.70 L1484.5,805.70 L1485.5,805.70 L1486.5,805.70 L1487.5,805.70 L1488.5,805.70 L1489.5,805.70 L1490.5,805.70 L1491.5,805.70 L1492.5,805.70 L1493.5,805.70 L1494.5,805.70 L1495.5,805.70 L1496.5,805.70 L1497.5,805.70 L1498.5,805.70 L1499.5,805.70 L1500.5,805.70 L1501.5,805.70 L1502.5,805.70 L1503.5,805.70 L1504.5,805.70 L1505.5,805.70 L1506.5,805.70 L1507.5,805.70 L1508.5,805.70 L1509.5,805.70 L1510.5,805.70 L1511.5,805.70 L1512.5,805.70 L1513.5,805.70 L1514.5,805.70 L1515.5,805.70 L1516.5,805.70 L1517.5,805.70 L1518.5,805.70 L1519.5,805.70 L1520.5,805.70 L1521.5,805.70 L1522.5,805.70 L1523.5,805.70 L1524.5,805.70 L1525.5,805.70 L1526.5,805.70 L1527.5,805.70 L1528.5,805.70 L1529.5,805.70 L1530.5,805.70 L1531.5,805.70 L1532.5,805.70 L1533.5,805.70 L1534.5,805.70 L1535.5,805.70 L1536.5,805.70 L1537.5,805.70 L1538.5,805.70 L1539.5,805.70 L1540.5,805.70 L1541.5,805.70 L1542.5,805.70 L1543.5,805.70 L1544.5,805.70 L1545.5,805.70 L1546.5,805.70 L1547.5,805.70 L1548.5,805.70 L1549.5,805.70 L1550.5,805.70 L1551.5,805.70 L1552.5,805.70 L1553.5,805.70 L1554.5,805.70 L1555.5,805.70 L1556.5,805.70 L1557.5,805.70 L1558.5,805.70 L1559.5,805.70 L1560.5,805.70 L1561.5,805.70 L1562.5,805.70 L1563.5,805.70 L1564.5,805.70 L1565.5,805.70 L1566.5,805.70 L1567.5,805.70 L1568.5,801.83 L1569.5,755.18 L1570.5,699.11 L1571.5,666.41 L1572.5,665.10 L1573.5,664.93 L1574.5,664.98 L1575.5,664.76 L1576.5,664.31 L1577.5,664.39 L1578.5,665.05 L1579.5,665.13 L1580.5,664.94 L1581.5,664.89 L1582.5,664.78 L1583.5,664.91 L1584.5,665.16 L1585.5,665.30 L1586.5,665.29 L1587.5,665.19 L1588.5,665.43 L1589.5,665.59 L1590.5,665.23 L1591.5,665.09 L1592.5,665.41 L1593.5,665.35 L1594.5,665.21 L1595.5,665.42 L1596.5,665.37 L1597.5,672.62 L1598.5,713.57 L1599.5,757.29 L1600.5,798.41 L1601.5,805.69 L1602.5,805.70 L1603.5,805.70 L1604.5,805.70 L1605.5,805.70 L1606.5,805.70 L1607.5,805.70 L1608.5,805.70 L1609.5,805.70 L1610.5,805.69 L1611.5,796.72 L1612.5,744.12 L1613.5,688.70 L1614.5,665.04 L1615.5,664.87 L1616.5,665.17 L1617.5,665.67 L1618.5,665.66 L1619.5,665.68 L1620.5,665.66 L1621.5,665.44 L1622.5,665.30 L1623.5,665.05 L1624.5,664.71 L1625.5,665.01 L1626.5,664.97 L1627.5,664.67 L1628.5,664.99 L1629.5,665.25 L1630.5,665.13 L1631.5,665.31 L1632.5,665.19 L1633.5,665.23 L1634.5,664.98 L1635.5,664.88 L1636.5,665.25 L1637.5,665.68 L1638.5,672.86 L1639.5,713.43 L1640.5,757.68 L1641.5,798.27 L1642.5,805.69 L1643.5,805.70 L1644.5,805.70 L1645.5,805.70 L1646.5,805.70 L1647.5,805.70 L1648.5,805.70 L1649.5,805.70 L1650.5,805.70 L1651.5,805.70 L1652.5,805.70 L1653.5,804.86 L1654.5,774.86 L1655.5,722.73 L1656.5,674.17 L1657.5,665.74 L1658.5,665.45 L1659.5,665.06 L1660.5,664.98 L1661.5,664.83 L1662.5,665.08 L1663.5,665.17 L1664.5,665.11 L1665.5,665.46 L1666.5,665.21 L1667.5,665.29 L1668.5,664.83 L1669.5,664.96 L1670.5,665.23 L1671.5,665.36 L1672.5,665.58 L1673.5,665.21 L1674.5,665.14 L1675.5,664.62 L1676.5,664.56 L1677.5,664.59 L1678.5,665.15 L1679.5,678.45 L1680.5,716.92 L1681.5,756.84 L1682.5,795.21 L1683.5,805.68 L1684.5,805.70 L1685.5,805.70 L1686.5,805.70 L1687.5,805.70 L1688.5,805.70 L1689.5,805.70 L1690.5,805.70 L1691.5,805.70 L1692.5,805.70 L1693.5,805.70 L1694.5,805.70 L1695.5,805.70 L1696.5,804.72 L1697.5,771.83 L1698.5,715.55 L1699.5,668.10 L1700.5,664.56 L1701.5,664.97 L1702.5,664.92 L1703.5,664.84 L1704.5,664.30 L1705.5,663.96 L1706.5,664.12 L1707.5,664.02 L1708.5,664.43 L1709.5,664.53 L1710.5,664.36 L1711.5,664.51 L1712.5,664.83 L1713.5,664.63 L1714.5,664.35 L1715.5,664.19 L1716.5,683.20 L1717.5,727.96 L1718.5,773.87 L1719.5,804.12 L1720.5,805.70 L1721.5,805.70 L1722.5,805.70 L1723.5,805.70 L1724.5,805.70 L1725.5,805.70 L1726.5,805.70 L1727.5,805.70 L1728.5,805.70 L1729.5,805.70 L1730.5,805.70 L1731.5,805.70 L1732.5,805.70 L1733.5,805.70 L1734.5,805.70 L1735.5,805.70 L1736.5,805.70 L1737.5,805.70 L1738.5,805.70 L1739.5,805.70 L1740.5,805.70 L1741.5,805.70 L1742.5,805.70 L1743.5,805.70 L1744.5,805.70 L1745.5,805.70 L1746.5,805.70 L1747.5,805.70 L1748.5,805.70 L1749.5,805.70 L1750.5,805.70 L1751.5,805.70 L1752.5,805.70 L1753.5,805.70 L1754.5,805.70 L1755.5,805.70 L1756.5,805.70 L1757.5,805.70 L1758.5,805.70 L1759.5,805.70 L1760.5,805.70 L1761.5,805.70 L1762.5,805.70 L1763.5,805.70 L1764.5,805.70 L1765.5,805.70 L1766.5,805.70 L1767.5,805.70 L1768.5,805.70 L1769.5,805.70 L1770.5,805.70 L1771.5,805.70 L1772.5,805.70 L1773.5,805.70 L1774.5,805.70 L1775.5,805.70 L1776.5,805.70 L1777.5,805.70 L1778.5,805.70 L1779.5,805.70 L1780.5,805.70 L1781.5,805.70 L1782.5,805.70 L1783.5,805.70 L1784.5,805.70 L1785.5,805.70 L1786.5,805.70 L1787.5,805.70 L1788.5,805.70 L1789.5,805.70 L1790.5,805.70 L1791.5,805.70 L1792.5,805.70 L1793.5,805.70 L1794.5,805.70 L1795.5,805.70 L1796.5,805.70 L1797.5,805.70 L1798.5,805.70 L1799.5,805.70 L1800.5,805.70 L1801.5,805.70 L1802.5,805.70 L1803.5,805.70 L1804.5,805.70 L1805.5,805.70 L1806.5,805.70 L1807.5,805.70 L1808.5,805.70 L1809.5,805.70 L1810.5,805.70 L1811.5,805.70 L1812.5,805.70 L1813.5,805.70 L1814.5,805.70 L1815.5,805.70 L1816.5,805.70 L1817.5,805.70 L1818.5,805.70 L1819.5,805.70 L1820.5,805.70 L1821.5,805.70 L1822.5,805.70 L1823.5,805.70 L1824.5,805.67 L1825.5,791.71 L1826.5,738.06 L1827.5,683.62 L1828.5,664.83 L1829.5,664.56 L1830.5,664.32 L1831.5,664.39 L1832.5,664.36 L1833.5,664.37 L1834.5,664.12 L1835.5,664.50 L1836.5,664.43 L1837.5,664.29 L1838.5,664.59 L1839.5,664.38 L1840.5,664.50 L1841.5,664.68 L1842.5,664.41 L1843.5,664.45 L1844.5,664.57 L1845.5,664.72 L1846.5,665.70 L1847.5,689.51 L1848.5,729.28 L1849.5,769.42 L1850.5,802.89 L1851.5,805.70 L1852.5,805.70 L1853.5,805.70 L1854.5,805.70 L1855.5,805.70 L1856.5,805.70 L1857.5,805.70 L1858.5,805.70 L1859.5,805.70 L1860.5,805.70 L1861.5,805.70 L1862.5,805.70 L1863.5,805.70 L1864.5,805.70 L1865.5,805.70 L1866.5,805.66 L1867.5,789.60 L1868.5,752.48 L1869.5,714.48 L1870.5,677.91 L1871.5,664.85 L1872.5,664.72 L1873.5,664.79 L1874.5,664.73 L1875.5,665.06 L1876.5,665.28 L1877.5,665.15 L1878.5,665.36" stroke="#1e2f73"/></g>
<g stroke="#000" stroke-width="1.2" fill="none">
<line x1="99.5" x2="99.5" y1="441" y2="812"/>
<line x1="93" x2="99.5" y1="441.5" y2="441.5"/>
<line x1="99" x2="1879.5" y1="806.5" y2="806.5"/>
<line x1="1879" x2="1879" y1="806" y2="812"/>
<line x1="93" x2="99.5" y1="806.60" y2="806.60"/><line x1="93" x2="99.5" y1="770.88" y2="770.88"/><line x1="93" x2="99.5" y1="735.16" y2="735.16"/><line x1="93" x2="99.5" y1="699.44" y2="699.44"/><line x1="93" x2="99.5" y1="663.72" y2="663.72"/><line x1="93" x2="99.5" y1="628.00" y2="628.00"/><line x1="93" x2="99.5" y1="592.28" y2="592.28"/><line x1="93" x2="99.5" y1="556.56" y2="556.56"/><line x1="93" x2="99.5" y1="520.84" y2="520.84"/><line x1="93" x2="99.5" y1="485.12" y2="485.12"/><line x1="93" x2="99.5" y1="449.40" y2="449.40"/><line x1="275.85" x2="275.85" y1="806" y2="811.5"/><line x1="575.14" x2="575.14" y1="806" y2="811.5"/><line x1="874.43" x2="874.43" y1="806" y2="811.5"/><line x1="1173.72" x2="1173.72" y1="806" y2="811.5"/><line x1="1473.02" x2="1473.02" y1="806" y2="811.5"/><line x1="1772.31" x2="1772.31" y1="806" y2="811.5"/></g>
<g font-family="Liberation Sans, sans-serif" font-size="10" fill="#111" text-anchor="end"><text x="90" y="810.20">0</text><text x="90" y="774.48">200</text><text x="90" y="738.76">400</text><text x="90" y="703.04">600</text><text x="90" y="667.32">800</text><text x="90" y="631.60">1,000</text><text x="90" y="595.88">1,200</text><text x="90" y="560.16">1,400</text><text x="90" y="524.44">1,600</text><text x="90" y="488.72">1,800</text><text x="90" y="453.00">2,000</text></g>
<g font-family="Liberation Sans, sans-serif" font-size="10" fill="#111" text-anchor="middle"><text x="275.85" y="822">Apr 21</text><text x="575.14" y="822">Apr 28</text><text x="874.43" y="822">May 05</text><text x="1173.72" y="822">May 12</text><text x="1473.02" y="822">May 19</text><text x="1772.31" y="822">May 26</text></g>
<text x="0" y="0" transform="translate(39.7,623.5) rotate(-90)" font-family="Liberation Sans, sans-serif" font-weight="bold" font-size="15.7" fill="#111" text-anchor="middle">Active Power [W]</text>
<rect x="99" y="837" width="1779" height="58.5" fill="#d3d3d3"/>
<g fill="none" stroke-width="1.7" stroke-linejoin="round" clip-path="url(#cn)"><path d="M99.5,888.83 L102.5,888.83 L105.5,888.83 L108.5,888.83 L111.5,888.83 L114.5,888.83 L117.5,886.12 L120.5,876.01 L123.5,863.08 L126.5,865.27 L129.5,859.48 L132.5,861.01 L135.5,873.93 L138.5,876.30 L141.5,881.75 L144.5,888.83 L147.5,888.83 L150.5,888.83 L153.5,888.83 L156.5,888.83 L159.5,881.33 L162.5,874.40 L165.5,868.93 L168.5,867.52 L171.5,868.32 L174.5,870.56 L177.5,875.86 L180.5,883.67 L183.5,888.83 L186.5,888.83 L189.5,888.83 L192.5,888.83 L195.5,888.83 L198.5,888.83 L201.5,888.83 L204.5,880.89 L207.5,876.26 L210.5,876.16 L213.5,885.08 L216.5,884.74 L219.5,888.81 L222.5,888.83 L225.5,888.83 L228.5,888.83 L231.5,888.83 L234.5,888.83 L237.5,888.83 L240.5,888.83 L243.5,888.83 L246.5,888.83 L249.5,888.83 L252.5,888.83 L255.5,888.83 L258.5,888.83 L261.5,888.83 L264.5,888.83 L267.5,888.83 L270.5,888.83 L273.5,888.83 L276.5,888.83 L279.5,888.83 L282.5,888.83 L285.5,888.83 L288.5,888.83 L291.5,888.83 L294.5,888.83 L297.5,888.83 L300.5,888.83 L303.5,888.83 L306.5,888.83 L309.5,888.83 L312.5,888.83 L315.5,888.83 L318.5,888.83 L321.5,888.83 L324.5,888.83 L327.5,888.83 L330.5,884.88 L333.5,874.53 L336.5,871.49 L339.5,870.38 L342.5,870.91 L345.5,869.66 L348.5,870.37 L351.5,874.46 L354.5,879.68 L357.5,888.83 L360.5,888.83 L363.5,888.83 L366.5,888.83 L369.5,888.83 L372.5,888.83 L375.5,879.54 L378.5,876.16 L381.5,876.25 L384.5,880.94 L387.5,888.13 L390.5,887.75 L393.5,888.82 L396.5,888.83 L399.5,888.83 L402.5,888.83 L405.5,888.83 L408.5,888.83 L411.5,888.83 L414.5,888.83 L417.5,879.11 L420.5,874.53 L423.5,874.53 L426.5,874.53 L429.5,874.19 L432.5,875.30 L435.5,888.83 L438.5,888.83 L441.5,888.83 L444.5,888.83 L447.5,888.83 L450.5,888.83 L453.5,888.83 L456.5,888.83 L459.5,882.43 L462.5,875.40 L465.5,875.22 L468.5,872.93 L471.5,869.29 L474.5,875.29 L477.5,888.83 L480.5,888.83 L483.5,888.83 L486.5,888.83 L489.5,888.83 L492.5,888.83 L495.5,888.83 L498.5,888.83 L501.5,888.83 L504.5,875.40 L507.5,872.40 L510.5,872.63 L513.5,885.82 L516.5,888.83 L519.5,888.83 L522.5,888.83 L525.5,888.83 L528.5,888.83 L531.5,888.83 L534.5,888.83 L537.5,888.83 L540.5,888.83 L543.5,888.83 L546.5,888.83 L549.5,888.83 L552.5,888.83 L555.5,888.83 L558.5,888.83 L561.5,888.83 L564.5,888.83 L567.5,888.83 L570.5,888.83 L573.5,888.83 L576.5,888.83 L579.5,888.83 L582.5,888.83 L585.5,888.83 L588.5,888.83 L591.5,888.83 L594.5,888.83 L597.5,888.83 L600.5,888.83 L603.5,888.83 L606.5,888.83 L609.5,888.83 L612.5,888.83 L615.5,888.83 L618.5,888.83 L621.5,888.83 L624.5,888.83 L627.5,888.83 L630.5,883.57 L633.5,875.14 L636.5,875.11 L639.5,875.09 L642.5,875.06 L645.5,875.03 L648.5,879.29 L651.5,888.83 L654.5,888.83 L657.5,888.83 L660.5,888.83 L663.5,888.83 L666.5,888.83 L669.5,888.83 L672.5,881.52 L675.5,876.25 L678.5,876.19 L681.5,876.13 L684.5,872.74 L687.5,868.87 L690.5,868.31 L693.5,883.63 L696.5,885.57 L699.5,885.57 L702.5,885.57 L705.5,885.57 L708.5,885.57 L711.5,885.57 L714.5,882.12 L717.5,871.81 L720.5,872.31 L723.5,872.55 L726.5,872.54 L729.5,872.53 L732.5,872.52 L735.5,872.52 L738.5,872.51 L741.5,872.50 L744.5,872.49 L747.5,872.48 L750.5,872.47 L753.5,872.46 L756.5,872.45 L759.5,872.44 L762.5,869.81 L765.5,872.56 L768.5,872.56 L771.5,872.56 L774.5,872.56 L777.5,872.56 L780.5,872.56 L783.5,872.56 L786.5,872.56 L789.5,872.56 L792.5,872.56 L795.5,872.56 L798.5,872.56 L801.5,872.52 L804.5,872.43 L807.5,872.35 L810.5,872.27 L813.5,872.19 L816.5,872.17 L819.5,872.20 L822.5,872.23 L825.5,872.25 L828.5,872.28 L831.5,872.31 L834.5,872.33 L837.5,872.36 L840.5,872.39 L843.5,872.41 L846.5,872.44 L849.5,880.74 L852.5,885.48 L855.5,882.84 L858.5,885.48 L861.5,885.48 L864.5,885.48 L867.5,885.48 L870.5,885.48 L873.5,885.48 L876.5,885.48 L879.5,885.48 L882.5,885.48 L885.5,885.48 L888.5,885.48 L891.5,885.48 L894.5,885.48 L897.5,885.48 L900.5,885.48 L903.5,885.48 L906.5,885.48 L909.5,885.48 L912.5,885.48 L915.5,885.48 L918.5,885.48 L921.5,885.48 L924.5,885.48 L927.5,884.85 L930.5,875.39 L933.5,872.56 L936.5,872.56 L939.5,872.56 L942.5,872.56 L945.5,872.56 L948.5,876.40 L951.5,885.48 L954.5,885.48 L957.5,885.48 L960.5,885.48 L963.5,885.48 L966.5,885.48 L969.5,885.48 L972.5,877.40 L975.5,872.59 L978.5,872.66 L981.5,872.72 L984.5,869.29 L987.5,871.33 L990.5,886.65 L993.5,887.77 L996.5,888.88 L999.5,888.92 L1002.5,888.92 L1005.5,888.92 L1008.5,888.92 L1011.5,888.92 L1014.5,883.04 L1017.5,874.53 L1020.5,874.53 L1023.5,874.53 L1026.5,874.53 L1029.5,874.53 L1032.5,874.53 L1035.5,874.53 L1038.5,874.53 L1041.5,874.53 L1044.5,874.53 L1047.5,874.53 L1050.5,874.53 L1053.5,874.53 L1056.5,874.53 L1059.5,874.53 L1062.5,874.53 L1065.5,874.53 L1068.5,874.53 L1071.5,874.53 L1074.5,874.53 L1077.5,874.53 L1080.5,874.53 L1083.5,874.50 L1086.5,874.34 L1089.5,874.17 L1092.5,874.01 L1095.5,874.01 L1098.5,874.18 L1101.5,874.35 L1104.5,874.52 L1107.5,878.00 L1110.5,886.46 L1113.5,888.72 L1116.5,888.72 L1119.5,888.72 L1122.5,888.73 L1125.5,888.73 L1128.5,888.73 L1131.5,888.74 L1134.5,888.74 L1137.5,888.74 L1140.5,888.74 L1143.5,888.75 L1146.5,888.75 L1149.5,888.75 L1152.5,888.76 L1155.5,888.76 L1158.5,888.76 L1161.5,888.77 L1164.5,888.77 L1167.5,888.77 L1170.5,888.77 L1173.5,888.78 L1176.5,888.78 L1179.5,888.78 L1182.5,888.79 L1185.5,888.79 L1188.5,888.79 L1191.5,888.79 L1194.5,888.80 L1197.5,888.80 L1200.5,888.80 L1203.5,888.81 L1206.5,888.81 L1209.5,888.81 L1212.5,888.82 L1215.5,888.82 L1218.5,888.82 L1221.5,888.82 L1224.5,888.83 L1227.5,886.08 L1230.5,876.10 L1233.5,875.94 L1236.5,875.77 L1239.5,875.61 L1242.5,875.24 L1245.5,875.45 L1248.5,884.68 L1251.5,887.12 L1254.5,887.09 L1257.5,887.06 L1260.5,887.03 L1263.5,886.99 L1266.5,886.96 L1269.5,883.34 L1272.5,872.53 L1275.5,861.72 L1278.5,839.10 L1281.5,838.78 L1284.5,843.24 L1287.5,859.06 L1290.5,874.73 L1293.5,882.08 L1296.5,882.08 L1299.5,882.08 L1302.5,882.08 L1305.5,882.08 L1308.5,882.08 L1311.5,882.08 L1314.5,870.97 L1317.5,865.86 L1320.5,867.44 L1323.5,867.68 L1326.5,865.17 L1329.5,864.42 L1332.5,868.06 L1335.5,873.76 L1338.5,878.78 L1341.5,885.77 L1344.5,885.77 L1347.5,885.77 L1350.5,885.77 L1353.5,885.77 L1356.5,879.28 L1359.5,870.66 L1362.5,870.01 L1365.5,865.16 L1368.5,870.42 L1371.5,871.00 L1374.5,871.05 L1377.5,879.18 L1380.5,888.72 L1383.5,888.74 L1386.5,888.76 L1389.5,888.78 L1392.5,888.80 L1395.5,888.81 L1398.5,886.90 L1401.5,877.28 L1404.5,874.39 L1407.5,874.39 L1410.5,874.39 L1413.5,874.39 L1416.5,874.39 L1419.5,874.39 L1422.5,874.39 L1425.5,884.29 L1428.5,888.92 L1431.5,888.92 L1434.5,888.92 L1437.5,888.92 L1440.5,888.92 L1443.5,888.92 L1446.5,888.92 L1449.5,888.92 L1452.5,888.92 L1455.5,888.92 L1458.5,888.92 L1461.5,888.92 L1464.5,888.92 L1467.5,888.92 L1470.5,888.92 L1473.5,888.92 L1476.5,888.92 L1479.5,888.92 L1482.5,888.92 L1485.5,888.92 L1488.5,888.92 L1491.5,888.92 L1494.5,888.92 L1497.5,885.65 L1500.5,888.91 L1503.5,888.91 L1506.5,888.91 L1509.5,888.90 L1512.5,888.90 L1515.5,888.90 L1518.5,888.89 L1521.5,888.89 L1524.5,888.88 L1527.5,888.88 L1530.5,888.88 L1533.5,888.87 L1536.5,888.87 L1539.5,888.87 L1542.5,888.86 L1545.5,888.86 L1548.5,888.86 L1551.5,888.85 L1554.5,888.85 L1557.5,888.84 L1560.5,888.84 L1563.5,888.84 L1566.5,888.83 L1569.5,887.39 L1572.5,876.58 L1575.5,871.58 L1578.5,869.45 L1581.5,872.56 L1584.5,872.46 L1587.5,872.71 L1590.5,880.73 L1593.5,888.83 L1596.5,888.83 L1599.5,888.83 L1602.5,888.83 L1605.5,888.83 L1608.5,888.83 L1611.5,888.43 L1614.5,876.31 L1617.5,872.55 L1620.5,872.44 L1623.5,878.54 L1626.5,889.17 L1629.5,877.58 L1632.5,868.25 L1635.5,868.20 L1638.5,872.68 L1641.5,888.23 L1644.5,888.83 L1647.5,888.83 L1650.5,888.83 L1653.5,888.83 L1656.5,880.14 L1659.5,873.04 L1662.5,871.48 L1665.5,872.19 L1668.5,875.00 L1671.5,883.06 L1674.5,888.83 L1677.5,888.83 L1680.5,888.83 L1683.5,888.83 L1686.5,888.83 L1689.5,888.83 L1692.5,888.83 L1695.5,888.83 L1698.5,887.37 L1701.5,876.40 L1704.5,875.26 L1707.5,875.21 L1710.5,875.16 L1713.5,875.11 L1716.5,884.01 L1719.5,888.83 L1722.5,888.83 L1725.5,888.83 L1728.5,888.83 L1731.5,888.83 L1734.5,888.83 L1737.5,888.83 L1740.5,888.83 L1743.5,888.83 L1746.5,888.83 L1749.5,888.83 L1752.5,888.83 L1755.5,888.83 L1758.5,888.83 L1761.5,888.83 L1764.5,888.83 L1767.5,888.83 L1770.5,888.83 L1773.5,888.83 L1776.5,888.83 L1779.5,888.83 L1782.5,888.83 L1785.5,888.83 L1788.5,888.83 L1791.5,888.83 L1794.5,888.83 L1797.5,888.83 L1800.5,888.83 L1803.5,888.83 L1806.5,888.83 L1809.5,888.83 L1812.5,888.83 L1815.5,888.83 L1818.5,888.83 L1821.5,888.83 L1824.5,888.83 L1827.5,880.91 L1830.5,875.02 L1833.5,867.69 L1836.5,871.24 L1839.5,875.10 L1842.5,875.27 L1845.5,883.97 L1848.5,888.83 L1851.5,888.83 L1854.5,888.83 L1857.5,888.83 L1860.5,888.83 L1863.5,888.83 L1866.5,888.83 L1869.5,884.51 L1872.5,876.25 L1875.5,879.38 L1878.5,878.71" stroke="#137b3b"/><path d="M99.5,888.11 L102.5,888.11 L105.5,888.11 L108.5,888.11 L111.5,888.11 L114.5,888.11 L117.5,879.29 L120.5,871.87 L123.5,871.87 L126.5,871.87 L129.5,871.87 L132.5,871.87 L135.5,876.26 L138.5,881.02 L141.5,885.43 L144.5,888.11 L147.5,888.11 L150.5,888.11 L153.5,888.11 L156.5,888.11 L159.5,884.47 L162.5,874.52 L165.5,871.87 L168.5,871.87 L171.5,871.87 L174.5,871.87 L177.5,876.51 L180.5,886.46 L183.5,888.11 L186.5,888.11 L189.5,888.11 L192.5,888.11 L195.5,888.11 L198.5,888.11 L201.5,888.11 L204.5,877.81 L207.5,871.87 L210.5,871.87 L213.5,871.87 L216.5,871.87 L219.5,871.87 L222.5,881.02 L225.5,882.91 L228.5,888.11 L231.5,888.11 L234.5,888.11 L237.5,888.11 L240.5,888.11 L243.5,888.11 L246.5,888.11 L249.5,888.11 L252.5,888.11 L255.5,888.11 L258.5,888.11 L261.5,888.11 L264.5,888.11 L267.5,888.11 L270.5,888.11 L273.5,888.11 L276.5,888.11 L279.5,888.11 L282.5,888.11 L285.5,888.11 L288.5,888.11 L291.5,888.11 L294.5,888.11 L297.5,888.11 L300.5,888.11 L303.5,888.11 L306.5,888.11 L309.5,888.11 L312.5,888.11 L315.5,888.11 L318.5,888.11 L321.5,888.11 L324.5,888.11 L327.5,888.11 L330.5,888.11 L333.5,883.02 L336.5,872.84 L339.5,872.16 L342.5,872.16 L345.5,872.16 L348.5,872.89 L351.5,881.02 L354.5,881.02 L357.5,881.02 L360.5,881.02 L363.5,881.02 L366.5,881.02 L369.5,881.02 L372.5,881.02 L375.5,874.34 L378.5,871.87 L381.5,871.87 L384.5,871.87 L387.5,871.87 L390.5,871.87 L393.5,880.26 L396.5,884.76 L399.5,888.11 L402.5,888.11 L405.5,888.11 L408.5,888.11 L411.5,888.11 L414.5,888.11 L417.5,885.51 L420.5,880.31 L423.5,874.49 L426.5,871.87 L429.5,871.87 L432.5,871.87 L435.5,881.02 L438.5,881.02 L441.5,885.55 L444.5,888.11 L447.5,888.11 L450.5,888.11 L453.5,888.11 L456.5,888.11 L459.5,888.11 L462.5,880.31 L465.5,880.31 L468.5,880.31 L471.5,880.31 L474.5,880.31 L477.5,884.99 L480.5,888.11 L483.5,888.11 L486.5,888.11 L489.5,888.11 L492.5,888.11 L495.5,888.11 L498.5,888.11 L501.5,888.11 L504.5,881.53 L507.5,872.00 L510.5,877.41 L513.5,880.31 L516.5,880.31 L519.5,885.84 L522.5,888.11 L525.5,888.11 L528.5,888.11 L531.5,888.11 L534.5,888.11 L537.5,888.11 L540.5,888.11 L543.5,888.11 L546.5,888.11 L549.5,888.11 L552.5,888.11 L555.5,888.11 L558.5,888.11 L561.5,888.11 L564.5,888.11 L567.5,888.11 L570.5,888.11 L573.5,888.11 L576.5,888.11 L579.5,888.11 L582.5,888.11 L585.5,888.11 L588.5,888.11 L591.5,888.11 L594.5,888.11 L597.5,888.11 L600.5,888.11 L603.5,888.11 L606.5,888.11 L609.5,888.11 L612.5,888.11 L615.5,888.11 L618.5,888.11 L621.5,888.11 L624.5,888.11 L627.5,888.11 L630.5,882.48 L633.5,872.53 L636.5,871.87 L639.5,871.87 L642.5,871.87 L645.5,871.87 L648.5,876.18 L651.5,886.13 L654.5,888.11 L657.5,888.11 L660.5,888.11 L663.5,888.11 L666.5,888.11 L669.5,888.11 L672.5,884.21 L675.5,874.97 L678.5,871.87 L681.5,871.87 L684.5,871.87 L687.5,871.87 L690.5,873.19 L693.5,886.36 L696.5,888.11 L699.5,888.11 L702.5,888.11 L705.5,888.11 L708.5,888.11 L711.5,888.11 L714.5,884.05 L717.5,871.87 L720.5,871.87 L723.5,871.87 L726.5,871.87 L729.5,871.87 L732.5,871.87 L735.5,880.16 L738.5,880.88 L741.5,880.88 L744.5,880.88 L747.5,880.88 L750.5,880.88 L753.5,880.88 L756.5,880.88 L759.5,879.08 L762.5,871.87 L765.5,871.87 L768.5,871.87 L771.5,871.87 L774.5,871.87 L777.5,880.88 L780.5,880.88 L783.5,880.88 L786.5,880.88 L789.5,880.88 L792.5,880.88 L795.5,880.88 L798.5,880.88 L801.5,880.88 L804.5,873.11 L807.5,871.87 L810.5,871.87 L813.5,871.87 L816.5,871.87 L819.5,875.81 L822.5,880.82 L825.5,880.82 L828.5,880.82 L831.5,880.82 L834.5,880.82 L837.5,880.82 L840.5,880.82 L843.5,880.82 L846.5,880.82 L849.5,886.13 L852.5,888.20 L855.5,886.86 L858.5,888.20 L861.5,888.20 L864.5,888.20 L867.5,888.20 L870.5,888.20 L873.5,888.20 L876.5,888.20 L879.5,888.20 L882.5,888.20 L885.5,888.20 L888.5,888.20 L891.5,888.20 L894.5,888.20 L897.5,888.20 L900.5,888.20 L903.5,888.20 L906.5,888.20 L909.5,888.20 L912.5,888.20 L915.5,888.20 L918.5,888.20 L921.5,888.20 L924.5,888.20 L927.5,888.20 L930.5,875.95 L933.5,871.87 L936.5,871.87 L939.5,871.87 L942.5,871.87 L945.5,871.87 L948.5,877.86 L951.5,888.20 L954.5,888.20 L957.5,888.20 L960.5,888.20 L963.5,888.20 L966.5,888.20 L969.5,888.20 L972.5,880.49 L975.5,871.91 L978.5,872.72 L981.5,875.70 L984.5,875.70 L987.5,875.70 L990.5,884.57 L993.5,884.57 L996.5,887.92 L999.5,888.06 L1002.5,888.06 L1005.5,888.06 L1008.5,888.06 L1011.5,888.06 L1014.5,882.84 L1017.5,875.00 L1020.5,871.87 L1023.5,871.87 L1026.5,871.87 L1029.5,871.87 L1032.5,873.00 L1035.5,880.91 L1038.5,880.91 L1041.5,880.91 L1044.5,880.91 L1047.5,880.91 L1050.5,880.91 L1053.5,880.91 L1056.5,880.91 L1059.5,879.78 L1062.5,871.87 L1065.5,871.87 L1068.5,871.87 L1071.5,871.87 L1074.5,871.87 L1077.5,880.91 L1080.5,880.91 L1083.5,880.91 L1086.5,880.91 L1089.5,880.91 L1092.5,880.91 L1095.5,880.91 L1098.5,880.91 L1101.5,880.61 L1104.5,871.87 L1107.5,871.87 L1110.5,871.87 L1113.5,871.87 L1116.5,871.87 L1119.5,875.94 L1122.5,882.00 L1125.5,888.11 L1128.5,888.11 L1131.5,888.11 L1134.5,888.11 L1137.5,888.11 L1140.5,888.11 L1143.5,888.11 L1146.5,888.11 L1149.5,888.11 L1152.5,888.11 L1155.5,888.11 L1158.5,888.11 L1161.5,888.11 L1164.5,888.11 L1167.5,888.11 L1170.5,888.11 L1173.5,888.11 L1176.5,888.11 L1179.5,888.11 L1182.5,888.11 L1185.5,888.11 L1188.5,888.11 L1191.5,888.11 L1194.5,888.11 L1197.5,888.11 L1200.5,888.11 L1203.5,888.11 L1206.5,888.11 L1209.5,888.11 L1212.5,888.11 L1215.5,888.11 L1218.5,888.11 L1221.5,888.11 L1224.5,888.11 L1227.5,885.51 L1230.5,875.74 L1233.5,872.16 L1236.5,872.16 L1239.5,872.16 L1242.5,872.16 L1245.5,872.16 L1248.5,883.67 L1251.5,888.06 L1254.5,888.06 L1257.5,888.06 L1260.5,888.06 L1263.5,888.06 L1266.5,888.06 L1269.5,888.06 L1272.5,878.81 L1275.5,871.87 L1278.5,871.87 L1281.5,871.87 L1284.5,871.87 L1287.5,871.87 L1290.5,880.66 L1293.5,888.20 L1296.5,888.20 L1299.5,888.20 L1302.5,888.20 L1305.5,888.20 L1308.5,888.20 L1311.5,888.20 L1314.5,880.58 L1317.5,871.87 L1320.5,871.87 L1323.5,871.87 L1326.5,871.87 L1329.5,871.87 L1332.5,881.14 L1335.5,888.20 L1338.5,888.20 L1341.5,888.20 L1344.5,888.20 L1347.5,888.20 L1350.5,888.20 L1353.5,888.20 L1356.5,881.14 L1359.5,871.89 L1362.5,871.94 L1365.5,871.99 L1368.5,872.05 L1371.5,872.10 L1374.5,872.15 L1377.5,884.73 L1380.5,888.20 L1383.5,888.20 L1386.5,888.20 L1389.5,888.20 L1392.5,888.20 L1395.5,888.20 L1398.5,886.02 L1401.5,875.14 L1404.5,871.87 L1407.5,871.87 L1410.5,871.87 L1413.5,871.87 L1416.5,871.87 L1419.5,880.55 L1422.5,880.91 L1425.5,885.82 L1428.5,888.11 L1431.5,888.11 L1434.5,888.11 L1437.5,888.11 L1440.5,888.11 L1443.5,888.11 L1446.5,888.11 L1449.5,888.11 L1452.5,888.11 L1455.5,888.11 L1458.5,888.11 L1461.5,888.11 L1464.5,888.11 L1467.5,888.11 L1470.5,888.11 L1473.5,888.11 L1476.5,888.11 L1479.5,888.11 L1482.5,888.11 L1485.5,888.11 L1488.5,888.11 L1491.5,888.11 L1494.5,888.11 L1497.5,888.11 L1500.5,888.11 L1503.5,888.11 L1506.5,888.11 L1509.5,888.11 L1512.5,888.11 L1515.5,888.11 L1518.5,888.11 L1521.5,888.11 L1524.5,888.11 L1527.5,888.11 L1530.5,884.34 L1533.5,880.25 L1536.5,880.25 L1539.5,880.25 L1542.5,880.25 L1545.5,880.25 L1548.5,888.11 L1551.5,888.11 L1554.5,888.11 L1557.5,888.11 L1560.5,888.11 L1563.5,888.11 L1566.5,888.11 L1569.5,888.11 L1572.5,874.05 L1575.5,872.04 L1578.5,872.04 L1581.5,872.04 L1584.5,872.04 L1587.5,872.04 L1590.5,878.07 L1593.5,880.91 L1596.5,880.91 L1599.5,885.00 L1602.5,888.11 L1605.5,888.11 L1608.5,888.11 L1611.5,888.11 L1614.5,883.20 L1617.5,872.04 L1620.5,872.04 L1623.5,872.04 L1626.5,872.04 L1629.5,872.04 L1632.5,880.91 L1635.5,880.91 L1638.5,881.13 L1641.5,887.89 L1644.5,888.11 L1647.5,888.11 L1650.5,888.11 L1653.5,888.11 L1656.5,887.45 L1659.5,872.04 L1662.5,872.04 L1665.5,872.04 L1668.5,872.04 L1671.5,873.99 L1674.5,880.93 L1677.5,888.11 L1680.5,888.11 L1683.5,888.11 L1686.5,888.11 L1689.5,888.11 L1692.5,888.11 L1695.5,888.11 L1698.5,886.38 L1701.5,873.34 L1704.5,872.04 L1707.5,872.04 L1710.5,872.04 L1713.5,872.04 L1716.5,878.07 L1719.5,888.11 L1722.5,888.11 L1725.5,888.11 L1728.5,888.11 L1731.5,888.11 L1734.5,888.11 L1737.5,888.11 L1740.5,888.11 L1743.5,888.11 L1746.5,888.11 L1749.5,888.11 L1752.5,888.11 L1755.5,888.11 L1758.5,888.11 L1761.5,888.11 L1764.5,888.11 L1767.5,888.11 L1770.5,888.11 L1773.5,888.11 L1776.5,888.11 L1779.5,888.11 L1782.5,888.11 L1785.5,888.11 L1788.5,888.11 L1791.5,888.11 L1794.5,888.11 L1797.5,888.11 L1800.5,888.11 L1803.5,888.11 L1806.5,888.11 L1809.5,888.11 L1812.5,888.11 L1815.5,888.11 L1818.5,888.11 L1821.5,888.11 L1824.5,888.11 L1827.5,878.56 L1830.5,872.04 L1833.5,872.04 L1836.5,872.04 L1839.5,872.04 L1842.5,872.04 L1845.5,874.27 L1848.5,887.67 L1851.5,888.11 L1854.5,888.11 L1857.5,888.11 L1860.5,888.11 L1863.5,888.11 L1866.5,888.11 L1869.5,882.85 L1872.5,871.83 L1875.5,871.60 L1878.5,871.83" stroke="#3f5b5b"/><path d="M99.5,893.52 L102.5,893.52 L105.5,893.52 L108.5,893.52 L111.5,893.52 L114.5,893.52 L117.5,893.52 L120.5,893.52 L123.5,893.52 L126.5,893.52 L129.5,893.52 L132.5,893.52 L135.5,893.52 L138.5,893.52 L141.5,893.52 L144.5,893.52 L147.5,893.52 L150.5,893.52 L153.5,893.52 L156.5,893.52 L159.5,893.52 L162.5,893.52 L165.5,893.52 L168.5,893.52 L171.5,893.52 L174.5,893.52 L177.5,893.52 L180.5,893.52 L183.5,893.52 L186.5,893.52 L189.5,893.52 L192.5,893.52 L195.5,893.52 L198.5,893.52 L201.5,893.52 L204.5,893.52 L207.5,893.52 L210.5,893.52 L213.5,893.52 L216.5,893.52 L219.5,893.52 L222.5,893.52 L225.5,893.52 L228.5,893.52 L231.5,893.52 L234.5,893.52 L237.5,893.52 L240.5,893.52 L243.5,893.52 L246.5,893.52 L249.5,893.52 L252.5,893.52 L255.5,893.52 L258.5,893.52 L261.5,893.52 L264.5,893.52 L267.5,893.52 L270.5,893.52 L273.5,893.52 L276.5,893.52 L279.5,893.52 L282.5,893.52 L285.5,893.52 L288.5,893.52 L291.5,893.52 L294.5,893.52 L297.5,893.52 L300.5,893.52 L303.5,893.52 L306.5,893.52 L309.5,893.52 L312.5,893.52 L315.5,893.52 L318.5,893.52 L321.5,893.52 L324.5,893.52 L327.5,893.52 L330.5,893.52 L333.5,886.94 L336.5,880.34 L339.5,880.31 L342.5,880.28 L345.5,880.23 L348.5,880.83 L351.5,891.71 L354.5,893.52 L357.5,893.52 L360.5,893.52 L363.5,893.52 L366.5,893.52 L369.5,893.52 L372.5,893.52 L375.5,893.52 L378.5,893.52 L381.5,893.52 L384.5,893.52 L387.5,893.52 L390.5,893.52 L393.5,893.52 L396.5,893.52 L399.5,893.52 L402.5,893.52 L405.5,893.52 L408.5,893.52 L411.5,893.52 L414.5,893.52 L417.5,893.52 L420.5,893.52 L423.5,893.52 L426.5,888.82 L429.5,893.52 L432.5,893.52 L435.5,893.52 L438.5,893.52 L441.5,893.52 L444.5,893.52 L447.5,893.52 L450.5,893.52 L453.5,893.52 L456.5,893.52 L459.5,893.52 L462.5,893.52 L465.5,893.52 L468.5,893.52 L471.5,893.52 L474.5,893.52 L477.5,893.52 L480.5,893.52 L483.5,893.52 L486.5,893.52 L489.5,893.52 L492.5,893.52 L495.5,893.52 L498.5,893.52 L501.5,893.52 L504.5,893.52 L507.5,893.52 L510.5,893.52 L513.5,893.52 L516.5,882.21 L519.5,889.92 L522.5,893.52 L525.5,893.52 L528.5,893.52 L531.5,893.52 L534.5,893.52 L537.5,893.52 L540.5,893.52 L543.5,893.52 L546.5,893.52 L549.5,893.52 L552.5,893.52 L555.5,893.52 L558.5,893.52 L561.5,893.52 L564.5,893.52 L567.5,893.52 L570.5,893.52 L573.5,893.52 L576.5,893.52 L579.5,893.52 L582.5,893.52 L585.5,893.52 L588.5,893.52 L591.5,893.52 L594.5,893.52 L597.5,893.52 L600.5,893.52 L603.5,893.52 L606.5,893.52 L609.5,893.52 L612.5,893.52 L615.5,893.52 L618.5,893.52 L621.5,893.52 L624.5,893.52 L627.5,893.52 L630.5,889.45 L633.5,880.31 L636.5,880.29 L639.5,880.28 L642.5,880.26 L645.5,880.21 L648.5,879.99 L651.5,879.77 L654.5,879.48 L657.5,879.18 L660.5,878.91 L663.5,878.73 L666.5,878.72 L669.5,879.12 L672.5,879.81 L675.5,879.95 L678.5,879.96 L681.5,879.98 L684.5,879.99 L687.5,880.01 L690.5,880.85 L693.5,889.11 L696.5,893.52 L699.5,893.52 L702.5,893.52 L705.5,893.52 L708.5,893.52 L711.5,893.52 L714.5,893.52 L717.5,893.52 L720.5,893.52 L723.5,893.52 L726.5,893.52 L729.5,893.52 L732.5,893.52 L735.5,893.52 L738.5,893.52 L741.5,893.52 L744.5,893.52 L747.5,893.52 L750.5,893.52 L753.5,893.52 L756.5,893.52 L759.5,893.52 L762.5,893.52 L765.5,893.52 L768.5,893.52 L771.5,893.52 L774.5,893.52 L777.5,893.52 L780.5,893.52 L783.5,893.52 L786.5,893.52 L789.5,893.52 L792.5,893.52 L795.5,893.52 L798.5,893.52 L801.5,893.52 L804.5,893.52 L807.5,893.52 L810.5,893.52 L813.5,893.52 L816.5,893.52 L819.5,893.52 L822.5,893.52 L825.5,893.52 L828.5,893.52 L831.5,893.52 L834.5,893.52 L837.5,893.52 L840.5,893.52 L843.5,893.52 L846.5,893.52 L849.5,893.52 L852.5,893.52 L855.5,893.52 L858.5,893.52 L861.5,893.52 L864.5,893.52 L867.5,893.52 L870.5,893.52 L873.5,893.52 L876.5,893.52 L879.5,893.52 L882.5,893.52 L885.5,893.52 L888.5,893.52 L891.5,893.52 L894.5,893.52 L897.5,893.52 L900.5,893.52 L903.5,893.52 L906.5,893.52 L909.5,893.52 L912.5,893.52 L915.5,893.52 L918.5,893.52 L921.5,893.52 L924.5,893.52 L927.5,893.52 L930.5,886.16 L933.5,880.16 L936.5,880.16 L939.5,880.16 L942.5,880.16 L945.5,880.16 L948.5,885.25 L951.5,893.52 L954.5,893.52 L957.5,893.52 L960.5,893.52 L963.5,893.52 L966.5,893.52 L969.5,893.52 L972.5,893.52 L975.5,893.52 L978.5,893.52 L981.5,893.52 L984.5,893.52 L987.5,893.52 L990.5,893.52 L993.5,893.52 L996.5,893.52 L999.5,893.52 L1002.5,893.52 L1005.5,893.52 L1008.5,893.52 L1011.5,893.52 L1014.5,893.52 L1017.5,893.52 L1020.5,893.52 L1023.5,893.52 L1026.5,893.52 L1029.5,893.52 L1032.5,893.52 L1035.5,893.52 L1038.5,893.52 L1041.5,893.52 L1044.5,893.52 L1047.5,893.52 L1050.5,893.52 L1053.5,893.52 L1056.5,893.52 L1059.5,893.52 L1062.5,893.52 L1065.5,893.52 L1068.5,893.52 L1071.5,893.52 L1074.5,893.52 L1077.5,893.52 L1080.5,893.52 L1083.5,893.52 L1086.5,893.52 L1089.5,893.52 L1092.5,893.52 L1095.5,893.52 L1098.5,893.52 L1101.5,893.52 L1104.5,893.52 L1107.5,893.52 L1110.5,893.52 L1113.5,893.52 L1116.5,893.52 L1119.5,893.52 L1122.5,893.52 L1125.5,893.52 L1128.5,893.52 L1131.5,893.52 L1134.5,893.52 L1137.5,893.52 L1140.5,893.52 L1143.5,893.52 L1146.5,893.52 L1149.5,893.52 L1152.5,893.52 L1155.5,893.52 L1158.5,893.52 L1161.5,893.52 L1164.5,893.52 L1167.5,893.52 L1170.5,893.52 L1173.5,893.52 L1176.5,893.52 L1179.5,893.52 L1182.5,893.52 L1185.5,893.52 L1188.5,893.52 L1191.5,893.52 L1194.5,893.52 L1197.5,893.52 L1200.5,893.52 L1203.5,893.52 L1206.5,893.52 L1209.5,893.52 L1212.5,893.52 L1215.5,893.52 L1218.5,893.52 L1221.5,893.52 L1224.5,893.52 L1227.5,893.52 L1230.5,886.60 L1233.5,879.96 L1236.5,879.96 L1239.5,879.96 L1242.5,879.96 L1245.5,879.96 L1248.5,887.66 L1251.5,893.52 L1254.5,893.52 L1257.5,893.52 L1260.5,893.52 L1263.5,893.52 L1266.5,893.52 L1269.5,893.52 L1272.5,893.56 L1275.5,893.60 L1278.5,893.64 L1281.5,893.64 L1284.5,893.60 L1287.5,893.56 L1290.5,893.52 L1293.5,893.52 L1296.5,893.52 L1299.5,893.52 L1302.5,893.52 L1305.5,893.52 L1308.5,893.52 L1311.5,893.52 L1314.5,893.52 L1317.5,893.52 L1320.5,893.52 L1323.5,893.52 L1326.5,893.52 L1329.5,893.52 L1332.5,893.52 L1335.5,893.52 L1338.5,893.52 L1341.5,893.52 L1344.5,893.52 L1347.5,893.52 L1350.5,893.52 L1353.5,893.52 L1356.5,893.52 L1359.5,893.52 L1362.5,893.52 L1365.5,893.52 L1368.5,893.52 L1371.5,893.52 L1374.5,893.52 L1377.5,893.52 L1380.5,893.52 L1383.5,893.52 L1386.5,893.52 L1389.5,893.52 L1392.5,893.52 L1395.5,893.52 L1398.5,893.52 L1401.5,893.52 L1404.5,893.52 L1407.5,893.52 L1410.5,893.52 L1413.5,893.52 L1416.5,893.52 L1419.5,893.52 L1422.5,893.52 L1425.5,893.52 L1428.5,893.52 L1431.5,893.52 L1434.5,893.52 L1437.5,893.52 L1440.5,893.52 L1443.5,893.52 L1446.5,893.52 L1449.5,893.52 L1452.5,893.52 L1455.5,893.52 L1458.5,893.52 L1461.5,893.52 L1464.5,893.52 L1467.5,893.52 L1470.5,893.52 L1473.5,893.52 L1476.5,893.52 L1479.5,893.52 L1482.5,893.52 L1485.5,893.52 L1488.5,893.52 L1491.5,893.52 L1494.5,893.52 L1497.5,893.52 L1500.5,893.52 L1503.5,893.52 L1506.5,893.52 L1509.5,893.52 L1512.5,893.52 L1515.5,893.52 L1518.5,893.52 L1521.5,893.52 L1524.5,893.52 L1527.5,893.52 L1530.5,893.52 L1533.5,893.52 L1536.5,893.52 L1539.5,893.52 L1542.5,893.52 L1545.5,893.52 L1548.5,893.52 L1551.5,893.52 L1554.5,893.52 L1557.5,893.52 L1560.5,893.52 L1563.5,893.52 L1566.5,893.52 L1569.5,893.52 L1572.5,893.52 L1575.5,893.52 L1578.5,893.52 L1581.5,893.52 L1584.5,893.52 L1587.5,893.52 L1590.5,893.52 L1593.5,893.52 L1596.5,893.52 L1599.5,893.52 L1602.5,893.52 L1605.5,893.52 L1608.5,893.52 L1611.5,893.52 L1614.5,893.52 L1617.5,893.52 L1620.5,893.52 L1623.5,893.52 L1626.5,893.52 L1629.5,893.52 L1632.5,893.52 L1635.5,893.52 L1638.5,893.52 L1641.5,893.52 L1644.5,893.52 L1647.5,893.52 L1650.5,893.52 L1653.5,893.52 L1656.5,893.52 L1659.5,893.52 L1662.5,890.45 L1665.5,887.99 L1668.5,893.52 L1671.5,893.52 L1674.5,893.52 L1677.5,893.52 L1680.5,893.52 L1683.5,893.52 L1686.5,893.52 L1689.5,893.52 L1692.5,893.52 L1695.5,893.52 L1698.5,893.52 L1701.5,893.52 L1704.5,893.52 L1707.5,893.52 L1710.5,893.52 L1713.5,893.52 L1716.5,893.52 L1719.5,893.52 L1722.5,893.52 L1725.5,893.52 L1728.5,893.52 L1731.5,893.52 L1734.5,893.52 L1737.5,893.52 L1740.5,893.52 L1743.5,893.52 L1746.5,893.52 L1749.5,893.52 L1752.5,893.52 L1755.5,893.52 L1758.5,893.52 L1761.5,893.52 L1764.5,893.52 L1767.5,893.52 L1770.5,893.52 L1773.5,893.52 L1776.5,893.52 L1779.5,893.52 L1782.5,893.52 L1785.5,893.52 L1788.5,893.52 L1791.5,893.52 L1794.5,893.52 L1797.5,893.52 L1800.5,893.52 L1803.5,893.52 L1806.5,893.52 L1809.5,893.52 L1812.5,893.52 L1815.5,893.52 L1818.5,893.52 L1821.5,893.52 L1824.5,893.52 L1827.5,893.52 L1830.5,885.32 L1833.5,880.15 L1836.5,880.11 L1839.5,880.07 L1842.5,880.04 L1845.5,884.98 L1848.5,893.24 L1851.5,893.52 L1854.5,893.52 L1857.5,893.52 L1860.5,893.52 L1863.5,893.52 L1866.5,893.52 L1869.5,893.52 L1872.5,893.52 L1875.5,893.52 L1878.5,893.52" stroke="#1a6fd8"/><path d="M99.5,894.75 L102.5,894.75 L105.5,894.75 L108.5,894.75 L111.5,894.75 L114.5,894.75 L117.5,870.58 L120.5,870.58 L123.5,870.58 L126.5,870.58 L129.5,870.58 L132.5,870.58 L135.5,870.58 L138.5,874.36 L141.5,894.75 L144.5,894.75 L147.5,894.75 L150.5,894.75 L153.5,894.75 L156.5,894.75 L159.5,875.58 L162.5,870.58 L165.5,870.58 L168.5,870.58 L171.5,870.58 L174.5,870.58 L177.5,872.52 L180.5,894.75 L183.5,894.75 L186.5,894.75 L189.5,894.75 L192.5,894.75 L195.5,894.75 L198.5,894.75 L201.5,877.83 L204.5,870.58 L207.5,870.58 L210.5,870.58 L213.5,870.58 L216.5,870.58 L219.5,870.58 L222.5,894.75 L225.5,894.75 L228.5,894.75 L231.5,894.75 L234.5,894.75 L237.5,894.75 L240.5,894.75 L243.5,894.75 L246.5,894.75 L249.5,894.75 L252.5,894.75 L255.5,894.75 L258.5,894.75 L261.5,894.75 L264.5,894.75 L267.5,894.75 L270.5,894.75 L273.5,894.75 L276.5,894.75 L279.5,894.75 L282.5,894.75 L285.5,894.75 L288.5,894.75 L291.5,894.75 L294.5,894.75 L297.5,894.75 L300.5,894.75 L303.5,894.75 L306.5,894.75 L309.5,894.75 L312.5,894.75 L315.5,894.75 L318.5,894.75 L321.5,894.75 L324.5,894.75 L327.5,894.75 L330.5,876.38 L333.5,870.58 L336.5,870.58 L339.5,870.58 L342.5,870.58 L345.5,870.58 L348.5,870.58 L351.5,870.58 L354.5,883.67 L357.5,894.75 L360.5,894.75 L363.5,894.75 L366.5,894.75 L369.5,894.75 L372.5,885.69 L375.5,870.58 L378.5,870.58 L381.5,870.58 L384.5,870.58 L387.5,870.58 L390.5,870.58 L393.5,870.58 L396.5,882.67 L399.5,894.75 L402.5,894.75 L405.5,894.75 L408.5,894.75 L411.5,894.75 L414.5,890.88 L417.5,870.58 L420.5,870.58 L423.5,870.58 L426.5,870.58 L429.5,870.58 L432.5,870.58 L435.5,889.26 L438.5,894.75 L441.5,894.75 L444.5,894.75 L447.5,894.75 L450.5,894.75 L453.5,894.75 L456.5,894.75 L459.5,870.58 L462.5,870.58 L465.5,870.58 L468.5,870.58 L471.5,870.58 L474.5,870.58 L477.5,881.91 L480.5,894.75 L483.5,894.75 L486.5,894.75 L489.5,894.75 L492.5,894.75 L495.5,894.75 L498.5,894.75 L501.5,877.25 L504.5,870.58 L507.5,870.58 L510.5,870.58 L513.5,870.58 L516.5,870.58 L519.5,878.64 L522.5,894.75 L525.5,894.75 L528.5,894.75 L531.5,894.75 L534.5,894.75 L537.5,894.75 L540.5,894.75 L543.5,894.75 L546.5,894.75 L549.5,894.75 L552.5,894.75 L555.5,894.75 L558.5,894.75 L561.5,894.75 L564.5,894.75 L567.5,894.75 L570.5,894.75 L573.5,894.75 L576.5,894.75 L579.5,894.75 L582.5,894.75 L585.5,894.75 L588.5,894.75 L591.5,894.75 L594.5,894.75 L597.5,894.75 L600.5,894.75 L603.5,894.75 L606.5,894.75 L609.5,894.75 L612.5,894.75 L615.5,894.75 L618.5,894.75 L621.5,894.75 L624.5,894.75 L627.5,894.75 L630.5,870.58 L633.5,870.58 L636.5,870.58 L639.5,870.58 L642.5,870.58 L645.5,870.58 L648.5,870.58 L651.5,870.58 L654.5,881.96 L657.5,894.75 L660.5,894.75 L663.5,894.75 L666.5,894.75 L669.5,894.75 L672.5,875.62 L675.5,870.58 L678.5,870.58 L681.5,870.58 L684.5,870.58 L687.5,870.58 L690.5,870.58 L693.5,877.25 L696.5,894.75 L699.5,894.75 L702.5,894.75 L705.5,894.75 L708.5,894.75 L711.5,894.75 L714.5,878.32 L717.5,870.58 L720.5,870.58 L723.5,870.58 L726.5,870.58 L729.5,870.58 L732.5,870.58 L735.5,870.58 L738.5,873.60 L741.5,894.75 L744.5,894.75 L747.5,894.75 L750.5,894.75 L753.5,894.75 L756.5,887.98 L759.5,870.58 L762.5,870.58 L765.5,870.58 L768.5,870.58 L771.5,870.58 L774.5,870.58 L777.5,887.98 L780.5,894.75 L783.5,892.45 L786.5,893.55 L789.5,894.75 L792.5,894.75 L795.5,894.75 L798.5,892.82 L801.5,870.58 L804.5,870.58 L807.5,870.58 L810.5,870.58 L813.5,870.58 L816.5,870.58 L819.5,884.18 L822.5,894.75 L825.5,894.75 L828.5,894.75 L831.5,894.75 L834.5,894.75 L837.5,894.75 L840.5,894.75 L843.5,894.75 L846.5,894.75 L849.5,894.75 L852.5,894.75 L855.5,894.75 L858.5,894.75 L861.5,894.75 L864.5,894.75 L867.5,894.75 L870.5,894.75 L873.5,894.75 L876.5,894.75 L879.5,894.75 L882.5,894.75 L885.5,894.75 L888.5,894.75 L891.5,894.75 L894.5,894.75 L897.5,894.75 L900.5,894.75 L903.5,894.75 L906.5,894.75 L909.5,894.75 L912.5,894.75 L915.5,894.75 L918.5,894.75 L921.5,894.75 L924.5,894.75 L927.5,886.69 L930.5,870.58 L933.5,870.58 L936.5,870.58 L939.5,870.58 L942.5,870.58 L945.5,870.58 L948.5,870.58 L951.5,892.48 L954.5,894.75 L957.5,894.75 L960.5,894.75 L963.5,894.75 L966.5,894.75 L969.5,894.75 L972.5,870.58 L975.5,870.58 L978.5,870.58 L981.5,870.58 L984.5,870.58 L987.5,870.58 L990.5,883.67 L993.5,894.75 L996.5,894.75 L999.5,894.75 L1002.5,894.75 L1005.5,894.75 L1008.5,894.75 L1011.5,894.75 L1014.5,875.42 L1017.5,870.58 L1020.5,870.58 L1023.5,870.58 L1026.5,870.58 L1029.5,870.58 L1032.5,870.58 L1035.5,870.58 L1038.5,887.57 L1041.5,894.75 L1044.5,894.75 L1047.5,894.75 L1050.5,894.75 L1053.5,894.75 L1056.5,894.75 L1059.5,894.75 L1062.5,894.75 L1065.5,894.75 L1068.5,894.75 L1071.5,894.75 L1074.5,894.75 L1077.5,894.75 L1080.5,894.75 L1083.5,894.75 L1086.5,894.75 L1089.5,894.75 L1092.5,894.75 L1095.5,894.75 L1098.5,888.69 L1101.5,870.50 L1104.5,870.50 L1107.5,870.50 L1110.5,870.50 L1113.5,870.50 L1116.5,870.50 L1119.5,890.87 L1122.5,894.75 L1125.5,894.75 L1128.5,894.75 L1131.5,894.75 L1134.5,894.75 L1137.5,894.75 L1140.5,894.75 L1143.5,894.75 L1146.5,894.75 L1149.5,894.75 L1152.5,894.75 L1155.5,894.75 L1158.5,894.75 L1161.5,894.75 L1164.5,894.75 L1167.5,894.75 L1170.5,894.75 L1173.5,894.75 L1176.5,894.75 L1179.5,894.75 L1182.5,894.75 L1185.5,894.75 L1188.5,894.75 L1191.5,894.75 L1194.5,894.75 L1197.5,894.75 L1200.5,894.75 L1203.5,894.75 L1206.5,894.75 L1209.5,894.75 L1212.5,894.75 L1215.5,894.75 L1218.5,890.66 L1221.5,894.75 L1224.5,894.75 L1227.5,891.12 L1230.5,870.58 L1233.5,870.58 L1236.5,870.58 L1239.5,870.58 L1242.5,870.58 L1245.5,870.58 L1248.5,879.28 L1251.5,894.75 L1254.5,894.75 L1257.5,894.75 L1260.5,894.75 L1263.5,894.75 L1266.5,894.75 L1269.5,886.42 L1272.5,870.58 L1275.5,870.58 L1278.5,870.58 L1281.5,870.58 L1284.5,870.58 L1287.5,870.58 L1290.5,878.87 L1293.5,894.75 L1296.5,894.75 L1299.5,894.75 L1302.5,894.75 L1305.5,894.75 L1308.5,894.75 L1311.5,894.75 L1314.5,873.81 L1317.5,870.58 L1320.5,870.58 L1323.5,870.58 L1326.5,870.58 L1329.5,870.58 L1332.5,880.53 L1335.5,894.75 L1338.5,894.75 L1341.5,894.75 L1344.5,894.75 L1347.5,894.75 L1350.5,894.75 L1353.5,894.75 L1356.5,875.58 L1359.5,870.58 L1362.5,872.16 L1365.5,872.16 L1368.5,872.16 L1371.5,872.16 L1374.5,872.16 L1377.5,892.63 L1380.5,894.75 L1383.5,894.75 L1386.5,894.75 L1389.5,894.75 L1392.5,894.75 L1395.5,894.75 L1398.5,882.09 L1401.5,872.24 L1404.5,872.24 L1407.5,872.24 L1410.5,872.24 L1413.5,872.24 L1416.5,872.24 L1419.5,872.24 L1422.5,874.92 L1425.5,891.00 L1428.5,894.75 L1431.5,894.75 L1434.5,894.75 L1437.5,894.75 L1440.5,894.75 L1443.5,894.75 L1446.5,894.75 L1449.5,894.75 L1452.5,894.75 L1455.5,894.75 L1458.5,894.75 L1461.5,894.75 L1464.5,894.75 L1467.5,894.75 L1470.5,894.75 L1473.5,894.75 L1476.5,894.75 L1479.5,894.75 L1482.5,894.75 L1485.5,894.75 L1488.5,894.75 L1491.5,894.75 L1494.5,894.75 L1497.5,894.75 L1500.5,894.75 L1503.5,894.75 L1506.5,894.75 L1509.5,894.75 L1512.5,894.75 L1515.5,894.75 L1518.5,894.75 L1521.5,894.75 L1524.5,894.75 L1527.5,894.75 L1530.5,894.75 L1533.5,894.75 L1536.5,894.75 L1539.5,894.75 L1542.5,894.75 L1545.5,894.75 L1548.5,894.75 L1551.5,894.75 L1554.5,894.75 L1557.5,894.75 L1560.5,894.75 L1563.5,894.75 L1566.5,894.75 L1569.5,886.65 L1572.5,872.24 L1575.5,872.24 L1578.5,872.24 L1581.5,872.24 L1584.5,872.24 L1587.5,872.24 L1590.5,872.24 L1593.5,872.24 L1596.5,872.24 L1599.5,887.01 L1602.5,894.75 L1605.5,894.75 L1608.5,894.75 L1611.5,893.85 L1614.5,872.24 L1617.5,872.24 L1620.5,872.24 L1623.5,872.24 L1626.5,872.24 L1629.5,872.24 L1632.5,872.24 L1635.5,872.24 L1638.5,872.95 L1641.5,894.05 L1644.5,894.75 L1647.5,894.75 L1650.5,894.75 L1653.5,894.75 L1656.5,873.08 L1659.5,872.24 L1662.5,872.24 L1665.5,872.24 L1668.5,872.24 L1671.5,872.24 L1674.5,872.24 L1677.5,872.24 L1680.5,880.60 L1683.5,894.75 L1686.5,894.75 L1689.5,894.75 L1692.5,894.75 L1695.5,894.75 L1698.5,880.29 L1701.5,872.16 L1704.5,872.16 L1707.5,872.16 L1710.5,872.16 L1713.5,872.16 L1716.5,875.07 L1719.5,894.75 L1722.5,894.75 L1725.5,894.75 L1728.5,894.75 L1731.5,894.75 L1734.5,894.75 L1737.5,894.75 L1740.5,894.75 L1743.5,894.75 L1746.5,894.75 L1749.5,894.75 L1752.5,894.75 L1755.5,894.75 L1758.5,894.75 L1761.5,894.75 L1764.5,894.75 L1767.5,894.75 L1770.5,894.75 L1773.5,894.75 L1776.5,894.75 L1779.5,894.75 L1782.5,894.75 L1785.5,894.75 L1788.5,894.75 L1791.5,894.75 L1794.5,894.75 L1797.5,894.75 L1800.5,894.75 L1803.5,894.75 L1806.5,894.75 L1809.5,894.75 L1812.5,894.75 L1815.5,894.75 L1818.5,894.75 L1821.5,894.75 L1824.5,894.75 L1827.5,874.94 L1830.5,872.24 L1833.5,872.24 L1836.5,872.24 L1839.5,872.24 L1842.5,872.24 L1845.5,872.24 L1848.5,882.53 L1851.5,894.75 L1854.5,894.75 L1857.5,894.75 L1860.5,894.75 L1863.5,894.75 L1866.5,894.75 L1869.5,880.09 L1872.5,872.16 L1875.5,872.16 L1878.5,872.16" stroke="#1e2f73"/></g>
<g stroke="#000" stroke-width="1.2">
<line x1="99.5" x2="99.5" y1="897" y2="901.5"/>
<line x1="1879.2" x2="1879.2" y1="897" y2="901.5"/>
<line x1="275.85" x2="275.85" y1="897" y2="901.5"/><line x1="575.14" x2="575.14" y1="897" y2="901.5"/><line x1="874.43" x2="874.43" y1="897" y2="901.5"/><line x1="1173.72" x2="1173.72" y1="897" y2="901.5"/><line x1="1473.02" x2="1473.02" y1="897" y2="901.5"/><line x1="1772.31" x2="1772.31" y1="897" y2="901.5"/></g>
<g font-family="Liberation Sans, sans-serif" font-size="10" fill="#111" text-anchor="middle"><text x="275.85" y="911.5">Apr 21</text><text x="575.14" y="911.5">Apr 28</text><text x="874.43" y="911.5">May 05</text><text x="1173.72" y="911.5">May 12</text><text x="1473.02" y="911.5">May 19</text><text x="1772.31" y="911.5">May 26</text></g>
</svg>

<div class="abs" style="left:1917px;top:89px;width:1px;height:847px;background:#f7f7f7"></div>
<svg class="abs" style="left:0;top:916px" width="1919" height="20" viewBox="0 0 1919 20">
  <path d="M0,9 A11,11 0 0 0 11,20 H0 Z" fill="#111"/>
  <path d="M1919,9 A11,11 0 0 1 1908,20 H1919 Z" fill="#111"/>
</svg>
<div class="abs" style="left:0;top:0;width:1919px;height:2px;background:#fff"></div>
</body></html>
